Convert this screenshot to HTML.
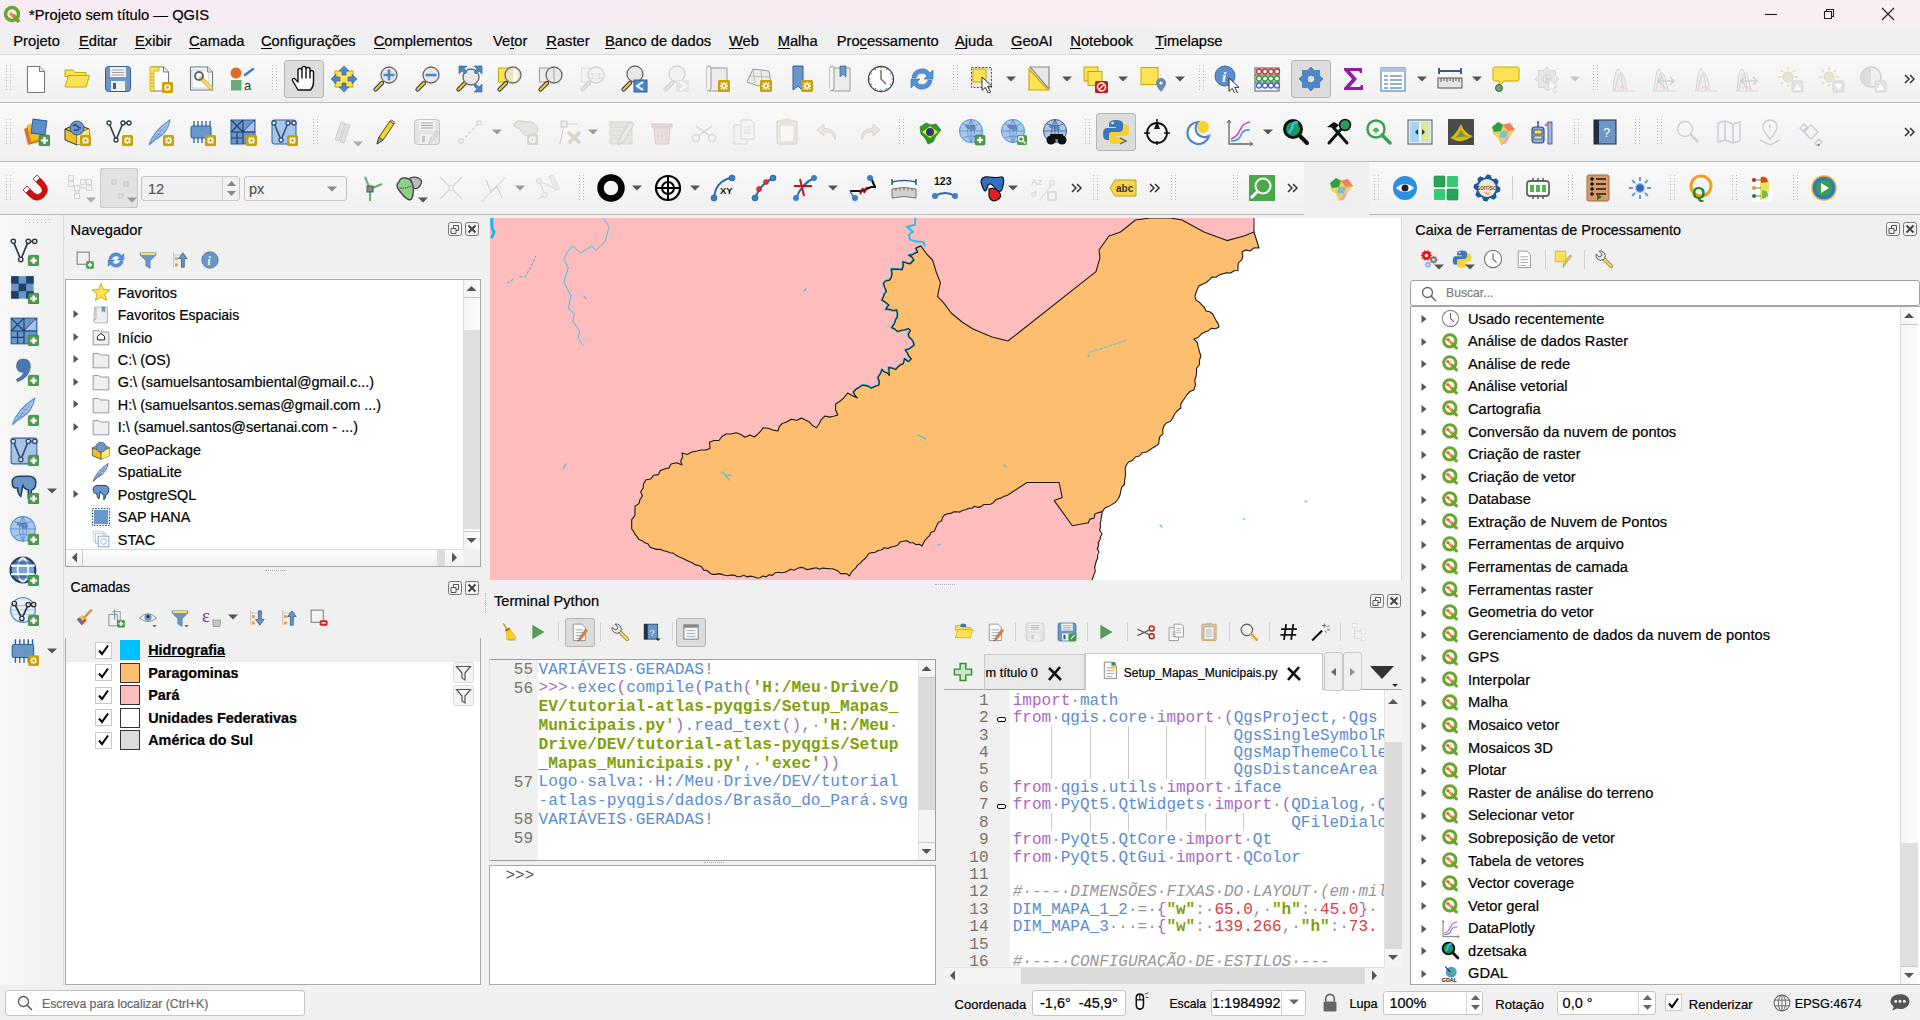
<!DOCTYPE html><html><head><meta charset="utf-8"><style>
*{margin:0;padding:0;box-sizing:border-box}
html,body{width:1920px;height:1020px;overflow:hidden;background:#f0f0f0;position:relative}
body>div{position:absolute}
.t{position:absolute;white-space:pre;-webkit-text-stroke:0.2px currentColor}
</style></head><body><div style="left:0px;top:0px;width:1920px;height:28px;background:linear-gradient(90deg,#f7ebf5,#f8ecf3 40%,#f8eff0)"></div>
<svg style="position:absolute;left:3px;top:5px;" width="19" height="19" viewBox="0 0 19 19"><circle cx="9" cy="9" r="6.5" fill="none" stroke="#6aa430" stroke-width="3.5"/><path d="M10 10l6 7" stroke="#6aa430" stroke-width="3.5"/><path d="M7 8l4 4" stroke="#f08a30" stroke-width="3"/></svg>
<div class="t" style="left:29px;top:7.99px;font-size:14.723px;line-height:14.723px;color:#000;font-weight:normal;font-family:'Liberation Sans',sans-serif;">*Projeto sem título — QGIS</div>
<svg style="position:absolute;left:1764px;top:8px;" width="14" height="12" viewBox="0 0 14 12"><path d="M1 6.5H13" stroke="#222" stroke-width="1.1"/></svg>
<svg style="position:absolute;left:1822px;top:7px;" width="14" height="14" viewBox="0 0 14 14"><path d="M2.5 4.5h7v7h-7z M4.5 4.5V2.5h7v7h-2" fill="none" stroke="#222" stroke-width="1.1"/></svg>
<svg style="position:absolute;left:1881px;top:7px;" width="14" height="14" viewBox="0 0 14 14"><path d="M1 1L13 13M13 1L1 13" stroke="#222" stroke-width="1.2"/></svg>
<div style="left:0px;top:28px;width:1920px;height:26px;background:#f0f0f0"></div>
<div class="t" style="left:13.3px;top:34.01px;font-size:14.7px;line-height:14.7px;color:#000;font-weight:normal;font-family:'Liberation Sans',sans-serif;">Projeto</div>
<div style="left:36px;top:48px;width:3px;height:1px;background:#000"></div>
<div class="t" style="left:79px;top:34.01px;font-size:14.7px;line-height:14.7px;color:#000;font-weight:normal;font-family:'Liberation Sans',sans-serif;">Editar</div>
<div style="left:79px;top:48px;width:10px;height:1px;background:#000"></div>
<div class="t" style="left:135px;top:34.01px;font-size:14.7px;line-height:14.7px;color:#000;font-weight:normal;font-family:'Liberation Sans',sans-serif;">Exibir</div>
<div style="left:135px;top:48px;width:10px;height:1px;background:#000"></div>
<div class="t" style="left:189px;top:34.01px;font-size:14.7px;line-height:14.7px;color:#000;font-weight:normal;font-family:'Liberation Sans',sans-serif;">Camada</div>
<div style="left:189px;top:48px;width:11px;height:1px;background:#000"></div>
<div class="t" style="left:261px;top:34.01px;font-size:14.7px;line-height:14.7px;color:#000;font-weight:normal;font-family:'Liberation Sans',sans-serif;">Configurações</div>
<div style="left:261px;top:48px;width:11px;height:1px;background:#000"></div>
<div class="t" style="left:373.7px;top:34.01px;font-size:14.7px;line-height:14.7px;color:#000;font-weight:normal;font-family:'Liberation Sans',sans-serif;">Complementos</div>
<div style="left:374px;top:48px;width:11px;height:1px;background:#000"></div>
<div class="t" style="left:493px;top:34.01px;font-size:14.7px;line-height:14.7px;color:#000;font-weight:normal;font-family:'Liberation Sans',sans-serif;">Vetor</div>
<div style="left:510px;top:48px;width:4px;height:1px;background:#000"></div>
<div class="t" style="left:546.3px;top:34.01px;font-size:14.7px;line-height:14.7px;color:#000;font-weight:normal;font-family:'Liberation Sans',sans-serif;">Raster</div>
<div style="left:546px;top:48px;width:11px;height:1px;background:#000"></div>
<div class="t" style="left:605px;top:34.01px;font-size:14.7px;line-height:14.7px;color:#000;font-weight:normal;font-family:'Liberation Sans',sans-serif;">Banco de dados</div>
<div style="left:605px;top:48px;width:10px;height:1px;background:#000"></div>
<div class="t" style="left:729px;top:34.01px;font-size:14.7px;line-height:14.7px;color:#000;font-weight:normal;font-family:'Liberation Sans',sans-serif;">Web</div>
<div style="left:729px;top:48px;width:14px;height:1px;background:#000"></div>
<div class="t" style="left:777.7px;top:34.01px;font-size:14.7px;line-height:14.7px;color:#000;font-weight:normal;font-family:'Liberation Sans',sans-serif;">Malha</div>
<div style="left:778px;top:48px;width:12px;height:1px;background:#000"></div>
<div class="t" style="left:836.7px;top:34.01px;font-size:14.7px;line-height:14.7px;color:#000;font-weight:normal;font-family:'Liberation Sans',sans-serif;">Processamento</div>
<div style="left:860px;top:48px;width:7px;height:1px;background:#000"></div>
<div class="t" style="left:955px;top:34.01px;font-size:14.7px;line-height:14.7px;color:#000;font-weight:normal;font-family:'Liberation Sans',sans-serif;">Ajuda</div>
<div style="left:955px;top:48px;width:10px;height:1px;background:#000"></div>
<div class="t" style="left:1011px;top:34.01px;font-size:14.7px;line-height:14.7px;color:#000;font-weight:normal;font-family:'Liberation Sans',sans-serif;">GeoAI</div>
<div style="left:1011px;top:48px;width:11px;height:1px;background:#000"></div>
<div class="t" style="left:1070.3px;top:34.01px;font-size:14.7px;line-height:14.7px;color:#000;font-weight:normal;font-family:'Liberation Sans',sans-serif;">Notebook</div>
<div style="left:1070px;top:48px;width:11px;height:1px;background:#000"></div>
<div class="t" style="left:1155.3px;top:34.01px;font-size:14.7px;line-height:14.7px;color:#000;font-weight:normal;font-family:'Liberation Sans',sans-serif;">Timelapse</div>
<div style="left:1155px;top:48px;width:9px;height:1px;background:#000"></div>
<div style="left:0px;top:54px;width:1920px;height:1px;background:#dadada"></div>
<div style="left:0px;top:55px;width:1920px;height:48px;background:linear-gradient(#f9f9f9,#f0f0f0)"></div>
<div style="left:0px;top:102px;width:1920px;height:1px;background:#b9b9b9"></div>
<div style="left:0px;top:103px;width:1920px;height:59px;background:linear-gradient(#f9f9f9,#f0f0f0)"></div>
<div style="left:0px;top:161px;width:1920px;height:1px;background:#b9b9b9"></div>
<div style="left:0px;top:162px;width:1920px;height:53px;background:linear-gradient(#f9f9f9,#f0f0f0)"></div>
<div style="left:0px;top:214px;width:1920px;height:1px;background:#b9b9b9"></div>
<svg style="position:absolute;left:6px;top:65px;" width="5" height="27" viewBox="0 0 5 27"><rect x="0" y="0" width="1" height="1" fill="#b8b8b8"/><rect x="0" y="3" width="1" height="1" fill="#b8b8b8"/><rect x="0" y="6" width="1" height="1" fill="#b8b8b8"/><rect x="0" y="9" width="1" height="1" fill="#b8b8b8"/><rect x="0" y="12" width="1" height="1" fill="#b8b8b8"/><rect x="0" y="15" width="1" height="1" fill="#b8b8b8"/><rect x="0" y="18" width="1" height="1" fill="#b8b8b8"/><rect x="0" y="21" width="1" height="1" fill="#b8b8b8"/><rect x="0" y="24" width="1" height="1" fill="#b8b8b8"/><rect x="4" y="0" width="1" height="1" fill="#b8b8b8"/><rect x="4" y="3" width="1" height="1" fill="#b8b8b8"/><rect x="4" y="6" width="1" height="1" fill="#b8b8b8"/><rect x="4" y="9" width="1" height="1" fill="#b8b8b8"/><rect x="4" y="12" width="1" height="1" fill="#b8b8b8"/><rect x="4" y="15" width="1" height="1" fill="#b8b8b8"/><rect x="4" y="18" width="1" height="1" fill="#b8b8b8"/><rect x="4" y="21" width="1" height="1" fill="#b8b8b8"/><rect x="4" y="24" width="1" height="1" fill="#b8b8b8"/></svg>
<svg style="position:absolute;left:272px;top:65px;" width="5" height="27" viewBox="0 0 5 27"><rect x="0" y="0" width="1" height="1" fill="#b8b8b8"/><rect x="0" y="3" width="1" height="1" fill="#b8b8b8"/><rect x="0" y="6" width="1" height="1" fill="#b8b8b8"/><rect x="0" y="9" width="1" height="1" fill="#b8b8b8"/><rect x="0" y="12" width="1" height="1" fill="#b8b8b8"/><rect x="0" y="15" width="1" height="1" fill="#b8b8b8"/><rect x="0" y="18" width="1" height="1" fill="#b8b8b8"/><rect x="0" y="21" width="1" height="1" fill="#b8b8b8"/><rect x="0" y="24" width="1" height="1" fill="#b8b8b8"/><rect x="4" y="0" width="1" height="1" fill="#b8b8b8"/><rect x="4" y="3" width="1" height="1" fill="#b8b8b8"/><rect x="4" y="6" width="1" height="1" fill="#b8b8b8"/><rect x="4" y="9" width="1" height="1" fill="#b8b8b8"/><rect x="4" y="12" width="1" height="1" fill="#b8b8b8"/><rect x="4" y="15" width="1" height="1" fill="#b8b8b8"/><rect x="4" y="18" width="1" height="1" fill="#b8b8b8"/><rect x="4" y="21" width="1" height="1" fill="#b8b8b8"/><rect x="4" y="24" width="1" height="1" fill="#b8b8b8"/></svg>
<svg style="position:absolute;left:953px;top:65px;" width="5" height="27" viewBox="0 0 5 27"><rect x="0" y="0" width="1" height="1" fill="#b8b8b8"/><rect x="0" y="3" width="1" height="1" fill="#b8b8b8"/><rect x="0" y="6" width="1" height="1" fill="#b8b8b8"/><rect x="0" y="9" width="1" height="1" fill="#b8b8b8"/><rect x="0" y="12" width="1" height="1" fill="#b8b8b8"/><rect x="0" y="15" width="1" height="1" fill="#b8b8b8"/><rect x="0" y="18" width="1" height="1" fill="#b8b8b8"/><rect x="0" y="21" width="1" height="1" fill="#b8b8b8"/><rect x="0" y="24" width="1" height="1" fill="#b8b8b8"/><rect x="4" y="0" width="1" height="1" fill="#b8b8b8"/><rect x="4" y="3" width="1" height="1" fill="#b8b8b8"/><rect x="4" y="6" width="1" height="1" fill="#b8b8b8"/><rect x="4" y="9" width="1" height="1" fill="#b8b8b8"/><rect x="4" y="12" width="1" height="1" fill="#b8b8b8"/><rect x="4" y="15" width="1" height="1" fill="#b8b8b8"/><rect x="4" y="18" width="1" height="1" fill="#b8b8b8"/><rect x="4" y="21" width="1" height="1" fill="#b8b8b8"/><rect x="4" y="24" width="1" height="1" fill="#b8b8b8"/></svg>
<svg style="position:absolute;left:1199px;top:65px;" width="5" height="27" viewBox="0 0 5 27"><rect x="0" y="0" width="1" height="1" fill="#b8b8b8"/><rect x="0" y="3" width="1" height="1" fill="#b8b8b8"/><rect x="0" y="6" width="1" height="1" fill="#b8b8b8"/><rect x="0" y="9" width="1" height="1" fill="#b8b8b8"/><rect x="0" y="12" width="1" height="1" fill="#b8b8b8"/><rect x="0" y="15" width="1" height="1" fill="#b8b8b8"/><rect x="0" y="18" width="1" height="1" fill="#b8b8b8"/><rect x="0" y="21" width="1" height="1" fill="#b8b8b8"/><rect x="0" y="24" width="1" height="1" fill="#b8b8b8"/><rect x="4" y="0" width="1" height="1" fill="#b8b8b8"/><rect x="4" y="3" width="1" height="1" fill="#b8b8b8"/><rect x="4" y="6" width="1" height="1" fill="#b8b8b8"/><rect x="4" y="9" width="1" height="1" fill="#b8b8b8"/><rect x="4" y="12" width="1" height="1" fill="#b8b8b8"/><rect x="4" y="15" width="1" height="1" fill="#b8b8b8"/><rect x="4" y="18" width="1" height="1" fill="#b8b8b8"/><rect x="4" y="21" width="1" height="1" fill="#b8b8b8"/><rect x="4" y="24" width="1" height="1" fill="#b8b8b8"/></svg>
<svg style="position:absolute;left:1593px;top:65px;" width="5" height="27" viewBox="0 0 5 27"><rect x="0" y="0" width="1" height="1" fill="#b8b8b8"/><rect x="0" y="3" width="1" height="1" fill="#b8b8b8"/><rect x="0" y="6" width="1" height="1" fill="#b8b8b8"/><rect x="0" y="9" width="1" height="1" fill="#b8b8b8"/><rect x="0" y="12" width="1" height="1" fill="#b8b8b8"/><rect x="0" y="15" width="1" height="1" fill="#b8b8b8"/><rect x="0" y="18" width="1" height="1" fill="#b8b8b8"/><rect x="0" y="21" width="1" height="1" fill="#b8b8b8"/><rect x="0" y="24" width="1" height="1" fill="#b8b8b8"/><rect x="4" y="0" width="1" height="1" fill="#b8b8b8"/><rect x="4" y="3" width="1" height="1" fill="#b8b8b8"/><rect x="4" y="6" width="1" height="1" fill="#b8b8b8"/><rect x="4" y="9" width="1" height="1" fill="#b8b8b8"/><rect x="4" y="12" width="1" height="1" fill="#b8b8b8"/><rect x="4" y="15" width="1" height="1" fill="#b8b8b8"/><rect x="4" y="18" width="1" height="1" fill="#b8b8b8"/><rect x="4" y="21" width="1" height="1" fill="#b8b8b8"/><rect x="4" y="24" width="1" height="1" fill="#b8b8b8"/></svg>
<div style="left:284px;top:60px;width:40px;height:38px;background:#dcdcdc;border:1px solid #b4b4b4;border-radius:3px"></div>
<div style="left:1291px;top:60px;width:40px;height:38px;background:#dcdcdc;border:1px solid #b4b4b4;border-radius:3px"></div>
<svg style="position:absolute;left:22px;top:65px;" width="28" height="28" viewBox="0 0 28 28"><path d="M5.5 1.5h12l5 5v21h-17z" fill="#fff" stroke="#777" stroke-width="1.1"/><path d="M17.5 1.5v5h5" fill="#eee" stroke="#777" stroke-width="1"/></svg>
<svg style="position:absolute;left:63px;top:65px;" width="28" height="28" viewBox="0 0 28 28"><path d="M2 5h8l2 2.5h11v4H2z" fill="#fde254" stroke="#c8a800"/><path d="M2 22L5.5 10.5H26.5L23 22z" fill="#fde254" stroke="#c8a800"/></svg>
<svg style="position:absolute;left:104px;top:65px;" width="28" height="28" viewBox="0 0 28 28"><rect x="1.5" y="1.5" width="25" height="25" rx="3" fill="#6a96c8" stroke="#2f5f98"/><rect x="6" y="2" width="16" height="10" fill="#f4f4f4"/><path d="M8 5h12M8 7.5h12M8 10h12" stroke="#888" stroke-width="0.8"/><rect x="7" y="16" width="14" height="10" fill="#f0f0f0"/><rect x="9" y="18" width="3" height="6" fill="#2f5f98"/></svg>
<svg style="position:absolute;left:146px;top:65px;" width="28" height="28" viewBox="0 0 28 28"><path d="M5.5 2.0h12l5 5v19h-17z" fill="#fff" stroke="#777" stroke-width="1.1"/><path d="M17.5 2.0v5h5" fill="#eee" stroke="#777" stroke-width="1"/><path d="M4 2h9v4h-5v20H4z" fill="#fde254" stroke="#c8a800" stroke-width="0.8"/><path d="M5 9h2M5 12h2M5 15h2M5 18h2M5 21h2" stroke="#b89800" stroke-width="0.7"/><rect x="16" y="17" width="11" height="11" rx="1.5" fill="#c9a100"/><g stroke="#fff" stroke-width="1.3"><path d="M21.5 19v7M18 22.5h7M18.8 19.8l5.4 5.4M24.2 19.8l-5.4 5.4"/></g><circle cx="21.5" cy="22.5" r="1.8" fill="#c9a100" stroke="#fff"/></svg>
<svg style="position:absolute;left:187px;top:65px;" width="28" height="28" viewBox="0 0 28 28"><path d="M3.5 2.0h17l5 5v18h-22z" fill="#fff" stroke="#777" stroke-width="1.1"/><path d="M20.5 2.0v5h5" fill="#eee" stroke="#777" stroke-width="1"/><rect x="5" y="5" width="17" height="18" fill="none" stroke="#a8c0f0" stroke-width="0.8"/><path d="M14 13l10 10" stroke="#d8b830" stroke-width="4" stroke-linecap="round"/><path d="M14 13l10 10" stroke="#fde070" stroke-width="2" stroke-linecap="round"/><circle cx="12" cy="11" r="4" fill="none" stroke="#666" stroke-width="2"/></svg>
<svg style="position:absolute;left:228px;top:65px;" width="28" height="28" viewBox="0 0 28 28"><circle cx="8" cy="8" r="5.5" fill="#e06a2c"/><rect x="3" y="15" width="10.5" height="10.5" fill="#6aaa78"/><path d="M17 10L25 4" stroke="#4a78c0" stroke-width="2.5" stroke-linecap="round"/><text x="16" y="25" font-family="Liberation Sans" font-size="13" fill="#333">a</text></svg>
<svg style="position:absolute;left:289px;top:65px;" width="28" height="28" viewBox="0 0 28 28"><path d="M9 25L3.5 15.5Q3 13 5.5 13.5L9 17V5.5Q9 3.5 11 3.5T13 5.5V13V3.5Q13 1.5 15 1.5T17 3.5V13V4.5Q17 2.5 19 2.5T21 4.5V13V7Q21 5.5 22.5 5.5T24.5 7V17Q24.5 22 21.5 25z" fill="#fff" stroke="#111" stroke-width="1.4" stroke-linejoin="round"/></svg>
<svg style="position:absolute;left:330px;top:65px;" width="28" height="28" viewBox="0 0 28 28"><rect x="5" y="6" width="18" height="16" fill="#fde254" stroke="#c8a800"/><g fill="#4f86c6" stroke="#2f5f98" stroke-width="0.6"><path d="M14 1l5 5h-3v4h-4V6H9z"/><path d="M14 27l5-5h-3v-4h-4v4H9z"/><path d="M1 14l5-5v3h4v4H6v3z"/><path d="M27 14l-5-5v3h-4v4h4v3z"/></g></svg>
<svg style="position:absolute;left:372px;top:65px;" width="28" height="28" viewBox="0 0 28 28"><path d="M3.5 24.5L10 18" stroke="#333" stroke-width="4.2" stroke-linecap="round"/><path d="M3.5 24.5L10 18" stroke="#f2cf3a" stroke-width="2.2" stroke-linecap="round"/><circle cx="17" cy="10" r="8" fill="#e8e8e8" stroke="#666" stroke-width="1.3"/><path d="M17 4.5v11M11.5 10h11" stroke="#4f86c6" stroke-width="2.6"/></svg>
<svg style="position:absolute;left:414px;top:65px;" width="28" height="28" viewBox="0 0 28 28"><path d="M3.5 24.5L10 18" stroke="#333" stroke-width="4.2" stroke-linecap="round"/><path d="M3.5 24.5L10 18" stroke="#f2cf3a" stroke-width="2.2" stroke-linecap="round"/><circle cx="17" cy="10" r="8" fill="#e8e8e8" stroke="#666" stroke-width="1.3"/><path d="M11.5 10h11" stroke="#4f86c6" stroke-width="2.6"/></svg>
<svg style="position:absolute;left:455px;top:65px;" width="28" height="28" viewBox="0 0 28 28"><path d="M3.5 24.5L10 18" stroke="#333" stroke-width="4.2" stroke-linecap="round"/><path d="M3.5 24.5L10 18" stroke="#f2cf3a" stroke-width="2.2" stroke-linecap="round"/><circle cx="16" cy="12" r="8" fill="#e8e8e8" stroke="#666" stroke-width="1.3"/><g fill="#4f86c6" stroke="#2f5f98" stroke-width="0.6"><path d="M4 1h8l-3 3 3 3-2 2-3-3-3 3z"/><path d="M27 1h-8l3 3-3 3 2 2 3-3 3 3z"/><path d="M27 27h-8l3-3-3-3 2-2 3 3 3-3z"/></g></svg>
<svg style="position:absolute;left:496px;top:65px;" width="28" height="28" viewBox="0 0 28 28"><rect x="2.5" y="3" width="9" height="14" fill="#fde254" stroke="#c8a800"/><path d="M3.5 24.5L10 18" stroke="#333" stroke-width="4.2" stroke-linecap="round"/><path d="M3.5 24.5L10 18" stroke="#f2cf3a" stroke-width="2.2" stroke-linecap="round"/><circle cx="17" cy="10" r="8" fill="#e8e2c8" stroke="#666" stroke-width="1.3"/><path d="M17 2.5a8 8 0 0 1 0 15z" fill="#fffbe0"/></svg>
<svg style="position:absolute;left:537px;top:65px;" width="28" height="28" viewBox="0 0 28 28"><rect x="2.5" y="3" width="9" height="14" fill="#eee" stroke="#999"/><path d="M3.5 24.5L10 18" stroke="#333" stroke-width="4.2" stroke-linecap="round"/><path d="M3.5 24.5L10 18" stroke="#f2cf3a" stroke-width="2.2" stroke-linecap="round"/><circle cx="17" cy="10" r="8" fill="#e8e8e8" stroke="#666" stroke-width="1.3"/><path d="M17 2.5v15" stroke="#aaa"/></svg>
<svg style="position:absolute;left:579px;top:65px;" width="28" height="28" viewBox="0 0 28 28"><rect x="2.5" y="3" width="9" height="14" fill="#f2f2f2" stroke="#ddd"/><path d="M3.5 24.5L10 18" stroke="#d0d0d0" stroke-width="4.2" stroke-linecap="round"/><path d="M3.5 24.5L10 18" stroke="#e0e0e0" stroke-width="2.2" stroke-linecap="round"/><circle cx="17" cy="10" r="8" fill="#f2f2f2" stroke="#d0d0d0" stroke-width="1.3"/><text x="10.5" y="14" font-family="Liberation Sans" font-size="9" fill="#d4d4d4">1:1</text></svg>
<svg style="position:absolute;left:620px;top:65px;" width="28" height="28" viewBox="0 0 28 28"><path d="M3.5 24.5L10 18" stroke="#333" stroke-width="4.2" stroke-linecap="round"/><path d="M3.5 24.5L10 18" stroke="#f2cf3a" stroke-width="2.2" stroke-linecap="round"/><circle cx="15" cy="9" r="8" fill="#e8e8e8" stroke="#666" stroke-width="1.3"/><rect x="14" y="15" width="13" height="12" fill="#4f86c6" stroke="#2f5f98"/><path d="M23 17l-6 4 6 4" stroke="#fff" stroke-width="2" fill="none"/></svg>
<svg style="position:absolute;left:662px;top:65px;" width="28" height="28" viewBox="0 0 28 28"><path d="M3.5 24.5L10 18" stroke="#d0d0d0" stroke-width="4.2" stroke-linecap="round"/><path d="M3.5 24.5L10 18" stroke="#e0e0e0" stroke-width="2.2" stroke-linecap="round"/><circle cx="15" cy="9" r="8" fill="#f2f2f2" stroke="#d0d0d0" stroke-width="1.3"/><rect x="14" y="15" width="13" height="12" fill="#e4e4e4"/><path d="M18 17l6 4-6 4" stroke="#fff" stroke-width="2" fill="none"/></svg>
<svg style="position:absolute;left:703px;top:65px;" width="28" height="28" viewBox="0 0 28 28"><path d="M4 3h20v23H7q-3 0-3-3z" fill="#ececec" stroke="#999"/><path d="M4 3q0-2 2-2t2 2v20q0 3-4 3" fill="#f4f4f4" stroke="#999"/><rect x="15" y="15" width="12" height="12" rx="1.5" fill="#c9a100"/><g stroke="#fff" stroke-width="1.3"><path d="M21.0 17v8M17 21.0h8M17.8 17.8l6.4 6.4M24.2 17.8l-6.4 6.4"/></g><circle cx="21.0" cy="21.0" r="1.8" fill="#c9a100" stroke="#fff"/></svg>
<svg style="position:absolute;left:745px;top:65px;" width="28" height="28" viewBox="0 0 28 28"><path d="M2 17L8 4L24 6L26 18L13 21z" fill="#ececec" stroke="#999"/><path d="M8 4L10 18M16 5L17 20M3 11L25 12" stroke="#aaa" stroke-width="0.7"/><rect x="15" y="15" width="12" height="12" rx="1.5" fill="#c9a100"/><g stroke="#fff" stroke-width="1.3"><path d="M21.0 17v8M17 21.0h8M17.8 17.8l6.4 6.4M24.2 17.8l-6.4 6.4"/></g><circle cx="21.0" cy="21.0" r="1.8" fill="#c9a100" stroke="#fff"/></svg>
<svg style="position:absolute;left:787px;top:65px;" width="28" height="28" viewBox="0 0 28 28"><path d="M6 1h10v25l-5-5-5 4z" fill="#6a96c8" stroke="#2f5f98"/><rect x="14" y="15" width="12" height="12" rx="1.5" fill="#c9a100"/><g stroke="#fff" stroke-width="1.3"><path d="M20.0 17v8M16 21.0h8M16.8 17.8l6.4 6.4M23.2 17.8l-6.4 6.4"/></g><circle cx="20.0" cy="21.0" r="1.8" fill="#c9a100" stroke="#fff"/></svg>
<svg style="position:absolute;left:826px;top:65px;" width="28" height="28" viewBox="0 0 28 28"><path d="M4 3h20v23H7q-3 0-3-3z" fill="#ececec" stroke="#999"/><path d="M4 3q0-2 2-2t2 2v20q0 3-4 3" fill="#f4f4f4" stroke="#999"/><path d="M14 1h6v11l-3-3-3 3z" fill="#6a96c8" stroke="#2f5f98" stroke-width="0.7"/></svg>
<svg style="position:absolute;left:867px;top:65px;" width="28" height="28" viewBox="0 0 28 28"><circle cx="14" cy="14" r="12.5" fill="#fff" stroke="#444" stroke-width="1.3"/><circle cx="25.0" cy="14.0" r="0.8" fill="#4f86c6"/><circle cx="23.5" cy="19.5" r="0.8" fill="#4f86c6"/><circle cx="19.5" cy="23.5" r="0.8" fill="#4f86c6"/><circle cx="14.0" cy="25.0" r="0.8" fill="#4f86c6"/><circle cx="8.5" cy="23.5" r="0.8" fill="#4f86c6"/><circle cx="4.5" cy="19.5" r="0.8" fill="#4f86c6"/><circle cx="3.0" cy="14.0" r="0.8" fill="#4f86c6"/><circle cx="4.5" cy="8.5" r="0.8" fill="#4f86c6"/><circle cx="8.5" cy="4.5" r="0.8" fill="#4f86c6"/><circle cx="14.0" cy="3.0" r="0.8" fill="#4f86c6"/><circle cx="19.5" cy="4.5" r="0.8" fill="#4f86c6"/><circle cx="23.5" cy="8.5" r="0.8" fill="#4f86c6"/><path d="M14 5v9l5 5" fill="none" stroke="#666" stroke-width="1.4"/></svg>
<svg style="position:absolute;left:908px;top:65px;" width="28" height="28" viewBox="0 0 28 28"><path d="M4 13A10 10 0 0 1 22 8l3-3v9h-9l3-3A6 6 0 0 0 8 13z" fill="#4f92d8" stroke="#2f6ab0" stroke-width="0.6"/><path d="M24 15A10 10 0 0 1 6 20l-3 3v-9h9l-3 3A6 6 0 0 0 20 15z" fill="#4f92d8" stroke="#2f6ab0" stroke-width="0.6"/></svg>
<svg style="position:absolute;left:969px;top:65px;" width="28" height="28" viewBox="0 0 28 28"><rect x="2.5" y="2.5" width="20" height="20" fill="#e8e8e8" stroke="#555" stroke-dasharray="2 1.5"/><rect x="4" y="4" width="13" height="13" fill="#fde254" stroke="#c8a800"/><path transform="translate(13 12) scale(0.95)" d="M0 0v14l3.5-3 3 6 2.5-1.2-3-6h4.5z" fill="#fff" stroke="#222" stroke-width="1"/></svg>
<svg style="position:absolute;left:1026px;top:65px;" width="28" height="28" viewBox="0 0 28 28"><path d="M4 2h19v22z" fill="#e8e8e8" stroke="#888" stroke-width="1.2"/><path d="M3 4l19 21H3z" fill="#fde254" stroke="#c8a800" stroke-width="1.2"/></svg>
<svg style="position:absolute;left:1081px;top:65px;" width="28" height="28" viewBox="0 0 28 28"><rect x="3" y="2" width="14" height="14" fill="#fde254" stroke="#c8a800"/><rect x="7" y="6.5" width="14" height="14" fill="#fde254" stroke="#c8a800"/><rect x="14" y="16" width="13" height="12" rx="1.5" fill="#d01818"/><circle cx="20.5" cy="22" r="4" fill="none" stroke="#fff" stroke-width="1.5"/><path d="M18 24.5l5-5" stroke="#fff" stroke-width="1.5"/></svg>
<svg style="position:absolute;left:1138px;top:65px;" width="28" height="28" viewBox="0 0 28 28"><rect x="3" y="2.5" width="17" height="17" fill="#fde254" stroke="#c8a800"/><path d="M23 27q-5-6-5-9a5 5 0 0 1 10 0q0 3-5 9z" fill="#6a8aa8"/><circle cx="23" cy="18" r="1.6" fill="#fff"/></svg>
<svg style="position:absolute;left:1214px;top:65px;" width="28" height="28" viewBox="0 0 28 28"><circle cx="11" cy="11" r="10" fill="#5a8ed0" stroke="#3a6aa8"/><text x="8" y="17" font-family="Liberation Serif" font-style="italic" font-weight="bold" font-size="15" fill="#fff">i</text><path transform="translate(15 13) scale(0.95)" d="M0 0v14l3.5-3 3 6 2.5-1.2-3-6h4.5z" fill="#fff" stroke="#222" stroke-width="1"/></svg>
<svg style="position:absolute;left:1253px;top:65px;" width="28" height="28" viewBox="0 0 28 28"><rect x="2" y="3" width="24" height="23" fill="#fff" stroke="#555"/><path d="M2 10h24M2 17h24" stroke="#555"/><circle cx="6" cy="6.5" r="2.5" fill="#fff" stroke="#d03030" stroke-width="1.3"/><circle cx="12" cy="6.5" r="2.5" fill="#fff" stroke="#d03030" stroke-width="1.3"/><circle cx="18" cy="6.5" r="2.5" fill="#fff" stroke="#d03030" stroke-width="1.3"/><circle cx="24" cy="6.5" r="2.5" fill="#fff" stroke="#d03030" stroke-width="1.3"/><circle cx="6" cy="13.5" r="2.5" fill="#fff" stroke="#3a9a3a" stroke-width="1.3"/><circle cx="12" cy="13.5" r="2.5" fill="#fff" stroke="#3a9a3a" stroke-width="1.3"/><circle cx="18" cy="13.5" r="2.5" fill="#fff" stroke="#3a9a3a" stroke-width="1.3"/><circle cx="24" cy="13.5" r="2.5" fill="#fff" stroke="#3a9a3a" stroke-width="1.3"/><circle cx="6" cy="20.5" r="2.5" fill="#fff" stroke="#3a6ac0" stroke-width="1.3"/><circle cx="12" cy="20.5" r="2.5" fill="#fff" stroke="#3a6ac0" stroke-width="1.3"/><circle cx="18" cy="20.5" r="2.5" fill="#fff" stroke="#3a6ac0" stroke-width="1.3"/><circle cx="24" cy="20.5" r="2.5" fill="#fff" stroke="#3a6ac0" stroke-width="1.3"/></svg>
<svg style="position:absolute;left:1297px;top:65px;" width="28" height="28" viewBox="0 0 28 28"><polygon points="26.0,14.0 22.3,17.4 22.5,22.5 17.4,22.3 14.0,26.0 10.6,22.3 5.5,22.5 5.7,17.4 2.0,14.0 5.7,10.6 5.5,5.5 10.6,5.7 14.0,2.0 17.4,5.7 22.5,5.5 22.3,10.6" fill="#4f86c6" stroke="#3a70b0" stroke-width="0.8" stroke-linejoin="round"/><circle cx="14" cy="14" r="4" fill="#dedede" stroke="#3a70b0"/></svg>
<svg style="position:absolute;left:1339px;top:65px;" width="28" height="28" viewBox="0 0 28 28"><path d="M5 3h18v5h-2l-1-2H11l7 8-7 8h10l1-2h2v5H5v-2l8-9-8-9z" fill="#9a1aa8"/></svg>
<svg style="position:absolute;left:1379px;top:65px;" width="28" height="28" viewBox="0 0 28 28"><rect x="2" y="3" width="24" height="23" fill="#fff" stroke="#4f86c6" stroke-width="1.2"/><rect x="2" y="3" width="24" height="4" fill="#a8c4e8"/><path d="M5 11h4M11 11h12M5 15h4M11 15h12M5 19h4M11 19h12M5 23h4M11 23h12" stroke="#6a96c8" stroke-width="1.6"/></svg>
<svg style="position:absolute;left:1436px;top:65px;" width="28" height="28" viewBox="0 0 28 28"><path d="M3 6h22M3 3v6M25 3v6" stroke="#3a5a88" stroke-width="2"/><rect x="2" y="13" width="24" height="10" fill="#e4e4e4" stroke="#555"/><path d="M5 13v4M8 13v3M11 13v4M14 13v3M17 13v4M20 13v3M23 13v4" stroke="#555"/></svg>
<svg style="position:absolute;left:1492px;top:65px;" width="28" height="28" viewBox="0 0 28 28"><path d="M3 2h22q2 0 2 2v10q0 2-2 2H12l-5 5v-5H3q-2 0-2-2V4q0-2 2-2z" fill="#fde254" stroke="#c8a800"/><circle cx="7" cy="23" r="3.5" fill="#6aaa78" stroke="#333" stroke-width="0.8"/></svg>
<svg style="position:absolute;left:1533px;top:65px;" width="28" height="28" viewBox="0 0 28 28"><polygon points="26.0,14.0 22.3,17.4 22.5,22.5 17.4,22.3 14.0,26.0 10.6,22.3 5.5,22.5 5.7,17.4 2.0,14.0 5.7,10.6 5.5,5.5 10.6,5.7 14.0,2.0 17.4,5.7 22.5,5.5 22.3,10.6" fill="#e6e6e6" stroke="#d0d0d0" stroke-width="0.8" stroke-linejoin="round"/><circle cx="14" cy="14" r="4" fill="#f0f0f0" stroke="#d0d0d0"/><path d="M12 10v8l6-4z" fill="#d8d8d8"/><path transform="translate(16 14) scale(0.8)" d="M0 0v14l3.5-3 3 6 2.5-1.2-3-6h4.5z" fill="#fff" stroke="#ccc" stroke-width="1"/></svg>
<svg style="position:absolute;left:1609px;top:65px;" width="28" height="28" viewBox="0 0 28 28"><path d="M4 26Q6 4 9 4T14 26M6 26Q9 8 12 8T18 26" fill="#eee" stroke="#d6d6d6" stroke-width="1.2"/><path d="M3 26h23" stroke="#d8d8d8"/><path d="M10 24q3-6 6 0" stroke="#f0c8c8" fill="none"/></svg>
<svg style="position:absolute;left:1650px;top:65px;" width="28" height="28" viewBox="0 0 28 28"><path d="M4 26Q6 4 9 4T14 26M6 26Q9 8 12 8T18 26" fill="#eee" stroke="#d6d6d6" stroke-width="1.2"/><path d="M3 26h23" stroke="#d8d8d8"/><path d="M10 24q3-6 6 0" stroke="#f0c8c8" fill="none"/><path d="M8 16h16M20 12l4 4-4 4M12 12l-4 4 4 4" stroke="#d0d0d0" stroke-width="1.5" fill="none"/></svg>
<svg style="position:absolute;left:1692px;top:65px;" width="28" height="28" viewBox="0 0 28 28"><path d="M4 26Q6 4 9 4T14 26M6 26Q9 8 12 8T18 26" fill="#eee" stroke="#d6d6d6" stroke-width="1.2"/><path d="M3 26h23" stroke="#d8d8d8"/><path d="M10 24q3-6 6 0" stroke="#f0c8c8" fill="none"/></svg>
<svg style="position:absolute;left:1733px;top:65px;" width="28" height="28" viewBox="0 0 28 28"><path d="M4 26Q6 4 9 4T14 26M6 26Q9 8 12 8T18 26" fill="#eee" stroke="#d6d6d6" stroke-width="1.2"/><path d="M3 26h23" stroke="#d8d8d8"/><path d="M10 24q3-6 6 0" stroke="#f0c8c8" fill="none"/><path d="M8 16h16M20 12l4 4-4 4M12 12l-4 4 4 4" stroke="#d0d0d0" stroke-width="1.5" fill="none"/></svg>
<svg style="position:absolute;left:1776px;top:65px;" width="28" height="28" viewBox="0 0 28 28"><circle cx="12" cy="12" r="5" fill="#e8e4d0" stroke="#d8d8c8"/><path d="M19.0 12.0L22.0 12.0" stroke="#e0dcc8" stroke-width="1.6"/><path d="M17.0 16.9L19.1 19.1" stroke="#e0dcc8" stroke-width="1.6"/><path d="M12.0 19.0L12.0 22.0" stroke="#e0dcc8" stroke-width="1.6"/><path d="M7.1 17.0L4.9 19.1" stroke="#e0dcc8" stroke-width="1.6"/><path d="M5.0 12.0L2.0 12.0" stroke="#e0dcc8" stroke-width="1.6"/><path d="M7.0 7.1L4.9 4.9" stroke="#e0dcc8" stroke-width="1.6"/><path d="M12.0 5.0L12.0 2.0" stroke="#e0dcc8" stroke-width="1.6"/><path d="M16.9 7.0L19.1 4.9" stroke="#e0dcc8" stroke-width="1.6"/><rect x="16" y="16" width="11" height="11" rx="1.5" fill="#e4e4e4" stroke="#d4d4d4"/><path d="M18 25l3.5-6 3.5 6z" fill="#fff"/></svg>
<svg style="position:absolute;left:1817px;top:65px;" width="28" height="28" viewBox="0 0 28 28"><circle cx="12" cy="12" r="5" fill="#e8e4d0" stroke="#d8d8c8"/><path d="M19.0 12.0L22.0 12.0" stroke="#e0dcc8" stroke-width="1.6"/><path d="M17.0 16.9L19.1 19.1" stroke="#e0dcc8" stroke-width="1.6"/><path d="M12.0 19.0L12.0 22.0" stroke="#e0dcc8" stroke-width="1.6"/><path d="M7.1 17.0L4.9 19.1" stroke="#e0dcc8" stroke-width="1.6"/><path d="M5.0 12.0L2.0 12.0" stroke="#e0dcc8" stroke-width="1.6"/><path d="M7.0 7.1L4.9 4.9" stroke="#e0dcc8" stroke-width="1.6"/><path d="M12.0 5.0L12.0 2.0" stroke="#e0dcc8" stroke-width="1.6"/><path d="M16.9 7.0L19.1 4.9" stroke="#e0dcc8" stroke-width="1.6"/><rect x="16" y="16" width="11" height="11" rx="1.5" fill="#e4e4e4" stroke="#d4d4d4"/><path d="M18 19l3.5 6 3.5-6z" fill="#fff"/></svg>
<svg style="position:absolute;left:1859px;top:65px;" width="28" height="28" viewBox="0 0 28 28"><circle cx="12" cy="12" r="10" fill="#f0f0f0" stroke="#d0d0d0" stroke-width="1.5"/><path d="M12 2a10 10 0 0 0 0 20z" fill="#dcdcdc"/><rect x="16" y="16" width="11" height="11" rx="1.5" fill="#e4e4e4" stroke="#d4d4d4"/><path d="M18 25l3.5-6 3.5 6z" fill="#fff"/></svg>
<svg style="position:absolute;left:1005px;top:75px;" width="12" height="8" viewBox="0 0 12 8"><path d="M1 1.5h10l-5 5z" fill="#555"/></svg>
<svg style="position:absolute;left:1061.3px;top:75px;" width="12" height="8" viewBox="0 0 12 8"><path d="M1 1.5h10l-5 5z" fill="#555"/></svg>
<svg style="position:absolute;left:1117px;top:75px;" width="12" height="8" viewBox="0 0 12 8"><path d="M1 1.5h10l-5 5z" fill="#555"/></svg>
<svg style="position:absolute;left:1174px;top:75px;" width="12" height="8" viewBox="0 0 12 8"><path d="M1 1.5h10l-5 5z" fill="#555"/></svg>
<svg style="position:absolute;left:1415.7px;top:75px;" width="12" height="8" viewBox="0 0 12 8"><path d="M1 1.5h10l-5 5z" fill="#555"/></svg>
<svg style="position:absolute;left:1471px;top:75px;" width="12" height="8" viewBox="0 0 12 8"><path d="M1 1.5h10l-5 5z" fill="#555"/></svg>
<svg style="position:absolute;left:1569px;top:75px;" width="12" height="8" viewBox="0 0 12 8"><path d="M1 1.5h10l-5 5z" fill="#c8c8c8"/></svg>
<svg style="position:absolute;left:1903px;top:73px;" width="14" height="12" viewBox="0 0 14 12"><path d="M2 2l4 4-4 4M7 2l4 4-4 4" stroke="#333" stroke-width="1.5" fill="none"/></svg>
<svg style="position:absolute;left:6px;top:119px;" width="5" height="27" viewBox="0 0 5 27"><rect x="0" y="0" width="1" height="1" fill="#b8b8b8"/><rect x="0" y="3" width="1" height="1" fill="#b8b8b8"/><rect x="0" y="6" width="1" height="1" fill="#b8b8b8"/><rect x="0" y="9" width="1" height="1" fill="#b8b8b8"/><rect x="0" y="12" width="1" height="1" fill="#b8b8b8"/><rect x="0" y="15" width="1" height="1" fill="#b8b8b8"/><rect x="0" y="18" width="1" height="1" fill="#b8b8b8"/><rect x="0" y="21" width="1" height="1" fill="#b8b8b8"/><rect x="0" y="24" width="1" height="1" fill="#b8b8b8"/><rect x="4" y="0" width="1" height="1" fill="#b8b8b8"/><rect x="4" y="3" width="1" height="1" fill="#b8b8b8"/><rect x="4" y="6" width="1" height="1" fill="#b8b8b8"/><rect x="4" y="9" width="1" height="1" fill="#b8b8b8"/><rect x="4" y="12" width="1" height="1" fill="#b8b8b8"/><rect x="4" y="15" width="1" height="1" fill="#b8b8b8"/><rect x="4" y="18" width="1" height="1" fill="#b8b8b8"/><rect x="4" y="21" width="1" height="1" fill="#b8b8b8"/><rect x="4" y="24" width="1" height="1" fill="#b8b8b8"/></svg>
<svg style="position:absolute;left:313px;top:119px;" width="5" height="27" viewBox="0 0 5 27"><rect x="0" y="0" width="1" height="1" fill="#b8b8b8"/><rect x="0" y="3" width="1" height="1" fill="#b8b8b8"/><rect x="0" y="6" width="1" height="1" fill="#b8b8b8"/><rect x="0" y="9" width="1" height="1" fill="#b8b8b8"/><rect x="0" y="12" width="1" height="1" fill="#b8b8b8"/><rect x="0" y="15" width="1" height="1" fill="#b8b8b8"/><rect x="0" y="18" width="1" height="1" fill="#b8b8b8"/><rect x="0" y="21" width="1" height="1" fill="#b8b8b8"/><rect x="0" y="24" width="1" height="1" fill="#b8b8b8"/><rect x="4" y="0" width="1" height="1" fill="#b8b8b8"/><rect x="4" y="3" width="1" height="1" fill="#b8b8b8"/><rect x="4" y="6" width="1" height="1" fill="#b8b8b8"/><rect x="4" y="9" width="1" height="1" fill="#b8b8b8"/><rect x="4" y="12" width="1" height="1" fill="#b8b8b8"/><rect x="4" y="15" width="1" height="1" fill="#b8b8b8"/><rect x="4" y="18" width="1" height="1" fill="#b8b8b8"/><rect x="4" y="21" width="1" height="1" fill="#b8b8b8"/><rect x="4" y="24" width="1" height="1" fill="#b8b8b8"/></svg>
<svg style="position:absolute;left:899px;top:119px;" width="5" height="27" viewBox="0 0 5 27"><rect x="0" y="0" width="1" height="1" fill="#b8b8b8"/><rect x="0" y="3" width="1" height="1" fill="#b8b8b8"/><rect x="0" y="6" width="1" height="1" fill="#b8b8b8"/><rect x="0" y="9" width="1" height="1" fill="#b8b8b8"/><rect x="0" y="12" width="1" height="1" fill="#b8b8b8"/><rect x="0" y="15" width="1" height="1" fill="#b8b8b8"/><rect x="0" y="18" width="1" height="1" fill="#b8b8b8"/><rect x="0" y="21" width="1" height="1" fill="#b8b8b8"/><rect x="0" y="24" width="1" height="1" fill="#b8b8b8"/><rect x="4" y="0" width="1" height="1" fill="#b8b8b8"/><rect x="4" y="3" width="1" height="1" fill="#b8b8b8"/><rect x="4" y="6" width="1" height="1" fill="#b8b8b8"/><rect x="4" y="9" width="1" height="1" fill="#b8b8b8"/><rect x="4" y="12" width="1" height="1" fill="#b8b8b8"/><rect x="4" y="15" width="1" height="1" fill="#b8b8b8"/><rect x="4" y="18" width="1" height="1" fill="#b8b8b8"/><rect x="4" y="21" width="1" height="1" fill="#b8b8b8"/><rect x="4" y="24" width="1" height="1" fill="#b8b8b8"/></svg>
<svg style="position:absolute;left:1085px;top:119px;" width="5" height="27" viewBox="0 0 5 27"><rect x="0" y="0" width="1" height="1" fill="#b8b8b8"/><rect x="0" y="3" width="1" height="1" fill="#b8b8b8"/><rect x="0" y="6" width="1" height="1" fill="#b8b8b8"/><rect x="0" y="9" width="1" height="1" fill="#b8b8b8"/><rect x="0" y="12" width="1" height="1" fill="#b8b8b8"/><rect x="0" y="15" width="1" height="1" fill="#b8b8b8"/><rect x="0" y="18" width="1" height="1" fill="#b8b8b8"/><rect x="0" y="21" width="1" height="1" fill="#b8b8b8"/><rect x="0" y="24" width="1" height="1" fill="#b8b8b8"/><rect x="4" y="0" width="1" height="1" fill="#b8b8b8"/><rect x="4" y="3" width="1" height="1" fill="#b8b8b8"/><rect x="4" y="6" width="1" height="1" fill="#b8b8b8"/><rect x="4" y="9" width="1" height="1" fill="#b8b8b8"/><rect x="4" y="12" width="1" height="1" fill="#b8b8b8"/><rect x="4" y="15" width="1" height="1" fill="#b8b8b8"/><rect x="4" y="18" width="1" height="1" fill="#b8b8b8"/><rect x="4" y="21" width="1" height="1" fill="#b8b8b8"/><rect x="4" y="24" width="1" height="1" fill="#b8b8b8"/></svg>
<svg style="position:absolute;left:1574px;top:119px;" width="5" height="27" viewBox="0 0 5 27"><rect x="0" y="0" width="1" height="1" fill="#b8b8b8"/><rect x="0" y="3" width="1" height="1" fill="#b8b8b8"/><rect x="0" y="6" width="1" height="1" fill="#b8b8b8"/><rect x="0" y="9" width="1" height="1" fill="#b8b8b8"/><rect x="0" y="12" width="1" height="1" fill="#b8b8b8"/><rect x="0" y="15" width="1" height="1" fill="#b8b8b8"/><rect x="0" y="18" width="1" height="1" fill="#b8b8b8"/><rect x="0" y="21" width="1" height="1" fill="#b8b8b8"/><rect x="0" y="24" width="1" height="1" fill="#b8b8b8"/><rect x="4" y="0" width="1" height="1" fill="#b8b8b8"/><rect x="4" y="3" width="1" height="1" fill="#b8b8b8"/><rect x="4" y="6" width="1" height="1" fill="#b8b8b8"/><rect x="4" y="9" width="1" height="1" fill="#b8b8b8"/><rect x="4" y="12" width="1" height="1" fill="#b8b8b8"/><rect x="4" y="15" width="1" height="1" fill="#b8b8b8"/><rect x="4" y="18" width="1" height="1" fill="#b8b8b8"/><rect x="4" y="21" width="1" height="1" fill="#b8b8b8"/><rect x="4" y="24" width="1" height="1" fill="#b8b8b8"/></svg>
<svg style="position:absolute;left:1635px;top:119px;" width="5" height="27" viewBox="0 0 5 27"><rect x="0" y="0" width="1" height="1" fill="#b8b8b8"/><rect x="0" y="3" width="1" height="1" fill="#b8b8b8"/><rect x="0" y="6" width="1" height="1" fill="#b8b8b8"/><rect x="0" y="9" width="1" height="1" fill="#b8b8b8"/><rect x="0" y="12" width="1" height="1" fill="#b8b8b8"/><rect x="0" y="15" width="1" height="1" fill="#b8b8b8"/><rect x="0" y="18" width="1" height="1" fill="#b8b8b8"/><rect x="0" y="21" width="1" height="1" fill="#b8b8b8"/><rect x="0" y="24" width="1" height="1" fill="#b8b8b8"/><rect x="4" y="0" width="1" height="1" fill="#b8b8b8"/><rect x="4" y="3" width="1" height="1" fill="#b8b8b8"/><rect x="4" y="6" width="1" height="1" fill="#b8b8b8"/><rect x="4" y="9" width="1" height="1" fill="#b8b8b8"/><rect x="4" y="12" width="1" height="1" fill="#b8b8b8"/><rect x="4" y="15" width="1" height="1" fill="#b8b8b8"/><rect x="4" y="18" width="1" height="1" fill="#b8b8b8"/><rect x="4" y="21" width="1" height="1" fill="#b8b8b8"/><rect x="4" y="24" width="1" height="1" fill="#b8b8b8"/></svg>
<svg style="position:absolute;left:1657px;top:119px;" width="5" height="27" viewBox="0 0 5 27"><rect x="0" y="0" width="1" height="1" fill="#b8b8b8"/><rect x="0" y="3" width="1" height="1" fill="#b8b8b8"/><rect x="0" y="6" width="1" height="1" fill="#b8b8b8"/><rect x="0" y="9" width="1" height="1" fill="#b8b8b8"/><rect x="0" y="12" width="1" height="1" fill="#b8b8b8"/><rect x="0" y="15" width="1" height="1" fill="#b8b8b8"/><rect x="0" y="18" width="1" height="1" fill="#b8b8b8"/><rect x="0" y="21" width="1" height="1" fill="#b8b8b8"/><rect x="0" y="24" width="1" height="1" fill="#b8b8b8"/><rect x="4" y="0" width="1" height="1" fill="#b8b8b8"/><rect x="4" y="3" width="1" height="1" fill="#b8b8b8"/><rect x="4" y="6" width="1" height="1" fill="#b8b8b8"/><rect x="4" y="9" width="1" height="1" fill="#b8b8b8"/><rect x="4" y="12" width="1" height="1" fill="#b8b8b8"/><rect x="4" y="15" width="1" height="1" fill="#b8b8b8"/><rect x="4" y="18" width="1" height="1" fill="#b8b8b8"/><rect x="4" y="21" width="1" height="1" fill="#b8b8b8"/><rect x="4" y="24" width="1" height="1" fill="#b8b8b8"/></svg>
<div style="left:1096px;top:113px;width:40px;height:38px;background:#dcdcdc;border:1px solid #b4b4b4;border-radius:3px"></div>
<svg style="position:absolute;left:22px;top:118px;" width="28" height="28" viewBox="0 0 28 28"><path d="M2 11L12 6L17 24L6 27z" fill="#e07030"/><path d="M5 8L14 4L19 21L9 24z" fill="#f0c020" stroke="#c8a000" stroke-width="0.6"/><rect x="10" y="2" width="14" height="14" transform="rotate(8 17 9)" fill="#5a8ed0" stroke="#2f5f98"/><rect x="17" y="17" width="11" height="11" rx="1.5" fill="#4f9a4f" stroke="#3a7a3a" stroke-width="0.6"/><path d="M22.5 19v7M19 22.5h7" stroke="#fff" stroke-width="2.2"/></svg>
<svg style="position:absolute;left:63px;top:118px;" width="28" height="28" viewBox="0 0 28 28"><path d="M2 11L14 6L26 11V22L14 27L2 22z" fill="#f0c020" stroke="#333" stroke-width="1"/><path d="M2 11L14 16L26 11M14 16V27" fill="none" stroke="#333"/><path d="M14 16L26 11V22L14 27z" fill="#fde880"/><circle cx="14" cy="10" r="7" fill="#6a96c8" stroke="#2f5f98"/><path d="M10 8q2-2 4 0t4 2M11 12q3 1 5-1" stroke="#1a4a80" stroke-width="1.4" fill="none"/><rect x="17" y="17" width="11" height="11" rx="1.5" fill="#c9a100"/><g stroke="#fff" stroke-width="1.3"><path d="M22.5 19v7M19 22.5h7M19.8 19.8l5.4 5.4M25.2 19.8l-5.4 5.4"/></g><circle cx="22.5" cy="22.5" r="1.8" fill="#c9a100" stroke="#fff"/></svg>
<svg style="position:absolute;left:105px;top:118px;" width="28" height="28" viewBox="0 0 28 28"><path d="M4 5L11 22L18 5L24 5" fill="none" stroke="#2a3a4a" stroke-width="1.6"/><circle cx="4" cy="5" r="2" fill="#fff" stroke="#2a3a4a" stroke-width="1.3"/><circle cx="11" cy="22" r="2" fill="#fff" stroke="#2a3a4a" stroke-width="1.3"/><circle cx="18" cy="5" r="2" fill="#fff" stroke="#2a3a4a" stroke-width="1.3"/><circle cx="24" cy="5" r="2" fill="#fff" stroke="#2a3a4a" stroke-width="1.3"/><rect x="17" y="17" width="11" height="11" rx="1.5" fill="#c9a100"/><g stroke="#fff" stroke-width="1.3"><path d="M22.5 19v7M19 22.5h7M19.8 19.8l5.4 5.4M25.2 19.8l-5.4 5.4"/></g><circle cx="22.5" cy="22.5" r="1.8" fill="#c9a100" stroke="#fff"/></svg>
<svg style="position:absolute;left:146px;top:118px;" width="28" height="28" viewBox="0 0 28 28"><path d="M3 27Q8 12 24 2Q22 14 12 20Q8 22 3 27z" fill="#a8c4e8" stroke="#5a8ed0" stroke-width="1.1"/><path d="M3 27L20 8" stroke="#5a8ed0" stroke-width="0.8"/><path d="M10 16l6 1M8 19l6 0M13 12l5 1" stroke="#5a8ed0" stroke-width="0.6"/><rect x="17" y="17" width="11" height="11" rx="1.5" fill="#c9a100"/><g stroke="#fff" stroke-width="1.3"><path d="M22.5 19v7M19 22.5h7M19.8 19.8l5.4 5.4M25.2 19.8l-5.4 5.4"/></g><circle cx="22.5" cy="22.5" r="1.8" fill="#c9a100" stroke="#fff"/></svg>
<svg style="position:absolute;left:188px;top:118px;" width="28" height="28" viewBox="0 0 28 28"><rect x="3" y="8" width="20" height="12" rx="1.5" fill="#6a96c8" stroke="#2f5f98"/><path d="M6 3v5M6 20v5" stroke="#2f5f98" stroke-width="1.3"/><path d="M10 3v5M10 20v5" stroke="#2f5f98" stroke-width="1.3"/><path d="M14 3v5M14 20v5" stroke="#2f5f98" stroke-width="1.3"/><path d="M18 3v5M18 20v5" stroke="#2f5f98" stroke-width="1.3"/><path d="M22 3v5M22 20v5" stroke="#2f5f98" stroke-width="1.3"/><rect x="17" y="17" width="11" height="11" rx="1.5" fill="#c9a100"/><g stroke="#fff" stroke-width="1.3"><path d="M22.5 19v7M19 22.5h7M19.8 19.8l5.4 5.4M25.2 19.8l-5.4 5.4"/></g><circle cx="22.5" cy="22.5" r="1.8" fill="#c9a100" stroke="#fff"/></svg>
<svg style="position:absolute;left:229px;top:118px;" width="28" height="28" viewBox="0 0 28 28"><rect x="2" y="2" width="24" height="24" fill="#6a96c8" stroke="#2f5f98"/><path d="M2 2L14 14M14 2L2 14M14 2V26M2 14H26M26 2L14 14M2 20H14M8 14V26" stroke="#1f3f70" stroke-width="1.1"/><path d="M15 13L25 3V13z" fill="#a8c4e8"/><rect x="17" y="17" width="11" height="11" rx="1.5" fill="#c9a100"/><g stroke="#fff" stroke-width="1.3"><path d="M22.5 19v7M19 22.5h7M19.8 19.8l5.4 5.4M25.2 19.8l-5.4 5.4"/></g><circle cx="22.5" cy="22.5" r="1.8" fill="#c9a100" stroke="#fff"/></svg>
<svg style="position:absolute;left:270px;top:118px;" width="28" height="28" viewBox="0 0 28 28"><rect x="2" y="2" width="24" height="24" rx="2" fill="#a8c4e8" stroke="#2f5f98"/><path d="M4 5L11 22L18 5L24 5" fill="none" stroke="#2f4f78" stroke-width="1.6"/><circle cx="4" cy="5" r="2" fill="#fff" stroke="#2f4f78" stroke-width="1.3"/><circle cx="11" cy="22" r="2" fill="#fff" stroke="#2f4f78" stroke-width="1.3"/><circle cx="18" cy="5" r="2" fill="#fff" stroke="#2f4f78" stroke-width="1.3"/><circle cx="24" cy="5" r="2" fill="#fff" stroke="#2f4f78" stroke-width="1.3"/><rect x="17" y="17" width="11" height="11" rx="1.5" fill="#c9a100"/><g stroke="#fff" stroke-width="1.3"><path d="M22.5 19v7M19 22.5h7M19.8 19.8l5.4 5.4M25.2 19.8l-5.4 5.4"/></g><circle cx="22.5" cy="22.5" r="1.8" fill="#c9a100" stroke="#fff"/></svg>
<svg style="position:absolute;left:331px;top:118px;" width="28" height="28" viewBox="0 0 28 28"><path d="M4 22L10 4l4 1-6 18z M9 24L15 6l4 1-6 18z" fill="#e0e0e0" stroke="#d0d0d0"/></svg>
<svg style="position:absolute;left:371px;top:118px;" width="28" height="28" viewBox="0 0 28 28"><path d="M6 26L8 19L19 3L23 6L12 22z" fill="#f0d820" stroke="#444" stroke-width="1"/><path d="M6 26L8 19L12 22z" fill="#999" stroke="#444" stroke-width="0.8"/><path d="M19 3L23 6L24 4.5L20.5 2z" fill="#ddd" stroke="#444" stroke-width="0.8"/></svg>
<svg style="position:absolute;left:413px;top:118px;" width="28" height="28" viewBox="0 0 28 28"><rect x="1.5" y="1.5" width="25" height="25" rx="3" fill="#e4e4e4" stroke="#c4c4c4"/><rect x="6" y="2" width="16" height="10" fill="#f4f4f4"/><path d="M8 5h12M8 7.5h12M8 10h12" stroke="#888" stroke-width="0.8"/><rect x="7" y="16" width="14" height="10" fill="#f0f0f0"/><rect x="9" y="18" width="3" height="6" fill="#c4c4c4"/><path d="M15 27L17 21L23 13L26 15L20 23z" fill="#e0ddd8" stroke="#ccc" stroke-width="0.8"/></svg>
<svg style="position:absolute;left:456px;top:118px;" width="28" height="28" viewBox="0 0 28 28"><path d="M6 23L22 6" stroke="#d8d8d8" stroke-width="1.5" stroke-dasharray="3 2"/><rect x="3" y="21" width="4" height="4" fill="#eee" stroke="#d4d4d4"/><rect x="21" y="3" width="4" height="4" fill="#eee" stroke="#d4d4d4"/></svg>
<svg style="position:absolute;left:511px;top:118px;" width="28" height="28" viewBox="0 0 28 28"><path d="M3 8Q3 2 10 3T20 4T26 9T22 17T12 15T3 8z" fill="#e4e6e2" stroke="#cfd2cc"/><rect x="16" y="16" width="11" height="11" rx="1.5" fill="#d8d6cc"/><g stroke="#fff" stroke-width="1.3"><path d="M21.5 18v7M18 21.5h7M18.8 18.8l5.4 5.4M24.2 18.8l-5.4 5.4"/></g><circle cx="21.5" cy="21.5" r="1.8" fill="#d8d6cc" stroke="#fff"/></svg>
<svg style="position:absolute;left:556px;top:118px;" width="28" height="28" viewBox="0 0 28 28"><path d="M4 26L8 6M8 6H21" stroke="#d0d0d0" stroke-width="1.2"/><rect x="5" y="3" width="6" height="6" fill="#eee" stroke="#c8c8c8"/><path d="M12 14L24 25M24 14L13 25" stroke="#d8d4c8" stroke-width="3.5"/></svg>
<svg style="position:absolute;left:608px;top:118px;" width="28" height="28" viewBox="0 0 28 28"><rect x="2" y="4" width="22" height="6" fill="#e6e4de" stroke="#d8d6d0"/><rect x="2" y="12" width="22" height="6" fill="#e6e4de" stroke="#d8d6d0"/><rect x="2" y="20" width="22" height="6" fill="#e6e4de" stroke="#d8d6d0"/><path d="M10 27L12 20L22 4L26 6L16 23z" fill="#eceae6" stroke="#d0d0d0"/></svg>
<svg style="position:absolute;left:648px;top:118px;" width="28" height="28" viewBox="0 0 28 28"><rect x="4" y="6" width="20" height="3" fill="#e8d8d8" stroke="#ddc8c8"/><path d="M6 10h16l-1.5 16h-13z" fill="#efe0e0" stroke="#dcc8c8"/><path d="M10 12v12M14 12v12M18 12v12" stroke="#dcc8c8"/></svg>
<svg style="position:absolute;left:690px;top:118px;" width="28" height="28" viewBox="0 0 28 28"><circle cx="6" cy="20" r="3.5" fill="none" stroke="#d8d8d8" stroke-width="1.5"/><circle cx="22" cy="20" r="3.5" fill="none" stroke="#d8d8d8" stroke-width="1.5"/><path d="M8 18L22 8M20 18L6 8" stroke="#d4d4d4" stroke-width="1.5"/></svg>
<svg style="position:absolute;left:731px;top:118px;" width="28" height="28" viewBox="0 0 28 28"><path d="M3 7h10l3 3v16H3z" fill="#f2f2f2" stroke="#d6d6d6"/><path d="M10 2h10l3 3v16H10z" fill="#f4f4f4" stroke="#d6d6d6"/><path d="M13 9h7M13 12h7M13 15h7" stroke="#ddd"/></svg>
<svg style="position:absolute;left:773px;top:118px;" width="28" height="28" viewBox="0 0 28 28"><rect x="4" y="3" width="20" height="23" rx="1" fill="#ece6dc" stroke="#d8d0c4"/><rect x="7" y="7" width="14" height="17" fill="#f6f6f6" stroke="#ddd"/><rect x="10" y="1" width="8" height="4" fill="#e4e0d8"/></svg>
<svg style="position:absolute;left:814px;top:118px;" width="28" height="28" viewBox="0 0 28 28"><path d="M10 6L3 12L10 18V14Q19 13 21 22Q24 12 10 10z" fill="#eae4de" stroke="#ddd6ce"/></svg>
<svg style="position:absolute;left:855px;top:118px;" width="28" height="28" viewBox="0 0 28 28"><path d="M18 6L25 12L18 18V14Q9 13 7 22Q4 12 18 10z" fill="#eae4de" stroke="#ddd6ce"/></svg>
<svg style="position:absolute;left:916px;top:118px;" width="28" height="28" viewBox="0 0 28 28"><path d="M4 9L10 5L15 7L20 6L25 12L20 18L17 24L12 26L9 20L5 16z" fill="#2a9a2a" stroke="#1a6a1a" stroke-width="0.6"/><path d="M14 8L22 14L14 20L6 14z" fill="#f8e020"/><circle cx="14" cy="14" r="4" fill="#2a3a8a"/></svg>
<svg style="position:absolute;left:958px;top:118px;" width="28" height="28" viewBox="0 0 28 28"><circle cx="13" cy="13" r="11.5" fill="#a8c8ec" stroke="#5a8ed0" stroke-width="1"/><path d="M2 13h23M13 1.5v23M5 6q8 4 16 0M5 20q8-4 16 0M13 1.5q-7 11.5 0 23M13 1.5q7 11.5 0 23" stroke="#5a8ed0" stroke-width="0.8" fill="none"/><path d="M8 6q3 2 6 1t4 4q-3 3-6 1t-5-3z" fill="#4a6a9a" opacity="0.6"/><rect x="17" y="17" width="10" height="10" rx="1.5" fill="#4f9a4f" stroke="#3a7a3a" stroke-width="0.6"/><path d="M22.0 19v6M19 22.0h6" stroke="#fff" stroke-width="2.2"/></svg>
<svg style="position:absolute;left:1000px;top:118px;" width="28" height="28" viewBox="0 0 28 28"><circle cx="13" cy="13" r="11.5" fill="#a8c8ec" stroke="#5a8ed0" stroke-width="1"/><path d="M2 13h23M13 1.5v23M5 6q8 4 16 0M5 20q8-4 16 0M13 1.5q-7 11.5 0 23M13 1.5q7 11.5 0 23" stroke="#5a8ed0" stroke-width="0.8" fill="none"/><path d="M8 6q3 2 6 1t4 4q-3 3-6 1t-5-3z" fill="#4a6a9a" opacity="0.6"/><rect x="17" y="17" width="10" height="10" rx="1.5" fill="#4f9a4f"/><circle cx="21" cy="21" r="2.5" fill="none" stroke="#fff" stroke-width="1.3"/><path d="M23 23l2.5 2.5" stroke="#fff" stroke-width="1.5"/></svg>
<svg style="position:absolute;left:1042px;top:118px;" width="28" height="28" viewBox="0 0 28 28"><circle cx="13" cy="13" r="11.5" fill="#a8c8ec" stroke="#3a5a8a" stroke-width="1"/><path d="M2 13h23M13 1.5v23M5 6q8 4 16 0M5 20q8-4 16 0M13 1.5q-7 11.5 0 23M13 1.5q7 11.5 0 23" stroke="#3a5a8a" stroke-width="0.8" fill="none"/><path d="M8 6q3 2 6 1t4 4q-3 3-6 1t-5-3z" fill="#4a6a9a" opacity="0.6"/><circle cx="9" cy="22" r="4.5" fill="#111"/><circle cx="20" cy="22" r="4.5" fill="#111"/><rect x="8" y="16" width="13" height="5" fill="#111"/></svg>
<svg style="position:absolute;left:1102px;top:118px;" width="28" height="28" viewBox="0 0 28 28"><path d="M14 2q-7 0-7 4v3h7v1H5q-4 0-4 6t4 6h2v-4q0-4 4-4h7q3 0 3-3V6q0-4-7-4z" fill="#3a78b8"/><path d="M14 26q7 0 7-4v-3h-7v-1h9q4 0 4-6t-4-6h-2v4q0 4-4 4h-7q-3 0-3 3v5q0 4 7 4z" fill="#f8d030"/><circle cx="10.5" cy="5" r="1.2" fill="#fff"/><path d="M18 20l6 3-6 3" stroke="#555" stroke-width="1.2" fill="none"/></svg>
<svg style="position:absolute;left:1143px;top:118px;" width="28" height="28" viewBox="0 0 28 28"><circle cx="14" cy="15" r="10" fill="none" stroke="#111" stroke-width="1.8"/><path d="M14 1v6M14 23v4M1 15h6M21 15h6" stroke="#111" stroke-width="1.5"/><path d="M14 3l-3 8h6z" fill="#111"/></svg>
<svg style="position:absolute;left:1184px;top:118px;" width="28" height="28" viewBox="0 0 28 28"><path d="M14 4A11 11 0 1 0 25 18A9 9 0 0 1 14 4z" fill="#fff" stroke="#4f86c6" stroke-width="2.2"/><circle cx="19" cy="9" r="6" fill="#f8d030"/></svg>
<svg style="position:absolute;left:1226px;top:118px;" width="28" height="28" viewBox="0 0 28 28"><path d="M3 3v23h23" stroke="#666" stroke-width="1.3" fill="none"/><path d="M1 5l2-3 2 3M24 24l3 2-3 2" stroke="#666" fill="none"/><path d="M5 21q6-2 9-9t10-8" stroke="#d040c0" stroke-width="1.6" fill="none"/><path d="M5 23q8 0 10-6t9-5" stroke="#3aa0c8" stroke-width="1.6" fill="none"/></svg>
<svg style="position:absolute;left:1282px;top:118px;" width="28" height="28" viewBox="0 0 28 28"><circle cx="11" cy="11" r="8.5" fill="#1a9a5a" stroke="#111" stroke-width="3"/><path d="M7 15q3-4 4-8t5-2" stroke="#28c8f0" stroke-width="2.5" fill="none"/><path d="M17 17l8 8" stroke="#111" stroke-width="4" stroke-linecap="round"/></svg>
<svg style="position:absolute;left:1324px;top:118px;" width="28" height="28" viewBox="0 0 28 28"><path d="M5 25L19 9M23 25L9 9" stroke="#111" stroke-width="3" stroke-linecap="round"/><path d="M3 9l7-5 5 3-3 3z" fill="#111"/><circle cx="21" cy="7" r="5.5" fill="#2a9a5a" stroke="#111" stroke-width="1.5"/></svg>
<svg style="position:absolute;left:1365px;top:118px;" width="28" height="28" viewBox="0 0 28 28"><circle cx="11" cy="11" r="8.5" fill="#fff" stroke="#3aa048" stroke-width="2.5"/><path d="M17 17l8 8" stroke="#3aa048" stroke-width="3.5" stroke-linecap="round"/><path d="M8 13q3-6 6 0z M11 10v6" fill="#6ac070" stroke="#3aa048"/></svg>
<svg style="position:absolute;left:1406px;top:118px;" width="28" height="28" viewBox="0 0 28 28"><rect x="2" y="2" width="24" height="24" fill="#dceefc" stroke="#555"/><rect x="4" y="4" width="10" height="20" fill="#a8d4f4"/><rect x="14" y="4" width="10" height="20" fill="#d8e8a0"/><path d="M14 4v20" stroke="#fff" stroke-width="1.5"/><path d="M9 14l3-3v6zM19 14l-3-3v6z" fill="#333"/></svg>
<svg style="position:absolute;left:1447px;top:118px;" width="28" height="28" viewBox="0 0 28 28"><rect x="1" y="1" width="26" height="26" fill="#4a4a4a"/><path d="M3 20Q8 18 14 6Q18 16 26 18Q18 24 10 23z" fill="#d8b820"/><path d="M3 20Q9 22 14 12Q17 20 26 18" fill="#5a8a30" opacity="0.7"/></svg>
<svg style="position:absolute;left:1489px;top:118px;" width="28" height="28" viewBox="0 0 28 28"><path d="M3 9L9 4L15 6L21 5L26 12L21 18L17 25L12 27L9 20L4 16z" fill="#f0d060"/><path d="M3 9L9 4L14 7L12 13L5 14z" fill="#2aa04a"/><path d="M14 7L21 5L26 12L19 13z" fill="#e8806a"/><path d="M12 13L19 13L17 20L10 19z" fill="#7ac0d8"/><path d="M17 20L21 18L17 25L12 27z" fill="#f0a0c0"/></svg>
<svg style="position:absolute;left:1528px;top:118px;" width="28" height="28" viewBox="0 0 28 28"><rect x="4" y="9" width="12" height="16" rx="3" fill="#8ab0e0" stroke="#2a4a88" stroke-width="1.2"/><rect x="6" y="12" width="8" height="4" fill="#fde254" stroke="#333" stroke-width="0.7"/><rect x="6" y="18" width="8" height="3" fill="#ddd" stroke="#333" stroke-width="0.6"/><path d="M10 9V3" stroke="#2a4a88" stroke-width="1.5"/><rect x="20" y="4" width="4" height="22" fill="#a8b4e0" stroke="#2a4a88" stroke-width="0.8"/><path d="M17 8l3-3" stroke="#e07060" stroke-width="2"/></svg>
<svg style="position:absolute;left:1591px;top:118px;" width="28" height="28" viewBox="0 0 28 28"><rect x="3" y="2" width="22" height="24" fill="#6a96c8" stroke="#1a2a3a"/><rect x="3" y="2" width="5" height="24" fill="#1f2f3f"/><text x="12" y="19" font-family="Liberation Sans" font-size="13" fill="#fff">?</text></svg>
<svg style="position:absolute;left:1674px;top:118px;" width="28" height="28" viewBox="0 0 28 28"><circle cx="11" cy="11" r="7.5" fill="none" stroke="#c8d0d8" stroke-width="1.5"/><path d="M16.5 16.5L24 24" stroke="#c8d0d8" stroke-width="2.5"/></svg>
<svg style="position:absolute;left:1715px;top:118px;" width="28" height="28" viewBox="0 0 28 28"><path d="M3 5L10 3L18 6L25 4V23L18 25L10 22L3 24z M10 3V22M18 6V25" fill="none" stroke="#c8d0d8" stroke-width="1.5"/></svg>
<svg style="position:absolute;left:1756px;top:118px;" width="28" height="28" viewBox="0 0 28 28"><path d="M14 21Q7 13 7 9a7 7 0 0 1 14 0q0 4-7 12z" fill="none" stroke="#c8d0d8" stroke-width="1.5"/><path d="M14 6v4M14 12v1" stroke="#c8d0d8" stroke-width="1.5"/><path d="M4 22l10 5 10-5" fill="none" stroke="#c8d0d8" stroke-width="1.5"/></svg>
<svg style="position:absolute;left:1797px;top:118px;" width="28" height="28" viewBox="0 0 28 28"><path d="M7 14L14 7L21 14L14 21z M3 10L7 6L10 9L6 13z M18 25L22 21L25 24L21 28z" fill="none" stroke="#c8d0d8" stroke-width="1.5"/><path d="M20 26l2 3 1-2" stroke="#c8d0d8"/></svg>
<svg style="position:absolute;left:352px;top:140px;" width="12" height="8" viewBox="0 0 12 8"><path d="M1 1.5h10l-5 5z" fill="#aaa"/></svg>
<svg style="position:absolute;left:491px;top:128px;" width="12" height="8" viewBox="0 0 12 8"><path d="M1 1.5h10l-5 5z" fill="#999"/></svg>
<svg style="position:absolute;left:587px;top:128px;" width="12" height="8" viewBox="0 0 12 8"><path d="M1 1.5h10l-5 5z" fill="#999"/></svg>
<svg style="position:absolute;left:1261.7px;top:128px;" width="12" height="8" viewBox="0 0 12 8"><path d="M1 1.5h10l-5 5z" fill="#555"/></svg>
<svg style="position:absolute;left:1903px;top:126px;" width="14" height="12" viewBox="0 0 14 12"><path d="M2 2l4 4-4 4M7 2l4 4-4 4" stroke="#333" stroke-width="1.5" fill="none"/></svg>
<svg style="position:absolute;left:6px;top:175px;" width="5" height="27" viewBox="0 0 5 27"><rect x="0" y="0" width="1" height="1" fill="#b8b8b8"/><rect x="0" y="3" width="1" height="1" fill="#b8b8b8"/><rect x="0" y="6" width="1" height="1" fill="#b8b8b8"/><rect x="0" y="9" width="1" height="1" fill="#b8b8b8"/><rect x="0" y="12" width="1" height="1" fill="#b8b8b8"/><rect x="0" y="15" width="1" height="1" fill="#b8b8b8"/><rect x="0" y="18" width="1" height="1" fill="#b8b8b8"/><rect x="0" y="21" width="1" height="1" fill="#b8b8b8"/><rect x="0" y="24" width="1" height="1" fill="#b8b8b8"/><rect x="4" y="0" width="1" height="1" fill="#b8b8b8"/><rect x="4" y="3" width="1" height="1" fill="#b8b8b8"/><rect x="4" y="6" width="1" height="1" fill="#b8b8b8"/><rect x="4" y="9" width="1" height="1" fill="#b8b8b8"/><rect x="4" y="12" width="1" height="1" fill="#b8b8b8"/><rect x="4" y="15" width="1" height="1" fill="#b8b8b8"/><rect x="4" y="18" width="1" height="1" fill="#b8b8b8"/><rect x="4" y="21" width="1" height="1" fill="#b8b8b8"/><rect x="4" y="24" width="1" height="1" fill="#b8b8b8"/></svg>
<svg style="position:absolute;left:579px;top:175px;" width="5" height="27" viewBox="0 0 5 27"><rect x="0" y="0" width="1" height="1" fill="#b8b8b8"/><rect x="0" y="3" width="1" height="1" fill="#b8b8b8"/><rect x="0" y="6" width="1" height="1" fill="#b8b8b8"/><rect x="0" y="9" width="1" height="1" fill="#b8b8b8"/><rect x="0" y="12" width="1" height="1" fill="#b8b8b8"/><rect x="0" y="15" width="1" height="1" fill="#b8b8b8"/><rect x="0" y="18" width="1" height="1" fill="#b8b8b8"/><rect x="0" y="21" width="1" height="1" fill="#b8b8b8"/><rect x="0" y="24" width="1" height="1" fill="#b8b8b8"/><rect x="4" y="0" width="1" height="1" fill="#b8b8b8"/><rect x="4" y="3" width="1" height="1" fill="#b8b8b8"/><rect x="4" y="6" width="1" height="1" fill="#b8b8b8"/><rect x="4" y="9" width="1" height="1" fill="#b8b8b8"/><rect x="4" y="12" width="1" height="1" fill="#b8b8b8"/><rect x="4" y="15" width="1" height="1" fill="#b8b8b8"/><rect x="4" y="18" width="1" height="1" fill="#b8b8b8"/><rect x="4" y="21" width="1" height="1" fill="#b8b8b8"/><rect x="4" y="24" width="1" height="1" fill="#b8b8b8"/></svg>
<svg style="position:absolute;left:1093px;top:175px;" width="5" height="27" viewBox="0 0 5 27"><rect x="0" y="0" width="1" height="1" fill="#b8b8b8"/><rect x="0" y="3" width="1" height="1" fill="#b8b8b8"/><rect x="0" y="6" width="1" height="1" fill="#b8b8b8"/><rect x="0" y="9" width="1" height="1" fill="#b8b8b8"/><rect x="0" y="12" width="1" height="1" fill="#b8b8b8"/><rect x="0" y="15" width="1" height="1" fill="#b8b8b8"/><rect x="0" y="18" width="1" height="1" fill="#b8b8b8"/><rect x="0" y="21" width="1" height="1" fill="#b8b8b8"/><rect x="0" y="24" width="1" height="1" fill="#b8b8b8"/><rect x="4" y="0" width="1" height="1" fill="#b8b8b8"/><rect x="4" y="3" width="1" height="1" fill="#b8b8b8"/><rect x="4" y="6" width="1" height="1" fill="#b8b8b8"/><rect x="4" y="9" width="1" height="1" fill="#b8b8b8"/><rect x="4" y="12" width="1" height="1" fill="#b8b8b8"/><rect x="4" y="15" width="1" height="1" fill="#b8b8b8"/><rect x="4" y="18" width="1" height="1" fill="#b8b8b8"/><rect x="4" y="21" width="1" height="1" fill="#b8b8b8"/><rect x="4" y="24" width="1" height="1" fill="#b8b8b8"/></svg>
<svg style="position:absolute;left:1171px;top:175px;" width="5" height="27" viewBox="0 0 5 27"><rect x="0" y="0" width="1" height="1" fill="#b8b8b8"/><rect x="0" y="3" width="1" height="1" fill="#b8b8b8"/><rect x="0" y="6" width="1" height="1" fill="#b8b8b8"/><rect x="0" y="9" width="1" height="1" fill="#b8b8b8"/><rect x="0" y="12" width="1" height="1" fill="#b8b8b8"/><rect x="0" y="15" width="1" height="1" fill="#b8b8b8"/><rect x="0" y="18" width="1" height="1" fill="#b8b8b8"/><rect x="0" y="21" width="1" height="1" fill="#b8b8b8"/><rect x="0" y="24" width="1" height="1" fill="#b8b8b8"/><rect x="4" y="0" width="1" height="1" fill="#b8b8b8"/><rect x="4" y="3" width="1" height="1" fill="#b8b8b8"/><rect x="4" y="6" width="1" height="1" fill="#b8b8b8"/><rect x="4" y="9" width="1" height="1" fill="#b8b8b8"/><rect x="4" y="12" width="1" height="1" fill="#b8b8b8"/><rect x="4" y="15" width="1" height="1" fill="#b8b8b8"/><rect x="4" y="18" width="1" height="1" fill="#b8b8b8"/><rect x="4" y="21" width="1" height="1" fill="#b8b8b8"/><rect x="4" y="24" width="1" height="1" fill="#b8b8b8"/></svg>
<svg style="position:absolute;left:1233px;top:175px;" width="5" height="27" viewBox="0 0 5 27"><rect x="0" y="0" width="1" height="1" fill="#b8b8b8"/><rect x="0" y="3" width="1" height="1" fill="#b8b8b8"/><rect x="0" y="6" width="1" height="1" fill="#b8b8b8"/><rect x="0" y="9" width="1" height="1" fill="#b8b8b8"/><rect x="0" y="12" width="1" height="1" fill="#b8b8b8"/><rect x="0" y="15" width="1" height="1" fill="#b8b8b8"/><rect x="0" y="18" width="1" height="1" fill="#b8b8b8"/><rect x="0" y="21" width="1" height="1" fill="#b8b8b8"/><rect x="0" y="24" width="1" height="1" fill="#b8b8b8"/><rect x="4" y="0" width="1" height="1" fill="#b8b8b8"/><rect x="4" y="3" width="1" height="1" fill="#b8b8b8"/><rect x="4" y="6" width="1" height="1" fill="#b8b8b8"/><rect x="4" y="9" width="1" height="1" fill="#b8b8b8"/><rect x="4" y="12" width="1" height="1" fill="#b8b8b8"/><rect x="4" y="15" width="1" height="1" fill="#b8b8b8"/><rect x="4" y="18" width="1" height="1" fill="#b8b8b8"/><rect x="4" y="21" width="1" height="1" fill="#b8b8b8"/><rect x="4" y="24" width="1" height="1" fill="#b8b8b8"/></svg>
<svg style="position:absolute;left:1310px;top:175px;" width="5" height="27" viewBox="0 0 5 27"><rect x="0" y="0" width="1" height="1" fill="#b8b8b8"/><rect x="0" y="3" width="1" height="1" fill="#b8b8b8"/><rect x="0" y="6" width="1" height="1" fill="#b8b8b8"/><rect x="0" y="9" width="1" height="1" fill="#b8b8b8"/><rect x="0" y="12" width="1" height="1" fill="#b8b8b8"/><rect x="0" y="15" width="1" height="1" fill="#b8b8b8"/><rect x="0" y="18" width="1" height="1" fill="#b8b8b8"/><rect x="0" y="21" width="1" height="1" fill="#b8b8b8"/><rect x="0" y="24" width="1" height="1" fill="#b8b8b8"/><rect x="4" y="0" width="1" height="1" fill="#b8b8b8"/><rect x="4" y="3" width="1" height="1" fill="#b8b8b8"/><rect x="4" y="6" width="1" height="1" fill="#b8b8b8"/><rect x="4" y="9" width="1" height="1" fill="#b8b8b8"/><rect x="4" y="12" width="1" height="1" fill="#b8b8b8"/><rect x="4" y="15" width="1" height="1" fill="#b8b8b8"/><rect x="4" y="18" width="1" height="1" fill="#b8b8b8"/><rect x="4" y="21" width="1" height="1" fill="#b8b8b8"/><rect x="4" y="24" width="1" height="1" fill="#b8b8b8"/></svg>
<svg style="position:absolute;left:1374px;top:175px;" width="5" height="27" viewBox="0 0 5 27"><rect x="0" y="0" width="1" height="1" fill="#b8b8b8"/><rect x="0" y="3" width="1" height="1" fill="#b8b8b8"/><rect x="0" y="6" width="1" height="1" fill="#b8b8b8"/><rect x="0" y="9" width="1" height="1" fill="#b8b8b8"/><rect x="0" y="12" width="1" height="1" fill="#b8b8b8"/><rect x="0" y="15" width="1" height="1" fill="#b8b8b8"/><rect x="0" y="18" width="1" height="1" fill="#b8b8b8"/><rect x="0" y="21" width="1" height="1" fill="#b8b8b8"/><rect x="0" y="24" width="1" height="1" fill="#b8b8b8"/><rect x="4" y="0" width="1" height="1" fill="#b8b8b8"/><rect x="4" y="3" width="1" height="1" fill="#b8b8b8"/><rect x="4" y="6" width="1" height="1" fill="#b8b8b8"/><rect x="4" y="9" width="1" height="1" fill="#b8b8b8"/><rect x="4" y="12" width="1" height="1" fill="#b8b8b8"/><rect x="4" y="15" width="1" height="1" fill="#b8b8b8"/><rect x="4" y="18" width="1" height="1" fill="#b8b8b8"/><rect x="4" y="21" width="1" height="1" fill="#b8b8b8"/><rect x="4" y="24" width="1" height="1" fill="#b8b8b8"/></svg>
<div style="left:1512px;top:176px;width:1px;height:24px;background:#d0d0d0"></div>
<svg style="position:absolute;left:1568px;top:175px;" width="5" height="27" viewBox="0 0 5 27"><rect x="0" y="0" width="1" height="1" fill="#b8b8b8"/><rect x="0" y="3" width="1" height="1" fill="#b8b8b8"/><rect x="0" y="6" width="1" height="1" fill="#b8b8b8"/><rect x="0" y="9" width="1" height="1" fill="#b8b8b8"/><rect x="0" y="12" width="1" height="1" fill="#b8b8b8"/><rect x="0" y="15" width="1" height="1" fill="#b8b8b8"/><rect x="0" y="18" width="1" height="1" fill="#b8b8b8"/><rect x="0" y="21" width="1" height="1" fill="#b8b8b8"/><rect x="0" y="24" width="1" height="1" fill="#b8b8b8"/><rect x="4" y="0" width="1" height="1" fill="#b8b8b8"/><rect x="4" y="3" width="1" height="1" fill="#b8b8b8"/><rect x="4" y="6" width="1" height="1" fill="#b8b8b8"/><rect x="4" y="9" width="1" height="1" fill="#b8b8b8"/><rect x="4" y="12" width="1" height="1" fill="#b8b8b8"/><rect x="4" y="15" width="1" height="1" fill="#b8b8b8"/><rect x="4" y="18" width="1" height="1" fill="#b8b8b8"/><rect x="4" y="21" width="1" height="1" fill="#b8b8b8"/><rect x="4" y="24" width="1" height="1" fill="#b8b8b8"/></svg>
<svg style="position:absolute;left:1670px;top:175px;" width="5" height="27" viewBox="0 0 5 27"><rect x="0" y="0" width="1" height="1" fill="#b8b8b8"/><rect x="0" y="3" width="1" height="1" fill="#b8b8b8"/><rect x="0" y="6" width="1" height="1" fill="#b8b8b8"/><rect x="0" y="9" width="1" height="1" fill="#b8b8b8"/><rect x="0" y="12" width="1" height="1" fill="#b8b8b8"/><rect x="0" y="15" width="1" height="1" fill="#b8b8b8"/><rect x="0" y="18" width="1" height="1" fill="#b8b8b8"/><rect x="0" y="21" width="1" height="1" fill="#b8b8b8"/><rect x="0" y="24" width="1" height="1" fill="#b8b8b8"/><rect x="4" y="0" width="1" height="1" fill="#b8b8b8"/><rect x="4" y="3" width="1" height="1" fill="#b8b8b8"/><rect x="4" y="6" width="1" height="1" fill="#b8b8b8"/><rect x="4" y="9" width="1" height="1" fill="#b8b8b8"/><rect x="4" y="12" width="1" height="1" fill="#b8b8b8"/><rect x="4" y="15" width="1" height="1" fill="#b8b8b8"/><rect x="4" y="18" width="1" height="1" fill="#b8b8b8"/><rect x="4" y="21" width="1" height="1" fill="#b8b8b8"/><rect x="4" y="24" width="1" height="1" fill="#b8b8b8"/></svg>
<svg style="position:absolute;left:1732px;top:175px;" width="5" height="27" viewBox="0 0 5 27"><rect x="0" y="0" width="1" height="1" fill="#b8b8b8"/><rect x="0" y="3" width="1" height="1" fill="#b8b8b8"/><rect x="0" y="6" width="1" height="1" fill="#b8b8b8"/><rect x="0" y="9" width="1" height="1" fill="#b8b8b8"/><rect x="0" y="12" width="1" height="1" fill="#b8b8b8"/><rect x="0" y="15" width="1" height="1" fill="#b8b8b8"/><rect x="0" y="18" width="1" height="1" fill="#b8b8b8"/><rect x="0" y="21" width="1" height="1" fill="#b8b8b8"/><rect x="0" y="24" width="1" height="1" fill="#b8b8b8"/><rect x="4" y="0" width="1" height="1" fill="#b8b8b8"/><rect x="4" y="3" width="1" height="1" fill="#b8b8b8"/><rect x="4" y="6" width="1" height="1" fill="#b8b8b8"/><rect x="4" y="9" width="1" height="1" fill="#b8b8b8"/><rect x="4" y="12" width="1" height="1" fill="#b8b8b8"/><rect x="4" y="15" width="1" height="1" fill="#b8b8b8"/><rect x="4" y="18" width="1" height="1" fill="#b8b8b8"/><rect x="4" y="21" width="1" height="1" fill="#b8b8b8"/><rect x="4" y="24" width="1" height="1" fill="#b8b8b8"/></svg>
<svg style="position:absolute;left:1793px;top:175px;" width="5" height="27" viewBox="0 0 5 27"><rect x="0" y="0" width="1" height="1" fill="#b8b8b8"/><rect x="0" y="3" width="1" height="1" fill="#b8b8b8"/><rect x="0" y="6" width="1" height="1" fill="#b8b8b8"/><rect x="0" y="9" width="1" height="1" fill="#b8b8b8"/><rect x="0" y="12" width="1" height="1" fill="#b8b8b8"/><rect x="0" y="15" width="1" height="1" fill="#b8b8b8"/><rect x="0" y="18" width="1" height="1" fill="#b8b8b8"/><rect x="0" y="21" width="1" height="1" fill="#b8b8b8"/><rect x="0" y="24" width="1" height="1" fill="#b8b8b8"/><rect x="4" y="0" width="1" height="1" fill="#b8b8b8"/><rect x="4" y="3" width="1" height="1" fill="#b8b8b8"/><rect x="4" y="6" width="1" height="1" fill="#b8b8b8"/><rect x="4" y="9" width="1" height="1" fill="#b8b8b8"/><rect x="4" y="12" width="1" height="1" fill="#b8b8b8"/><rect x="4" y="15" width="1" height="1" fill="#b8b8b8"/><rect x="4" y="18" width="1" height="1" fill="#b8b8b8"/><rect x="4" y="21" width="1" height="1" fill="#b8b8b8"/><rect x="4" y="24" width="1" height="1" fill="#b8b8b8"/></svg>
<div style="left:1304px;top:162px;width:65px;height:53px;background:#efefef"></div>
<div style="left:100px;top:168px;width:38px;height:40px;background:#dcdcdc;border:1px solid #b4b4b4;border-radius:3px"></div>
<div style="left:100px;top:168px;width:38px;height:40px;background:#e2e2e2;border:1px solid #c8c8c8;border-radius:3px"></div>
<svg style="position:absolute;left:22px;top:174px;" width="28" height="28" viewBox="0 0 28 28"><path d="M5 12L12 19Q16 22 19 19T18 12L11 5L15 1L22 8Q29 16 22 23T7 22L1 16z" fill="#d01010" stroke="#900" stroke-width="0.6"/><path d="M1 16L5 12L8 15L4 19zM11 5L15 1L18 4L14 8z" fill="#fff" stroke="#900" stroke-width="0.6"/></svg>
<svg style="position:absolute;left:66px;top:174px;" width="28" height="28" viewBox="0 0 28 28"><path d="M5 4L11 22L17 8M17 8H23M11 14H23" stroke="#dcdcdc" stroke-width="1.4" fill="none"/><rect x="2.5" y="1.5" width="5" height="5" fill="#f2f2f2" stroke="#d6d6d6"/><rect x="8.5" y="19.5" width="5" height="5" fill="#f2f2f2" stroke="#d6d6d6"/><rect x="14.5" y="5.5" width="5" height="5" fill="#f2f2f2" stroke="#d6d6d6"/><rect x="20.5" y="5.5" width="5" height="5" fill="#f2f2f2" stroke="#d6d6d6"/><rect x="8.5" y="11.5" width="5" height="5" fill="#f2f2f2" stroke="#d6d6d6"/><rect x="20.5" y="11.5" width="5" height="5" fill="#f2f2f2" stroke="#d6d6d6"/><rect x="2.5" y="7.5" width="5" height="5" fill="#f2f2f2" stroke="#d6d6d6"/></svg>
<svg style="position:absolute;left:105px;top:174px;" width="28" height="28" viewBox="0 0 28 28"><rect x="7" y="6" width="4" height="4" fill="none" stroke="#c4c4c4"/><rect x="19" y="8" width="4" height="4" fill="none" stroke="#c4c4c4"/><rect x="14" y="20" width="4" height="4" fill="none" stroke="#c4c4c4"/></svg>
<svg style="position:absolute;left:356px;top:174px;" width="28" height="28" viewBox="0 0 28 28"><path d="M14 15L9 3M14 15L26 10M14 15V27" stroke="#5ab860" stroke-width="2"/><rect x="11" y="12" width="6" height="6" fill="#888" stroke="#555"/></svg>
<svg style="position:absolute;left:396px;top:174px;" width="28" height="28" viewBox="0 0 28 28"><path d="M14 4Q20 2 24 5T22 14Q18 16 16 12z" fill="#bbb" stroke="#444" stroke-width="1.2"/><path d="M3 8Q4 3 10 4T17 12T16 24T6 20T3 8z" fill="#8ed08a" stroke="#444" stroke-width="1.4"/><path d="M4 14q6 1 13-3" stroke="#333" stroke-dasharray="1.5 1" fill="none"/></svg>
<svg style="position:absolute;left:437px;top:174px;" width="28" height="28" viewBox="0 0 28 28"><path d="M3 3L25 25M25 3L3 25" stroke="#dadada" stroke-width="1.6"/><circle cx="14" cy="14" r="2.5" fill="#eee" stroke="#dadada"/></svg>
<svg style="position:absolute;left:480px;top:174px;" width="28" height="28" viewBox="0 0 28 28"><path d="M2 27L26 3" stroke="#e0e0e0" stroke-width="1.5"/><path d="M6 6L11 17L17 11L22 24L17 13L11 19z" fill="#dedcd0" stroke="#d8d6c8"/></svg>
<svg style="position:absolute;left:534px;top:174px;" width="28" height="28" viewBox="0 0 28 28"><path d="M5 7L11 21M11 21L4 25M5 7L22 15" stroke="#dadada" stroke-width="1.3"/><circle cx="5" cy="7" r="2.5" fill="#eee" stroke="#d8d8d8"/><circle cx="11" cy="21" r="2.5" fill="#eee" stroke="#d8d8d8"/><path d="M15 2L19 1L25 15L21 16z" fill="#eaeaea" stroke="#ddd"/></svg>
<svg style="position:absolute;left:597px;top:174px;" width="28" height="28" viewBox="0 0 28 28"><circle cx="14" cy="14" r="10.5" fill="none" stroke="#000" stroke-width="6.5"/></svg>
<svg style="position:absolute;left:654px;top:174px;" width="28" height="28" viewBox="0 0 28 28"><circle cx="14" cy="14" r="12" fill="none" stroke="#000" stroke-width="2.2"/><circle cx="14" cy="14" r="6" fill="none" stroke="#000" stroke-width="2"/><path d="M1 14h26M14 1v26" stroke="#000" stroke-width="2"/></svg>
<svg style="position:absolute;left:710px;top:174px;" width="28" height="28" viewBox="0 0 28 28"><path d="M4 25Q5 8 20 4" stroke="#2f6ab0" stroke-width="2" fill="none"/><circle cx="4" cy="24" r="3" fill="#3a80c8" stroke="#1a4a88" stroke-width="0.6"/><circle cx="22" cy="4" r="3" fill="#3a80c8" stroke="#1a4a88" stroke-width="0.6"/><text x="10" y="20" font-family="Liberation Sans" font-weight="bold" font-size="9.5" fill="#111">XY</text></svg>
<svg style="position:absolute;left:751px;top:174px;" width="28" height="28" viewBox="0 0 28 28"><path d="M4 25Q9 10 22 4" stroke="#2f6ab0" stroke-width="2" fill="none"/><circle cx="4" cy="24" r="3" fill="#3a80c8" stroke="#1a4a88" stroke-width="0.6"/><circle cx="22" cy="4" r="3" fill="#3a80c8" stroke="#1a4a88" stroke-width="0.6"/><circle cx="8" cy="15" r="2.5" fill="#e83030" stroke="#900" stroke-width="0.5"/><circle cx="15" cy="8" r="2.5" fill="#e83030" stroke="#900" stroke-width="0.5"/></svg>
<svg style="position:absolute;left:792px;top:174px;" width="28" height="28" viewBox="0 0 28 28"><path d="M4 25Q9 10 22 4" stroke="#2f6ab0" stroke-width="2" fill="none"/><circle cx="4" cy="24" r="3" fill="#3a80c8"/><circle cx="22" cy="4" r="3" fill="#3a80c8"/><path d="M2 12h18M8 5l4 17" stroke="#d01010" stroke-width="2"/></svg>
<svg style="position:absolute;left:848px;top:174px;" width="28" height="28" viewBox="0 0 28 28"><path d="M2 17H14M14 17L23 13M23 13H27L23 4" stroke="#111" stroke-width="2.2" fill="none"/><path d="M2 17L6 24" stroke="#2f6ab0" stroke-width="1.5"/><path d="M12 20l3-6M16 19l3-6" stroke="#a01010" stroke-width="2"/><circle cx="7" cy="24" r="3" fill="#3a80c8"/><circle cx="22" cy="4" r="3" fill="#3a80c8"/></svg>
<svg style="position:absolute;left:890px;top:174px;" width="28" height="28" viewBox="0 0 28 28"><path d="M2 8Q14 5 26 8M2 5v6M26 5v6" stroke="#3a5a88" stroke-width="1.6" fill="none"/><path d="M2 15Q14 12 26 15V24Q14 21 2 24z" fill="#d0d0d0" stroke="#777"/><path d="M6 14v3M10 13.5v3M14 13v4M18 13.5v3M22 14v3" stroke="#777"/></svg>
<svg style="position:absolute;left:931px;top:174px;" width="28" height="28" viewBox="0 0 28 28"><text x="3" y="11" font-family="Liberation Sans" font-weight="bold" font-size="10.5" fill="#111">123</text><path d="M4 22Q14 16 24 22" stroke="#2f6ab0" stroke-width="2" fill="none"/><circle cx="4" cy="22" r="3" fill="#3a80c8"/><circle cx="24" cy="22" r="3" fill="#3a80c8"/></svg>
<svg style="position:absolute;left:979px;top:174px;" width="28" height="28" viewBox="0 0 28 28"><path d="M2 8Q2 2 10 3T22 3T24 12T16 14T8 14T2 8z" fill="#2f70c0" stroke="#111" stroke-width="1.2"/><path d="M10 15Q16 13 20 18T18 26T10 22z" fill="#e02020" stroke="#111" stroke-width="1.2"/></svg>
<svg style="position:absolute;left:1030px;top:174px;" width="28" height="28" viewBox="0 0 28 28"><text x="1" y="11" font-family="Liberation Sans" font-weight="bold" font-size="9" fill="#dadada">Az</text><text x="1" y="23" font-family="Liberation Sans" font-weight="bold" font-size="9" fill="#dadada">d</text><path d="M10 26L22 10" stroke="#ddd" stroke-width="1.3"/><circle cx="22" cy="9" r="2.5" fill="#eee" stroke="#ddd"/><rect x="17" y="17" width="10" height="10" rx="1.5" fill="#dcdcdc"/><g stroke="#fff" stroke-width="1.3"><path d="M22.0 19v6M19 22.0h6M19.8 19.8l4.4 4.4M24.2 19.8l-4.4 4.4"/></g><circle cx="22.0" cy="22.0" r="1.8" fill="#dcdcdc" stroke="#fff"/></svg>
<svg style="position:absolute;left:1109px;top:174px;" width="28" height="28" viewBox="0 0 28 28"><path d="M1 14L6 6H27V22H6z" fill="#f8d848" stroke="#b09000" stroke-width="0.8"/><text x="7" y="18" font-family="Liberation Sans" font-weight="bold" font-size="10" fill="#333">abc</text></svg>
<svg style="position:absolute;left:1248px;top:174px;" width="28" height="28" viewBox="0 0 28 28"><rect x="1" y="1" width="26" height="26" fill="#4aa84a"/><circle cx="15" cy="12" r="7.5" fill="none" stroke="#fff" stroke-width="2"/><path d="M10 17L3 24" stroke="#fff" stroke-width="3"/></svg>
<svg style="position:absolute;left:1327px;top:174px;" width="28" height="28" viewBox="0 0 28 28"><path d="M3 9L9 4L15 6L21 5L26 12L21 18L17 25L12 27L9 20L4 16z" fill="#f0d060"/><path d="M3 9L9 4L14 7L12 13L5 14z" fill="#2aa04a"/><path d="M14 7L21 5L26 12L19 13z" fill="#e8806a"/><path d="M12 13L19 13L17 20L10 19z" fill="#7ac0d8"/><path d="M17 20L21 18L17 25L12 27z" fill="#f0a0c0"/></svg>
<svg style="position:absolute;left:1391px;top:174px;" width="28" height="28" viewBox="0 0 28 28"><circle cx="14" cy="14" r="12" fill="#2a90e0"/><path d="M5 14Q14 6 23 14Q14 22 5 14z" fill="#fff"/><circle cx="14" cy="14" r="3.5" fill="#222"/></svg>
<svg style="position:absolute;left:1432px;top:174px;" width="28" height="28" viewBox="0 0 28 28"><rect x="2" y="2" width="11" height="11" rx="1" fill="#27a55a" stroke="#1a8a48" stroke-width="0.6"/><rect x="15" y="2" width="11" height="11" rx="1" fill="#33cc72"/><rect x="2" y="15" width="11" height="11" rx="1" fill="#33cc72"/><rect x="15" y="15" width="11" height="11" rx="1" fill="#27a55a" stroke="#1a8a48" stroke-width="0.6"/></svg>
<svg style="position:absolute;left:1473px;top:174px;" width="28" height="28" viewBox="0 0 28 28"><polygon points="27.5,14.0 27.0,17.5 23.1,19.2 23.5,23.5 20.8,25.7 16.7,24.1 14.0,27.5 10.5,27.0 8.8,23.1 4.5,23.5 2.3,20.8 3.9,16.7 0.5,14.0 1.0,10.5 4.9,8.8 4.5,4.5 7.2,2.3 11.3,3.9 14.0,0.5 17.5,1.0 19.2,4.9 23.5,4.5 25.7,7.2 24.1,11.3" fill="#1f5a9a"/><circle cx="14" cy="14" r="9" fill="#f2e6d2"/><path d="M10 18l5 3 2-2z" fill="#e8a060"/><text x="4" y="16" font-family="Liberation Sans" font-size="6.5" fill="#333">sorriso</text></svg>
<svg style="position:absolute;left:1524px;top:174px;" width="28" height="28" viewBox="0 0 28 28"><rect x="3" y="7" width="22" height="15" rx="3" fill="#fff" stroke="#666" stroke-width="1.8"/><rect x="6" y="11" width="4" height="7" fill="#4ab84a"/><rect x="12" y="11" width="4" height="7" fill="#4ab84a"/><rect x="18" y="11" width="4" height="7" fill="#4ab84a"/><path d="M9 4v3M14 4v3M19 4v3M9 22v3M14 22v3M19 22v3" stroke="#555" stroke-width="1.5"/></svg>
<svg style="position:absolute;left:1584px;top:174px;" width="28" height="28" viewBox="0 0 28 28"><rect x="3" y="1" width="22" height="26" rx="2" fill="#d89a6a" stroke="#a06a40"/><circle cx="8" cy="5" r="1.8" fill="#111"/><path d="M12 5h10" stroke="#111" stroke-width="1.4"/><circle cx="8" cy="10" r="1.8" fill="#111"/><path d="M12 10h10" stroke="#111" stroke-width="1.4"/><circle cx="8" cy="15" r="1.8" fill="#111"/><path d="M12 15h10" stroke="#111" stroke-width="1.4"/><circle cx="8" cy="20" r="1.8" fill="#111"/><path d="M12 20h10" stroke="#111" stroke-width="1.4"/><path d="M13 20v6l5-3z" fill="#2a6a2a"/></svg>
<svg style="position:absolute;left:1626px;top:174px;" width="28" height="28" viewBox="0 0 28 28"><circle cx="14" cy="14" r="4.5" fill="#2f6ab0" stroke="#a8c8f0" stroke-width="1.5"/><path d="M21.0 14.0L25.0 14.0" stroke="#5a8ed0" stroke-width="1.8"/><path d="M19.0 18.9L21.8 21.8" stroke="#5a8ed0" stroke-width="1.8"/><path d="M14.0 21.0L14.0 25.0" stroke="#5a8ed0" stroke-width="1.8"/><path d="M9.1 19.0L6.2 21.8" stroke="#5a8ed0" stroke-width="1.8"/><path d="M7.0 14.0L3.0 14.0" stroke="#5a8ed0" stroke-width="1.8"/><path d="M9.0 9.1L6.2 6.2" stroke="#5a8ed0" stroke-width="1.8"/><path d="M14.0 7.0L14.0 3.0" stroke="#5a8ed0" stroke-width="1.8"/><path d="M18.9 9.0L21.8 6.2" stroke="#5a8ed0" stroke-width="1.8"/></svg>
<svg style="position:absolute;left:1687px;top:174px;" width="28" height="28" viewBox="0 0 28 28"><circle cx="14" cy="12" r="10" fill="none" stroke="#f0a020" stroke-width="3"/><text x="5" y="25" font-family="Liberation Sans" font-weight="bold" font-size="17" fill="#1a8a1a">Q</text></svg>
<svg style="position:absolute;left:1748px;top:174px;" width="28" height="28" viewBox="0 0 28 28"><rect x="4" y="2" width="20" height="26" fill="#fff"/><path d="M12 3Q20 1 21 8T20 20T12 26z" fill="#f0e060"/><path d="M13 3Q19 2 20 8L13 9z" fill="#e04030"/><path d="M14 16q6 0 6 6q-3 3-6 2z" fill="#70c040"/><circle cx="6" cy="6" r="2" fill="#c02020"/><path d="M8 6h5" stroke="#555" stroke-width="0.8"/><circle cx="6" cy="14" r="2" fill="#d0a020"/><path d="M8 14h5" stroke="#555" stroke-width="0.8"/><circle cx="6" cy="22" r="2" fill="#208020"/><path d="M8 22h5" stroke="#555" stroke-width="0.8"/></svg>
<svg style="position:absolute;left:1810px;top:174px;" width="28" height="28" viewBox="0 0 28 28"><circle cx="14" cy="14" r="12" fill="#2a7ad0" stroke="#f0b020" stroke-width="1.5"/><circle cx="14" cy="14" r="8" fill="#3aa04a"/><path d="M11 9v10l8-5z" fill="#fff"/></svg>
<svg style="position:absolute;left:84.7px;top:196px;" width="12" height="8" viewBox="0 0 12 8"><path d="M1 1.5h10l-5 5z" fill="#aaa"/></svg>
<svg style="position:absolute;left:126px;top:196px;" width="12" height="8" viewBox="0 0 12 8"><path d="M1 1.5h10l-5 5z" fill="#999"/></svg>
<svg style="position:absolute;left:417px;top:196px;" width="12" height="8" viewBox="0 0 12 8"><path d="M1 1.5h10l-5 5z" fill="#555"/></svg>
<svg style="position:absolute;left:514px;top:184px;" width="12" height="8" viewBox="0 0 12 8"><path d="M1 1.5h10l-5 5z" fill="#999"/></svg>
<svg style="position:absolute;left:631px;top:184px;" width="12" height="8" viewBox="0 0 12 8"><path d="M1 1.5h10l-5 5z" fill="#555"/></svg>
<svg style="position:absolute;left:689px;top:184px;" width="12" height="8" viewBox="0 0 12 8"><path d="M1 1.5h10l-5 5z" fill="#555"/></svg>
<svg style="position:absolute;left:827px;top:184px;" width="12" height="8" viewBox="0 0 12 8"><path d="M1 1.5h10l-5 5z" fill="#555"/></svg>
<svg style="position:absolute;left:1007px;top:184px;" width="12" height="8" viewBox="0 0 12 8"><path d="M1 1.5h10l-5 5z" fill="#555"/></svg>
<svg style="position:absolute;left:1070px;top:182px;" width="14" height="12" viewBox="0 0 14 12"><path d="M2 2l4 4-4 4M7 2l4 4-4 4" stroke="#333" stroke-width="1.5" fill="none"/></svg>
<svg style="position:absolute;left:1148px;top:182px;" width="14" height="12" viewBox="0 0 14 12"><path d="M2 2l4 4-4 4M7 2l4 4-4 4" stroke="#333" stroke-width="1.5" fill="none"/></svg>
<svg style="position:absolute;left:1286px;top:182px;" width="14" height="12" viewBox="0 0 14 12"><path d="M2 2l4 4-4 4M7 2l4 4-4 4" stroke="#333" stroke-width="1.5" fill="none"/></svg>
<div style="left:141px;top:176px;width:99px;height:25px;background:#f0f0f0;border:1px solid #c4c4c4;border-radius:3px"></div>
<div style="left:222px;top:177px;width:1px;height:23px;background:#d0d0d0"></div>
<svg style="position:absolute;left:224px;top:178px;" width="15" height="21" viewBox="0 0 15 21"><path d="M3 8l4.5-5 4.5 5z M3 13l4.5 5 4.5-5z" fill="#888"/></svg>
<div class="t" style="left:148px;top:181.68px;font-size:14.5px;line-height:14.5px;color:#555;font-weight:normal;font-family:'Liberation Sans',sans-serif;">12</div>
<div style="left:244px;top:176px;width:103px;height:25px;background:#f4f4f4;border:1px solid #c4c4c4;border-radius:3px"></div>
<div class="t" style="left:249px;top:181.68px;font-size:14.5px;line-height:14.5px;color:#555;font-weight:normal;font-family:'Liberation Sans',sans-serif;">px</div>
<svg style="position:absolute;left:326px;top:185px;" width="12" height="8" viewBox="0 0 12 8"><path d="M1 1.5h10l-5 5z" fill="#888"/></svg>
<div style="left:0px;top:215px;width:63px;height:770px;background:linear-gradient(90deg,#f7f7f7,#f0f0f0)"></div>
<div style="left:63px;top:215px;width:1px;height:770px;background:#d8d8d8"></div>
<svg style="position:absolute;left:25px;top:219px;" width="28" height="4" viewBox="0 0 28 4"><rect x="0" y="0" width="1" height="1" fill="#b8b8b8"/><rect x="0" y="3" width="1" height="1" fill="#b8b8b8"/><rect x="4" y="0" width="1" height="1" fill="#b8b8b8"/><rect x="4" y="3" width="1" height="1" fill="#b8b8b8"/><rect x="8" y="0" width="1" height="1" fill="#b8b8b8"/><rect x="8" y="3" width="1" height="1" fill="#b8b8b8"/><rect x="12" y="0" width="1" height="1" fill="#b8b8b8"/><rect x="12" y="3" width="1" height="1" fill="#b8b8b8"/><rect x="16" y="0" width="1" height="1" fill="#b8b8b8"/><rect x="16" y="3" width="1" height="1" fill="#b8b8b8"/><rect x="20" y="0" width="1" height="1" fill="#b8b8b8"/><rect x="20" y="3" width="1" height="1" fill="#b8b8b8"/><rect x="24" y="0" width="1" height="1" fill="#b8b8b8"/><rect x="24" y="3" width="1" height="1" fill="#b8b8b8"/></svg>
<svg style="position:absolute;left:9px;top:236px;" width="30" height="30" viewBox="0 0 28 28"><path d="M4 5L11 22L18 5L24 5" fill="none" stroke="#2a3a4a" stroke-width="1.6"/><circle cx="4" cy="5" r="2" fill="#fff" stroke="#2a3a4a" stroke-width="1.3"/><circle cx="11" cy="22" r="2" fill="#fff" stroke="#2a3a4a" stroke-width="1.3"/><circle cx="18" cy="5" r="2" fill="#fff" stroke="#2a3a4a" stroke-width="1.3"/><circle cx="24" cy="5" r="2" fill="#fff" stroke="#2a3a4a" stroke-width="1.3"/><rect x="18" y="18" width="10" height="10" rx="1.5" fill="#4f9a4f" stroke="#3a7a3a" stroke-width="0.6"/><path d="M23.0 20v6M20 23.0h6" stroke="#fff" stroke-width="2.2"/></svg>
<svg style="position:absolute;left:9px;top:274px;" width="30" height="30" viewBox="0 0 28 28"><rect x="2" y="2" width="21" height="21" fill="#6a96c8"/><rect x="2" y="2" width="7" height="7" fill="#1f3f68"/><rect x="2" y="16" width="7" height="7" fill="#1f3f68"/><rect x="9" y="9" width="7" height="7" fill="#1f3f68"/><rect x="16" y="2" width="7" height="7" fill="#1f3f68"/><rect x="16" y="16" width="7" height="7" fill="#1f3f68"/><rect x="18" y="18" width="10" height="10" rx="1.5" fill="#4f9a4f" stroke="#3a7a3a" stroke-width="0.6"/><path d="M23.0 20v6M20 23.0h6" stroke="#fff" stroke-width="2.2"/></svg>
<svg style="position:absolute;left:9px;top:316px;" width="30" height="30" viewBox="0 0 28 28"><rect x="2" y="2" width="24" height="24" fill="#6a96c8" stroke="#2f5f98"/><path d="M2 2L14 14M14 2L2 14M14 2V26M2 14H26M26 2L14 14M2 20H14M8 14V26" stroke="#1f3f70" stroke-width="1.1"/><path d="M15 13L25 3V13z" fill="#a8c4e8"/><rect x="18" y="18" width="10" height="10" rx="1.5" fill="#4f9a4f" stroke="#3a7a3a" stroke-width="0.6"/><path d="M23.0 20v6M20 23.0h6" stroke="#fff" stroke-width="2.2"/></svg>
<svg style="position:absolute;left:9px;top:356px;" width="30" height="30" viewBox="0 0 28 28"><path d="M12 3Q20 2 20 10Q19 20 8 24L7 22Q13 19 14 15Q8 16 7 10Q7 3 12 3z" fill="#4a78b0" stroke="#2f5f98" stroke-width="0.6"/><rect x="18" y="18" width="10" height="10" rx="1.5" fill="#4f9a4f" stroke="#3a7a3a" stroke-width="0.6"/><path d="M23.0 20v6M20 23.0h6" stroke="#fff" stroke-width="2.2"/></svg>
<svg style="position:absolute;left:9px;top:396px;" width="30" height="30" viewBox="0 0 28 28"><path d="M3 27Q8 12 24 2Q22 14 12 20Q8 22 3 27z" fill="#a8c4e8" stroke="#5a8ed0" stroke-width="1.1"/><path d="M3 27L20 8" stroke="#5a8ed0" stroke-width="0.8"/><path d="M10 16l6 1M8 19l6 0M13 12l5 1" stroke="#5a8ed0" stroke-width="0.6"/><rect x="18" y="18" width="10" height="10" rx="1.5" fill="#4f9a4f" stroke="#3a7a3a" stroke-width="0.6"/><path d="M23.0 20v6M20 23.0h6" stroke="#fff" stroke-width="2.2"/></svg>
<svg style="position:absolute;left:9px;top:436px;" width="30" height="30" viewBox="0 0 28 28"><rect x="2" y="2" width="24" height="24" rx="2" fill="#a8c4e8" stroke="#2f5f98"/><path d="M4 5L11 22L18 5L24 5" fill="none" stroke="#2f4f78" stroke-width="1.6"/><circle cx="4" cy="5" r="2" fill="#fff" stroke="#2f4f78" stroke-width="1.3"/><circle cx="11" cy="22" r="2" fill="#fff" stroke="#2f4f78" stroke-width="1.3"/><circle cx="18" cy="5" r="2" fill="#fff" stroke="#2f4f78" stroke-width="1.3"/><circle cx="24" cy="5" r="2" fill="#fff" stroke="#2f4f78" stroke-width="1.3"/><rect x="18" y="18" width="10" height="10" rx="1.5" fill="#4f9a4f" stroke="#3a7a3a" stroke-width="0.6"/><path d="M23.0 20v6M20 23.0h6" stroke="#fff" stroke-width="2.2"/></svg>
<svg style="position:absolute;left:9px;top:474px;" width="30" height="30" viewBox="0 0 28 28"><path d="M3 8Q3 2 10 2H18Q25 2 25 8Q25 14 21 15Q21 20 18 22V15Q14 14 13 10Q12 16 11 21Q8 18 8 13Q3 14 3 8z" fill="#6a96c8" stroke="#1f3f68" stroke-width="1.4"/><rect x="18" y="18" width="10" height="10" rx="1.5" fill="#4f9a4f" stroke="#3a7a3a" stroke-width="0.6"/><path d="M23.0 20v6M20 23.0h6" stroke="#fff" stroke-width="2.2"/></svg>
<svg style="position:absolute;left:9px;top:515px;" width="30" height="30" viewBox="0 0 28 28"><circle cx="13" cy="13" r="11.5" fill="#a8c8ec" stroke="#5a8ed0" stroke-width="1"/><path d="M2 13h23M13 1.5v23M5 6q8 4 16 0M5 20q8-4 16 0M13 1.5q-7 11.5 0 23M13 1.5q7 11.5 0 23" stroke="#5a8ed0" stroke-width="0.8" fill="none"/><path d="M8 6q3 2 6 1t4 4q-3 3-6 1t-5-3z" fill="#4a6a9a" opacity="0.6"/><rect x="18" y="18" width="10" height="10" rx="1.5" fill="#4f9a4f" stroke="#3a7a3a" stroke-width="0.6"/><path d="M23.0 20v6M20 23.0h6" stroke="#fff" stroke-width="2.2"/></svg>
<svg style="position:absolute;left:9px;top:556px;" width="30" height="30" viewBox="0 0 28 28"><circle cx="13" cy="13" r="11.5" fill="#7aa4d8" stroke="#1f3f68" stroke-width="2.2"/><path d="M2 9h22M2 17h22" stroke="#fff" stroke-width="2"/><ellipse cx="13" cy="13" rx="5" ry="11" fill="none" stroke="#fff" stroke-width="1.6"/><path d="M4 5h18v3H4zM3 18h20v3H3z" fill="#1f3f68" opacity="0.5"/><rect x="18" y="18" width="10" height="10" rx="1.5" fill="#4f9a4f" stroke="#3a7a3a" stroke-width="0.6"/><path d="M23.0 20v6M20 23.0h6" stroke="#fff" stroke-width="2.2"/></svg>
<svg style="position:absolute;left:9px;top:596px;" width="30" height="30" viewBox="0 0 28 28"><circle cx="13" cy="13" r="11.5" fill="#e8f0fa" stroke="#5a8ed0" stroke-width="1.3"/><path d="M2 9h22M2 13h22M2 17h22" stroke="#a8c4e8" stroke-width="1"/><path d="M5 7L12 21L18 8L23 8" fill="none" stroke="#333" stroke-width="1.6"/><circle cx="5" cy="7" r="2" fill="#fff" stroke="#333" stroke-width="1.3"/><circle cx="12" cy="21" r="2" fill="#fff" stroke="#333" stroke-width="1.3"/><circle cx="18" cy="8" r="2" fill="#fff" stroke="#333" stroke-width="1.3"/><circle cx="23" cy="8" r="2" fill="#fff" stroke="#333" stroke-width="1.3"/><rect x="18" y="18" width="10" height="10" rx="1.5" fill="#4f9a4f" stroke="#3a7a3a" stroke-width="0.6"/><path d="M23.0 20v6M20 23.0h6" stroke="#fff" stroke-width="2.2"/></svg>
<svg style="position:absolute;left:9px;top:636px;" width="30" height="30" viewBox="0 0 28 28"><rect x="3" y="8" width="20" height="12" rx="1.5" fill="#6a96c8" stroke="#2f5f98"/><path d="M6 3v5M6 20v5" stroke="#2f5f98" stroke-width="1.3"/><path d="M10 3v5M10 20v5" stroke="#2f5f98" stroke-width="1.3"/><path d="M14 3v5M14 20v5" stroke="#2f5f98" stroke-width="1.3"/><path d="M18 3v5M18 20v5" stroke="#2f5f98" stroke-width="1.3"/><path d="M22 3v5M22 20v5" stroke="#2f5f98" stroke-width="1.3"/><rect x="18" y="18" width="10" height="10" rx="1.5" fill="#c9a100"/><g stroke="#fff" stroke-width="1.3"><path d="M23.0 20v6M20 23.0h6M20.8 20.8l4.4 4.4M25.2 20.8l-4.4 4.4"/></g><circle cx="23.0" cy="23.0" r="1.8" fill="#c9a100" stroke="#fff"/></svg>
<svg style="position:absolute;left:46px;top:487px;" width="12" height="8" viewBox="0 0 12 8"><path d="M1 1.5h10l-5 5z" fill="#555"/></svg>
<svg style="position:absolute;left:46px;top:647px;" width="12" height="8" viewBox="0 0 12 8"><path d="M1 1.5h10l-5 5z" fill="#555"/></svg>
<div class="t" style="left:70.6px;top:222.52px;font-size:14.678px;line-height:14.678px;color:#000;font-weight:normal;font-family:'Liberation Sans',sans-serif;">Navegador</div>
<svg style="position:absolute;left:448px;top:222px;" width="32" height="14" viewBox="0 0 32 14"><rect x="0.5" y="0.5" width="13" height="13" rx="2" fill="#f4f4f4" stroke="#777"/><rect x="17.5" y="0.5" width="13" height="13" rx="2" fill="#f4f4f4" stroke="#777"/><path d="M3 6.5h5v5H3z M5.5 6.5V3.5h5v5h-2.5" fill="none" stroke="#555"/><path d="M20.5 3.5l7 7M27.5 3.5l-7 7" stroke="#444" stroke-width="2"/></svg>
<svg style="position:absolute;left:75px;top:250px;" width="20" height="20" viewBox="0 0 28 28"><rect x="3" y="3" width="17" height="17" fill="#f0f0f0" stroke="#888" stroke-width="1.6"/><rect x="16" y="16" width="10" height="10" rx="1.5" fill="#4f9a4f" stroke="#3a7a3a" stroke-width="0.6"/><path d="M21.0 18v6M18 21.0h6" stroke="#fff" stroke-width="2.2"/></svg>
<svg style="position:absolute;left:106px;top:250px;" width="20" height="20" viewBox="0 0 28 28"><path d="M4 13A10 10 0 0 1 22 8l3-3v9h-9l3-3A6 6 0 0 0 8 13z" fill="#4f92d8" stroke="#2f6ab0" stroke-width="0.6"/><path d="M24 15A10 10 0 0 1 6 20l-3 3v-9h9l-3 3A6 6 0 0 0 20 15z" fill="#4f92d8" stroke="#2f6ab0" stroke-width="0.6"/></svg>
<svg style="position:absolute;left:138px;top:250px;" width="20" height="20" viewBox="0 0 28 28"><path d="M3 4h22v3l-8 8v11l-6-4v-7L3 7z" fill="#6a96c8" stroke="#3a6aa0" stroke-width="0.8"/><rect x="4" y="4" width="20" height="3" fill="#fde254"/></svg>
<svg style="position:absolute;left:170px;top:250px;" width="20" height="20" viewBox="0 0 28 28"><path d="M5 3V24M5 7H23" stroke="#c8c8c8" stroke-width="1.5"/><rect x="7" y="10" width="4" height="4" fill="#f0a030"/><rect x="7" y="19" width="4" height="4" fill="#f0a030"/><path d="M16 24V12H12L18 4L24 12H20V24z" fill="#6a96c8" stroke="#2f4f78"/></svg>
<svg style="position:absolute;left:200px;top:250px;" width="20" height="20" viewBox="0 0 28 28"><circle cx="14" cy="14" r="11.5" fill="#6a96c8" stroke="#3a6aa0"/><text x="10.5" y="21" font-family="Liberation Serif" font-style="italic" font-weight="bold" font-size="16" fill="#fff">i</text></svg>
<div style="left:65px;top:279px;width:416px;height:288px;background:#fff;border:1px solid #a8a8a8"></div>
<svg style="position:absolute;left:91px;top:282.4px;" width="20" height="20" viewBox="0 0 28 28"><path d="M14 2L17.5 10.5L26.5 11L19.5 17L22 26L14 21L6 26L8.5 17L1.5 11L10.5 10.5z" fill="#fde254" stroke="#c8a000" stroke-width="1.2"/></svg>
<div class="t" style="left:117.8px;top:285.66px;font-size:14.4px;line-height:14.4px;color:#000;font-weight:normal;font-family:'Liberation Sans',sans-serif;">Favoritos</div>
<svg style="position:absolute;left:73px;top:309.34999999999997px;" width="6" height="10" viewBox="0 0 6 10"><path d="M0.5 1L5.5 5L0.5 9z" fill="#555"/></svg>
<svg style="position:absolute;left:91px;top:304.84999999999997px;" width="20" height="20" viewBox="0 0 28 28"><path d="M5 3h18v22H7q-3 0-3-3z" fill="#eee" stroke="#999"/><path d="M4 22q0-2 3-2V3" fill="none" stroke="#999"/><path d="M15 2h5v9l-2.5-2.5L15 11z" fill="#6a96c8"/></svg>
<div class="t" style="left:117.8px;top:308.45px;font-size:14.0px;line-height:14.0px;color:#000;font-weight:normal;font-family:'Liberation Sans',sans-serif;">Favoritos Espaciais</div>
<svg style="position:absolute;left:73px;top:331.79999999999995px;" width="6" height="10" viewBox="0 0 6 10"><path d="M0.5 1L5.5 5L0.5 9z" fill="#555"/></svg>
<svg style="position:absolute;left:91px;top:327.29999999999995px;" width="20" height="20" viewBox="0 0 28 28"><path d="M3 5h8l2 2h12v18H3z" fill="#efefef" stroke="#888" stroke-width="1.2"/><path d="M9 18v-5l5-4 5 4v5z" fill="#fff" stroke="#222" stroke-width="1.4"/></svg>
<div class="t" style="left:117.8px;top:330.56px;font-size:14.4px;line-height:14.4px;color:#000;font-weight:normal;font-family:'Liberation Sans',sans-serif;">Início</div>
<svg style="position:absolute;left:73px;top:354.25px;" width="6" height="10" viewBox="0 0 6 10"><path d="M0.5 1L5.5 5L0.5 9z" fill="#555"/></svg>
<svg style="position:absolute;left:91px;top:349.75px;" width="20" height="20" viewBox="0 0 28 28"><path d="M3 5h8l2 2h12v18H3z" fill="#efefef" stroke="#888" stroke-width="1.2"/></svg>
<div class="t" style="left:117.8px;top:353.01px;font-size:14.4px;line-height:14.4px;color:#000;font-weight:normal;font-family:'Liberation Sans',sans-serif;">C:\ (OS)</div>
<svg style="position:absolute;left:73px;top:376.7px;" width="6" height="10" viewBox="0 0 6 10"><path d="M0.5 1L5.5 5L0.5 9z" fill="#555"/></svg>
<svg style="position:absolute;left:91px;top:372.2px;" width="20" height="20" viewBox="0 0 28 28"><path d="M3 5h8l2 2h12v18H3z" fill="#efefef" stroke="#888" stroke-width="1.2"/></svg>
<div class="t" style="left:117.8px;top:375.46px;font-size:14.4px;line-height:14.4px;color:#000;font-weight:normal;font-family:'Liberation Sans',sans-serif;">G:\ (samuelsantosambiental@gmail.c...)</div>
<svg style="position:absolute;left:73px;top:399.15px;" width="6" height="10" viewBox="0 0 6 10"><path d="M0.5 1L5.5 5L0.5 9z" fill="#555"/></svg>
<svg style="position:absolute;left:91px;top:394.65px;" width="20" height="20" viewBox="0 0 28 28"><path d="M3 5h8l2 2h12v18H3z" fill="#efefef" stroke="#888" stroke-width="1.2"/></svg>
<div class="t" style="left:117.8px;top:397.91px;font-size:14.4px;line-height:14.4px;color:#000;font-weight:normal;font-family:'Liberation Sans',sans-serif;">H:\ (samuelsantos.semas@gmail.com ...)</div>
<svg style="position:absolute;left:73px;top:421.59999999999997px;" width="6" height="10" viewBox="0 0 6 10"><path d="M0.5 1L5.5 5L0.5 9z" fill="#555"/></svg>
<svg style="position:absolute;left:91px;top:417.09999999999997px;" width="20" height="20" viewBox="0 0 28 28"><path d="M3 5h8l2 2h12v18H3z" fill="#efefef" stroke="#888" stroke-width="1.2"/></svg>
<div class="t" style="left:117.8px;top:420.36px;font-size:14.4px;line-height:14.4px;color:#000;font-weight:normal;font-family:'Liberation Sans',sans-serif;">I:\ (samuel.santos@sertanai.com - ...)</div>
<svg style="position:absolute;left:91px;top:439.54999999999995px;" width="20" height="20" viewBox="0 0 28 28"><path d="M2 11L14 6L26 11V22L14 27L2 22z" fill="#f0c020" stroke="#333" stroke-width="1"/><path d="M14 16L26 11V22L14 27z" fill="#fde880"/><path d="M2 11L14 16L26 11M14 16V27" fill="none" stroke="#333"/><circle cx="14" cy="10" r="7" fill="#6a96c8" stroke="#2f5f98"/></svg>
<div class="t" style="left:117.8px;top:442.81px;font-size:14.4px;line-height:14.4px;color:#000;font-weight:normal;font-family:'Liberation Sans',sans-serif;">GeoPackage</div>
<svg style="position:absolute;left:91px;top:462.0px;" width="20" height="20" viewBox="0 0 28 28"><path d="M3 27Q8 12 24 2Q22 14 12 20Q8 22 3 27z" fill="#a8c4e8" stroke="#3a5a88" stroke-width="1.1"/><path d="M3 27L20 8" stroke="#3a5a88" stroke-width="0.8"/><path d="M10 16l6 1M8 19l6 0M13 12l5 1" stroke="#3a5a88" stroke-width="0.6"/></svg>
<div class="t" style="left:117.8px;top:465.26px;font-size:14.4px;line-height:14.4px;color:#000;font-weight:normal;font-family:'Liberation Sans',sans-serif;">SpatiaLite</div>
<svg style="position:absolute;left:73px;top:488.94999999999993px;" width="6" height="10" viewBox="0 0 6 10"><path d="M0.5 1L5.5 5L0.5 9z" fill="#555"/></svg>
<svg style="position:absolute;left:91px;top:484.44999999999993px;" width="20" height="20" viewBox="0 0 28 28"><path d="M3 8Q3 2 10 2H18Q25 2 25 8Q25 14 21 15Q21 20 18 22V15Q14 14 13 10Q12 16 11 21Q8 18 8 13Q3 14 3 8z" fill="#6a96c8" stroke="#1f3f68" stroke-width="1.4"/></svg>
<div class="t" style="left:117.8px;top:487.71px;font-size:14.4px;line-height:14.4px;color:#000;font-weight:normal;font-family:'Liberation Sans',sans-serif;">PostgreSQL</div>
<svg style="position:absolute;left:91px;top:506.9px;" width="20" height="20" viewBox="0 0 28 28"><rect x="4" y="4" width="20" height="20" fill="#6a96c8"/><rect x="2" y="2" width="24" height="24" fill="none" stroke="#1f3f68" stroke-width="1.5" stroke-dasharray="2 2"/></svg>
<div class="t" style="left:117.8px;top:510.16px;font-size:14.4px;line-height:14.4px;color:#000;font-weight:normal;font-family:'Liberation Sans',sans-serif;">SAP HANA</div>
<svg style="position:absolute;left:91px;top:529.3499999999999px;" width="20" height="20" viewBox="0 0 28 28"><rect x="3" y="3" width="14" height="14" fill="none" stroke="#a8c4e8"/><rect x="6" y="6" width="14" height="14" fill="none" stroke="#8ab0e0"/><rect x="10" y="10" width="15" height="15" fill="#fff" stroke="#6a96c8" stroke-width="1.2"/><circle cx="17.5" cy="17.5" r="4" fill="none" stroke="#6a96c8"/></svg>
<div class="t" style="left:117.8px;top:532.61px;font-size:14.4px;line-height:14.4px;color:#000;font-weight:normal;font-family:'Liberation Sans',sans-serif;">STAC</div>
<div style="left:463px;top:280px;width:17px;height:269px;background:linear-gradient(90deg,#f4f4f4,#fbfbfb);border-left:1px solid #dcdcdc"></div>
<div style="left:464px;top:330px;width:16px;height:199px;background:#dfdfdf"></div>
<div style="left:464px;top:297px;width:16px;height:1px;background:#c8c8c8"></div>
<div style="left:464px;top:531px;width:16px;height:1px;background:#c8c8c8"></div>
<svg style="position:absolute;left:463px;top:280px;" width="17" height="17" viewBox="0 0 17 17"><path d="M3.5 11h10l-5-5z" fill="#555"/></svg>
<svg style="position:absolute;left:463px;top:532px;" width="17" height="17" viewBox="0 0 17 17"><path d="M3.5 6h10l-5 5z" fill="#555"/></svg>
<div style="left:66px;top:549px;width:397px;height:17px;background:linear-gradient(#fdfdfd,#f0f0f0);border-top:1px solid #d8d8d8"></div>
<div style="left:437px;top:550px;width:8px;height:16px;background:#dcdcdc"></div>
<div style="left:82px;top:550px;width:1px;height:16px;background:#d0d0d0"></div>
<svg style="position:absolute;left:66px;top:549px;" width="17" height="17" viewBox="0 0 17 17"><path d="M11 3.5v10l-5-5z" fill="#555"/></svg>
<svg style="position:absolute;left:446px;top:549px;" width="17" height="17" viewBox="0 0 17 17"><path d="M6 3.5v10l5-5z" fill="#555"/></svg>
<div style="left:463px;top:549px;width:17px;height:17px;background:#f0f0f0"></div>
<div style="left:265px;top:570px;width:20px;height:1px;border-top:1px dotted #b0b0b0"></div>
<div class="t" style="left:70.6px;top:581.18px;font-size:13.903px;line-height:13.903px;color:#000;font-weight:normal;font-family:'Liberation Sans',sans-serif;">Camadas</div>
<svg style="position:absolute;left:448px;top:581px;" width="32" height="14" viewBox="0 0 32 14"><rect x="0.5" y="0.5" width="13" height="13" rx="2" fill="#f4f4f4" stroke="#777"/><rect x="17.5" y="0.5" width="13" height="13" rx="2" fill="#f4f4f4" stroke="#777"/><path d="M3 6.5h5v5H3z M5.5 6.5V3.5h5v5h-2.5" fill="none" stroke="#555"/><path d="M20.5 3.5l7 7M27.5 3.5l-7 7" stroke="#444" stroke-width="2"/></svg>
<svg style="position:absolute;left:74px;top:608px;" width="20" height="20" viewBox="0 0 28 28"><path d="M4 16L12 10L18 17L11 24z" fill="#e04040"/><path d="M4 16L8 13L14 20L11 24z" fill="#4a78c0" opacity="0.8"/><path d="M8 13L12 10L16 15L12 18z" fill="#f0d020"/><path d="M15 13L24 3" stroke="#c89a50" stroke-width="3.5" stroke-linecap="round"/></svg>
<svg style="position:absolute;left:106px;top:608px;" width="20" height="20" viewBox="0 0 28 28"><path d="M4 9h12v16H4z" fill="#f0f0f0" stroke="#888" stroke-width="1.3"/><path d="M8 5h12v16" fill="none" stroke="#999" stroke-width="1.3"/><path d="M12 2v14" stroke="#6a96c8" stroke-width="1.6"/><rect x="16" y="17" width="10" height="10" rx="1.5" fill="#4f9a4f" stroke="#3a7a3a" stroke-width="0.6"/><path d="M21.0 19v6M18 22.0h6" stroke="#fff" stroke-width="2.2"/></svg>
<svg style="position:absolute;left:138px;top:608px;" width="20" height="20" viewBox="0 0 28 28"><path d="M2 14Q14 2 26 14Q14 24 2 14z" fill="#f4f4f4" stroke="#777" stroke-width="1.2"/><circle cx="14" cy="13" r="5" fill="#6a96c8"/><circle cx="14" cy="12" r="2" fill="#222"/><path d="M20 24h6l-3 3z" fill="#444"/></svg>
<svg style="position:absolute;left:170px;top:608px;" width="20" height="20" viewBox="0 0 28 28"><path d="M3 4h22v3l-8 8v11l-6-4v-7L3 7z" fill="#6a96c8" stroke="#3a6aa0" stroke-width="0.8"/><rect x="4" y="4" width="20" height="3" fill="#fde254"/><path d="M20 24h6l-3 3z" fill="#444"/></svg>
<svg style="position:absolute;left:202px;top:608px;" width="20" height="20" viewBox="0 0 28 28"><text x="0" y="19" font-family="Liberation Serif" font-size="26" fill="#7a3a98">ε</text><path d="M15 17h11l-1 9h-9z" fill="#c8c8c8" stroke="#888"/></svg>
<svg style="position:absolute;left:247px;top:608px;" width="20" height="20" viewBox="0 0 28 28"><path d="M5 3V24M5 7H23" stroke="#c8c8c8" stroke-width="1.5"/><rect x="7" y="10" width="4" height="4" fill="#f0a030"/><rect x="7" y="19" width="4" height="4" fill="#f0a030"/><path d="M16 4V16H12L18 24L24 16H20V4z" fill="#6a96c8" stroke="#2f4f78"/></svg>
<svg style="position:absolute;left:279px;top:608px;" width="20" height="20" viewBox="0 0 28 28"><path d="M5 3V24M5 7H23" stroke="#c8c8c8" stroke-width="1.5"/><rect x="7" y="10" width="4" height="4" fill="#f0a030"/><rect x="7" y="19" width="4" height="4" fill="#f0a030"/><path d="M16 24V12H12L18 4L24 12H20V24z" fill="#6a96c8" stroke="#2f4f78"/></svg>
<svg style="position:absolute;left:309px;top:608px;" width="20" height="20" viewBox="0 0 28 28"><rect x="3" y="3" width="17" height="17" fill="#f4f4f4" stroke="#888" stroke-width="1.6"/><rect x="15" y="17" width="11" height="8" rx="2" fill="#d02020"/><path d="M17.5 21h6" stroke="#fff" stroke-width="2"/></svg>
<svg style="position:absolute;left:227px;top:613px;" width="12" height="8" viewBox="0 0 12 8"><path d="M1 1.5h10l-5 5z" fill="#555"/></svg>
<div style="left:65px;top:638px;width:416px;height:347px;background:#fff;border:1px solid #a8a8a8;border-top:none"></div>
<div style="left:66px;top:638px;width:414px;height:24px;background:#efefef"></div>
<div style="left:95px;top:641.5px;width:17px;height:17px;background:#fff;border:1px solid #c8c8c8"></div>
<svg style="position:absolute;left:97px;top:644.0px;" width="13" height="12" viewBox="0 0 13 12"><path d="M2 6.5L5 10L11 1.5" fill="none" stroke="#000" stroke-width="2"/></svg>
<div style="left:120px;top:640.0px;width:20px;height:20px;background:#00bfff;"></div>
<div class="t" style="left:148.2px;top:643.46px;font-size:14.4px;line-height:14.4px;color:#000;font-weight:bold;font-family:'Liberation Sans',sans-serif;text-decoration:underline">Hidrografia</div>
<div style="left:95px;top:664.05px;width:17px;height:17px;background:#fff;border:1px solid #c8c8c8"></div>
<svg style="position:absolute;left:97px;top:666.55px;" width="13" height="12" viewBox="0 0 13 12"><path d="M2 6.5L5 10L11 1.5" fill="none" stroke="#000" stroke-width="2"/></svg>
<div style="left:120px;top:662.55px;width:20px;height:20px;background:#fdbf6f;border:1px solid #333"></div>
<div class="t" style="left:148.2px;top:665.96px;font-size:14.4px;line-height:14.4px;color:#000;font-weight:bold;font-family:'Liberation Sans',sans-serif;">Paragominas</div>
<div style="left:95px;top:686.6px;width:17px;height:17px;background:#fff;border:1px solid #c8c8c8"></div>
<svg style="position:absolute;left:97px;top:689.1px;" width="13" height="12" viewBox="0 0 13 12"><path d="M2 6.5L5 10L11 1.5" fill="none" stroke="#000" stroke-width="2"/></svg>
<div style="left:120px;top:685.1px;width:20px;height:20px;background:#ffbcbc;border:1px solid #333"></div>
<div class="t" style="left:148.2px;top:688.46px;font-size:14.4px;line-height:14.4px;color:#000;font-weight:bold;font-family:'Liberation Sans',sans-serif;">Pará</div>
<div style="left:95px;top:709.15px;width:17px;height:17px;background:#fff;border:1px solid #c8c8c8"></div>
<svg style="position:absolute;left:97px;top:711.65px;" width="13" height="12" viewBox="0 0 13 12"><path d="M2 6.5L5 10L11 1.5" fill="none" stroke="#000" stroke-width="2"/></svg>
<div style="left:120px;top:707.65px;width:20px;height:20px;background:#ffffff;border:1px solid #333"></div>
<div class="t" style="left:148.2px;top:710.96px;font-size:14.4px;line-height:14.4px;color:#000;font-weight:bold;font-family:'Liberation Sans',sans-serif;">Unidades Federativas</div>
<div style="left:95px;top:731.7px;width:17px;height:17px;background:#fff;border:1px solid #c8c8c8"></div>
<svg style="position:absolute;left:97px;top:734.2px;" width="13" height="12" viewBox="0 0 13 12"><path d="M2 6.5L5 10L11 1.5" fill="none" stroke="#000" stroke-width="2"/></svg>
<div style="left:120px;top:730.2px;width:20px;height:20px;background:#dcdcdc;border:1px solid #333"></div>
<div class="t" style="left:148.2px;top:733.46px;font-size:14.4px;line-height:14.4px;color:#000;font-weight:bold;font-family:'Liberation Sans',sans-serif;">América do Sul</div>
<svg style="position:absolute;left:453px;top:662px;" width="21" height="21" viewBox="0 0 21 21"><rect x="0.5" y="0.5" width="20" height="20" rx="2" fill="#f4f4f4" stroke="#dcdcdc"/><path d="M3.5 4.5h14l-5.5 6.5v7l-3-2v-5z" fill="none" stroke="#555" stroke-width="1.2"/></svg>
<svg style="position:absolute;left:453px;top:685px;" width="21" height="21" viewBox="0 0 21 21"><rect x="0.5" y="0.5" width="20" height="20" rx="2" fill="#f4f4f4" stroke="#dcdcdc"/><path d="M3.5 4.5h14l-5.5 6.5v7l-3-2v-5z" fill="none" stroke="#555" stroke-width="1.2"/></svg>
<svg style="position:absolute;left:490px;top:218px;" width="911" height="362" viewBox="0 0 911 362"><rect width="911" height="362" fill="#ffbcbc"/>
<polygon points="764.0,0.0 767.0,0.0 770.0,0.0 773.0,0.0 776.0,0.0 779.0,0.0 782.0,0.0 785.0,0.0 788.0,0.0 791.0,0.0 794.0,0.0 797.0,0.0 800.0,0.0 803.0,0.0 806.0,0.0 809.0,0.0 812.0,0.0 815.0,0.0 818.0,0.0 821.0,0.0 824.0,0.0 827.0,0.0 830.0,0.0 833.0,0.0 836.0,0.0 839.0,0.0 842.0,0.0 845.0,0.0 848.0,0.0 851.0,0.0 854.0,0.0 857.0,0.0 860.0,0.0 863.0,0.0 866.0,0.0 869.0,0.0 872.0,0.0 875.0,0.0 878.0,0.0 881.0,0.0 884.0,0.0 887.0,0.0 890.0,0.0 893.0,0.0 896.0,0.0 899.0,0.0 902.0,0.0 905.0,0.0 908.0,0.0 911.0,0.0 911.0,3.0 911.0,6.0 911.0,9.1 911.0,12.1 911.0,15.1 911.0,18.1 911.0,21.1 911.0,24.1 911.0,27.2 911.0,30.2 911.0,33.2 911.0,36.2 911.0,39.2 911.0,42.2 911.0,45.2 911.0,48.3 911.0,51.3 911.0,54.3 911.0,57.3 911.0,60.3 911.0,63.4 911.0,66.4 911.0,69.4 911.0,72.4 911.0,75.4 911.0,78.4 911.0,81.4 911.0,84.5 911.0,87.5 911.0,90.5 911.0,93.5 911.0,96.5 911.0,99.6 911.0,102.6 911.0,105.6 911.0,108.6 911.0,111.6 911.0,114.6 911.0,117.6 911.0,120.7 911.0,123.7 911.0,126.7 911.0,129.7 911.0,132.7 911.0,135.8 911.0,138.8 911.0,141.8 911.0,144.8 911.0,147.8 911.0,150.8 911.0,153.9 911.0,156.9 911.0,159.9 911.0,162.9 911.0,165.9 911.0,168.9 911.0,171.9 911.0,175.0 911.0,178.0 911.0,181.0 911.0,184.0 911.0,187.0 911.0,190.1 911.0,193.1 911.0,196.1 911.0,199.1 911.0,202.1 911.0,205.1 911.0,208.1 911.0,211.2 911.0,214.2 911.0,217.2 911.0,220.2 911.0,223.2 911.0,226.2 911.0,229.3 911.0,232.3 911.0,235.3 911.0,238.3 911.0,241.3 911.0,244.4 911.0,247.4 911.0,250.4 911.0,253.4 911.0,256.4 911.0,259.4 911.0,262.4 911.0,265.5 911.0,268.5 911.0,271.5 911.0,274.5 911.0,277.5 911.0,280.6 911.0,283.6 911.0,286.6 911.0,289.6 911.0,292.6 911.0,295.6 911.0,298.6 911.0,301.7 911.0,304.7 911.0,307.7 911.0,310.7 911.0,313.7 911.0,316.8 911.0,319.8 911.0,322.8 911.0,325.8 911.0,328.8 911.0,331.8 911.0,334.9 911.0,337.9 911.0,340.9 911.0,343.9 911.0,346.9 911.0,349.9 911.0,353.0 911.0,356.0 911.0,359.0 911.0,362.0 908.0,362.0 905.0,362.0 902.0,362.0 899.0,362.0 896.0,362.0 893.0,362.0 890.0,362.0 887.0,362.0 883.9,362.0 880.9,362.0 877.9,362.0 874.9,362.0 871.9,362.0 868.9,362.0 865.9,362.0 862.9,362.0 859.9,362.0 856.9,362.0 853.9,362.0 850.9,362.0 847.9,362.0 844.9,362.0 841.9,362.0 838.9,362.0 835.9,362.0 832.8,362.0 829.8,362.0 826.8,362.0 823.8,362.0 820.8,362.0 817.8,362.0 814.8,362.0 811.8,362.0 808.8,362.0 805.8,362.0 802.8,362.0 799.8,362.0 796.8,362.0 793.8,362.0 790.8,362.0 787.8,362.0 784.8,362.0 781.7,362.0 778.7,362.0 775.7,362.0 772.7,362.0 769.7,362.0 766.7,362.0 763.7,362.0 760.7,362.0 757.7,362.0 754.7,362.0 751.7,362.0 748.7,362.0 745.7,362.0 742.7,362.0 739.7,362.0 736.7,362.0 733.7,362.0 730.7,362.0 727.6,362.0 724.6,362.0 721.6,362.0 718.6,362.0 715.6,362.0 712.6,362.0 709.6,362.0 706.6,362.0 703.6,362.0 700.6,362.0 697.6,362.0 694.6,362.0 691.6,362.0 688.6,362.0 685.6,362.0 682.6,362.0 679.6,362.0 676.5,362.0 673.5,362.0 670.5,362.0 667.5,362.0 664.5,362.0 661.5,362.0 658.5,362.0 655.5,362.0 652.5,362.0 649.5,362.0 646.5,362.0 643.5,362.0 640.5,362.0 637.5,362.0 634.5,362.0 631.5,362.0 628.5,362.0 625.4,362.0 622.4,362.0 619.4,362.0 616.4,362.0 613.4,362.0 610.4,362.0 607.4,362.0 604.4,362.0 601.4,362.0 601.4,362.0 602.6,358.9 603.8,355.8 604.8,352.6 606.0,349.5 606.3,346.2 606.4,342.8 608.1,340.0 606.0,336.5 607.8,333.7 609.7,331.0 609.3,327.8 610.6,324.9 608.8,321.5 610.4,318.7 610.6,315.6 610.1,312.4 611.3,309.3 611.6,306.2 610.2,302.9 611.1,299.8 611.5,296.7 612.4,293.6 600.0,282.0 610.0,242.0 650.0,202.0 680.0,132.0 690.0,82.0 735.0,40.0 764.0,22.0" fill="#ffffff"/>
<polyline points="425.4,0.0 424.9,6.8 417.0,8.8 423.0,14.0 419.0,16.6 420.0,21.5 426.0,23.5 433.7,24.0 434.7,28.4" fill="none" stroke="#19bff5" stroke-width="1.8"/>
<polyline points="113.6,0.2 118.9,8.5 115.3,23.5 105.6,32.3 102.0,28.0 90.6,35.0 82.7,28.0 77.4,34.0 73.9,41.0 78.3,50.0 73.9,64.0 81.0,78.0 78.3,90.5 84.5,95.8 82.7,103.0 89.8,113.5 88.0,120.5 93.3,127.6" fill="none" stroke="#3cc0f0" stroke-width="1"/>
<path d="M2 0 Q1 10 4 14 Q3 18 1 20" fill="none" stroke="#10b8f8" stroke-width="3"/>
<polyline points="367.5,180.0 365.1,177.4 363.5,174.2 366.0,171.3 369.3,169.4 372.4,167.3 375.5,167.6 378.5,168.4 381.2,170.2 385.0,168.6 389.0,167.3 389.3,163.3 388.0,159.5 390.5,155.8 392.0,151.6 394.1,154.0 397.2,155.1 399.3,157.5 399.1,153.5 398.8,149.6 402.4,150.2 405.7,151.6 407.9,149.1 410.4,147.0 413.5,145.7 414.5,140.8 418.4,143.8 421.4,140.8 419.0,138.2 417.5,135.0 415.5,132.0 418.9,131.1 421.7,129.2 424.3,127.0 423.4,124.0 421.9,121.4 419.3,119.3 418.4,116.3 420.4,112.4 418.4,110.4 414.9,111.8 411.1,112.2 407.6,113.4 405.0,111.1 401.8,109.5 404.4,105.9 405.7,101.6 407.4,98.9 407.6,95.7 406.7,91.8 403.1,92.5 399.5,91.3 395.9,91.3 398.8,86.9 395.6,84.2 392.0,82.0 393.5,79.2 394.4,76.0 396.5,73.5 395.0,69.6 393.5,65.6 395.6,63.0 399.3,62.4 401.4,59.7 402.1,55.4 401.4,51.0 404.9,51.4 408.5,51.3 412.0,52.0 413.3,48.1 413.0,44.0 416.5,45.1 420.0,46.0 424.0,42.0 422.0,39.0 419.0,37.2 422.2,36.9 424.9,35.3 427.8,34.3 425.9,30.3 430.8,27.9" fill="none" stroke="#14bdf5" stroke-width="2.6" stroke-linejoin="round"/>
<polygon points="430.8,27.9 436.7,36.0 442.5,42.0 446.5,54.8 450.4,64.6 447.5,78.4 453.3,84.3 461.2,95.0 472.0,104.0 483.0,111.0 502.0,119.0 518.0,123.0 606.0,53.6 610.0,39.7 609.0,32.0 619.0,18.0 630.5,14.0 645.5,2.0 660.0,0.0 677.5,-0.5 692.0,2.0 714.0,14.0 737.0,22.6 754.0,18.0 764.0,14.0 769.0,30.0 764.0,29.9 760.0,33.0 755.8,31.9 752.0,34.0 752.8,38.0 751.9,41.7 748.4,44.8 748.0,48.6 748.0,52.5 744.1,52.8 740.7,55.0 736.8,54.9 733.0,55.8 729.4,56.9 726.0,59.3 722.0,59.0 719.2,61.8 716.3,64.5 712.5,66.2 708.8,68.1 707.0,72.0 705.0,78.0 705.9,82.0 709.3,84.1 711.8,86.9 714.5,89.5 716.0,93.0 719.8,93.8 722.7,96.0 724.5,99.5 726.1,102.6 728.1,105.6 729.0,109.0 725.6,110.7 721.5,110.2 718.5,112.7 715.0,114.0 711.2,116.1 708.2,119.5 704.0,121.0 707.4,124.6 708.2,129.2 709.5,133.7 710.8,138.0 709.5,142.2 709.5,146.5 706.6,150.2 706.6,154.7 706.0,159.0 704.8,162.0 705.4,167.1 703.8,172.0 699.9,173.6 697.1,176.5 694.8,180.0 692.7,183.0 690.8,186.1 690.8,190.0 687.4,192.7 684.6,196.0 682.7,200.0 680.6,203.3 676.4,204.9 673.9,207.9 672.7,212.0 672.9,215.8 669.8,218.7 669.0,222.3 668.7,226.0 665.8,228.1 662.6,229.9 659.6,232.0 656.6,234.0 652.2,234.7 649.4,238.0 645.2,239.0 642.4,242.5 638.5,244.0 636.2,247.1 635.1,250.5 635.5,254.4 635.3,258.4 634.6,262.4 634.5,266.5 631.6,269.4 630.8,273.2 630.0,277.0 628.5,280.5 625.8,284.0 622.2,286.4 618.5,288.6 614.8,290.0 612.4,293.6 608.4,294.6 604.9,296.1 604.0,300.2 599.8,301.1 598.4,304.7 582.3,307.7 564.2,282.6 572.2,279.5 569.2,264.5 537.0,264.5 520.0,275.5 517.4,277.4 514.2,278.2 511.5,279.9 508.4,280.8 505.5,282.1 503.2,284.7 500.4,286.2 497.0,286.5 493.8,286.5 491.1,288.6 488.1,289.4 484.6,288.3 481.9,290.3 478.6,290.2 475.8,291.8 472.7,292.2 469.9,294.1 466.6,293.7 463.5,293.9 460.6,295.4 457.5,295.7 454.6,297.0 452.4,299.3 451.7,302.8 448.4,304.4 446.9,307.2 445.6,310.2 444.2,313.2 440.7,314.6 439.6,317.7 437.2,319.9 435.0,322.3 433.5,325.1 432.0,328.0 429.3,326.2 425.9,326.6 423.2,324.8 420.0,324.8 417.3,322.8 414.0,323.0 410.4,323.7 407.9,326.9 404.6,328.3 401.0,329.0 398.0,330.6 394.3,329.8 391.5,332.0 388.2,332.5 385.3,334.2 382.0,334.6 378.8,335.6 376.9,338.3 374.8,340.8 372.2,342.9 370.1,345.4 367.3,347.4 365.6,350.2 363.0,352.4 361.0,355.0 359.5,358.0 357.0,355.8 353.8,355.5 350.4,355.6 348.1,353.0 345.2,351.7 342.3,350.7 339.0,350.6 335.8,350.4 332.6,350.1 329.4,351.3 326.2,349.8 323.0,350.4 319.8,351.1 316.6,351.6 313.4,349.8 310.2,349.4 307.0,350.6 304.1,352.3 300.6,351.3 297.7,353.0 294.8,354.3 291.6,354.7 288.3,354.3 285.1,354.8 282.4,357.4 279.0,356.8 276.2,358.9 272.8,358.0 269.9,359.7 266.7,360.0 263.6,358.7 260.4,358.1 257.1,358.9 254.0,357.3 250.6,358.6 247.3,358.8 244.2,357.1 241.0,357.0 237.9,357.8 234.8,357.2 231.9,356.4 228.9,355.6 225.7,356.4 222.6,356.4 219.7,355.0 217.3,352.6 213.8,352.1 211.7,349.0 208.8,347.5 205.3,346.9 202.6,345.0 199.7,343.8 196.9,342.4 194.2,340.9 191.3,339.7 188.4,338.5 185.7,337.1 183.1,335.1 179.9,334.8 177.0,333.5 173.6,332.8 170.3,331.2 166.6,331.4 163.3,330.4 160.0,329.0 158.1,326.0 154.8,324.8 152.3,322.7 148.9,321.6 147.0,318.6 145.1,316.2 143.6,313.4 141.7,311.0 141.7,306.3 141.7,301.7 144.9,297.6 145.0,293.0 145.0,288.3 148.9,285.6 150.0,281.5 152.4,278.0 150.7,273.8 153.2,270.0 153.5,266.0 156.0,261.8 160.8,261.0 163.6,257.2 168.4,256.6 170.3,252.4 174.5,251.0 178.9,249.9 181.0,246.0 186.7,244.7 192.0,247.0 190.7,243.0 192.6,239.0 192.0,235.0 197.3,236.5 202.0,234.0 207.0,233.0 211.1,232.0 215.4,232.0 220.0,230.4 219.5,224.2 224.0,222.5 228.9,222.5 232.1,218.3 236.1,216.0 241.0,216.0 245.9,214.8 250.5,216.3 254.9,219.3 260.0,216.9 264.5,219.0 267.6,216.2 270.7,213.2 273.0,209.7 278.1,210.2 283.0,212.1 288.0,213.0 289.3,208.6 292.2,205.5 296.6,204.0 301.2,201.3 306.8,202.2 311.5,200.0 315.4,202.1 319.5,204.1 322.5,207.6 326.5,209.7 329.2,205.7 331.4,201.3 335.0,198.0 339.4,199.1 343.6,198.3 347.8,197.0 345.5,191.7 345.7,186.0 349.9,183.3 353.7,180.0 357.6,175.1 362.5,177.7 367.5,180.0 365.1,177.4 363.5,174.2 366.0,171.3 369.3,169.4 372.4,167.3 375.5,167.6 378.5,168.4 381.2,170.2 385.0,168.6 389.0,167.3 389.3,163.3 388.0,159.5 390.5,155.8 392.0,151.6 394.1,154.0 397.2,155.1 399.3,157.5 399.1,153.5 398.8,149.6 402.4,150.2 405.7,151.6 407.9,149.1 410.4,147.0 413.5,145.7 414.5,140.8 418.4,143.8 421.4,140.8 419.0,138.2 417.5,135.0 415.5,132.0 418.9,131.1 421.7,129.2 424.3,127.0 423.4,124.0 421.9,121.4 419.3,119.3 418.4,116.3 420.4,112.4 418.4,110.4 414.9,111.8 411.1,112.2 407.6,113.4 405.0,111.1 401.8,109.5 404.4,105.9 405.7,101.6 407.4,98.9 407.6,95.7 406.7,91.8 403.1,92.5 399.5,91.3 395.9,91.3 398.8,86.9 395.6,84.2 392.0,82.0 393.5,79.2 394.4,76.0 396.5,73.5 395.0,69.6 393.5,65.6 395.6,63.0 399.3,62.4 401.4,59.7 402.1,55.4 401.4,51.0 404.9,51.4 408.5,51.3 412.0,52.0 413.3,48.1 413.0,44.0 416.5,45.1 420.0,46.0 424.0,42.0 422.0,39.0 419.0,37.2 422.2,36.9 424.9,35.3 427.8,34.3 425.9,30.3" fill="#fdbf6f" stroke="#1a1a1a" stroke-width="1.1" stroke-linejoin="round"/>
<g fill="none" stroke="#30bff0" stroke-width="1.1" stroke-linecap="round">
<polyline stroke-dasharray="2 2.5" points="17.4,65.0 21.0,63.0 24.5,59.6"/><polyline stroke-dasharray="2 2.5" points="30.0,58.8 35.0,58.8 40.4,50.0 45.6,38.5"/>
<polyline stroke-dasharray="3 2" stroke-opacity="0.8" points="598.0,139.0 600.0,134.0 610.0,131.0 622.0,127.0 637.0,122.0"/>
<polyline points="232.0,253.6 236.0,258.0 239.5,262.0"/><polyline points="236.0,258.0 241.0,257.0"/>
<polyline points="428.0,217.0 435.6,221.0"/>
<polyline points="73.0,251.0 76.0,246.0"/><polyline points="94.0,78.0 96.0,81.0"/>
<polyline points="670.0,307.0 672.0,309.0"/><polyline points="815.0,283.0 817.0,284.0"/><polyline points="753.0,301.0 755.0,301.0"/>
<polyline points="314.0,73.0 316.0,71.0"/><polyline points="514.0,247.0 516.0,249.0"/><polyline points="448.0,327.0 450.0,326.0"/>
</g>
<polyline points="612.4,293.6 611.8,296.7 611.2,299.8 610.8,302.9 610.1,306.0 610.4,309.2 609.6,312.3 612.1,315.7 610.4,318.7 610.0,321.7 608.1,324.5 608.5,327.7 607.2,330.6 609.0,334.0 607.5,336.8 607.7,339.9 606.4,342.8 605.4,346.1 604.5,349.5 605.3,353.3 603.9,356.5 602.9,359.8 601.4,363.0" fill="none" stroke="#1a1a1a" stroke-width="1.1"/>
<path d="M764 0V14" stroke="#1a1a1a" stroke-width="1"/>
</svg>
<div style="left:1401px;top:218px;width:1px;height:362px;background:#d8d8d8"></div>
<div style="left:935px;top:584px;width:20px;height:1px;border-top:1px dotted #b0b0b0"></div>
<div style="left:565px;top:618px;width:30px;height:29px;background:#dcdcdc;border:1px solid #b4b4b4;border-radius:3px"></div>
<div style="left:676px;top:618px;width:30px;height:29px;background:#dcdcdc;border:1px solid #b4b4b4;border-radius:3px"></div>
<svg style="position:absolute;left:499px;top:622px;" width="20" height="20" viewBox="0 0 28 28"><path d="M6 2l6 10" stroke="#c89020" stroke-width="1.8"/><path d="M10 11L15 9L24 22Q18 27 11 25z" fill="#f8d020" stroke="#c8a000" stroke-width="0.7"/><path d="M9 12l6-3" stroke="#d02020" stroke-width="2"/><ellipse cx="19" cy="25" rx="6" ry="1.5" fill="#999" opacity="0.5"/></svg>
<svg style="position:absolute;left:528px;top:622px;" width="20" height="20" viewBox="0 0 28 28"><path d="M6 4v20l17-10z" fill="#5a9a5a"/></svg>
<svg style="position:absolute;left:569px;top:622px;" width="20" height="20" viewBox="0 0 28 28"><path d="M6 3h12l5 5v18H6z" fill="#fff" stroke="#888" stroke-width="1.2"/><path d="M9 11h11M9 15h11M9 19h11M9 23h8" stroke="#999" stroke-width="1.2"/><path d="M13 27L15 21L23 10L26 12L18 23z" fill="#f08030" stroke="#804020" stroke-width="0.6"/></svg>
<svg style="position:absolute;left:610px;top:622px;" width="20" height="20" viewBox="0 0 28 28"><path d="M13 13l11 11" stroke="#9a8030" stroke-width="5.5" stroke-linecap="round"/><path d="M13 13l11 11" stroke="#f0d070" stroke-width="3.5" stroke-linecap="round"/><path d="M3 7a7 7 0 0 0 10 8l2-2a7 7 0 0 0-8-10l4 4-1 3-3 1z" fill="#e8e8e8" stroke="#555" stroke-width="1.3" stroke-linejoin="round"/></svg>
<svg style="position:absolute;left:642px;top:622px;" width="20" height="20" viewBox="0 0 28 28"><rect x="3" y="3" width="19" height="21" fill="#6a96c8" stroke="#1a2a3a"/><rect x="3" y="3" width="5" height="21" fill="#1f2f3f"/><text x="11" y="19" font-family="Liberation Sans" font-size="12" fill="#fff">?</text><path d="M19 23h7l-3.5 3.5z" fill="#222"/></svg>
<svg style="position:absolute;left:681px;top:622px;" width="20" height="20" viewBox="0 0 28 28"><rect x="4" y="4" width="20" height="20" fill="#f8f8f8" stroke="#777" stroke-width="1.3"/><rect x="4" y="4" width="20" height="4" fill="#888"/><path d="M8 12h12M8 16h12M8 20h12" stroke="#6a96c8"/></svg>
<div style="left:558px;top:622px;width:1px;height:19px;background:#d0d0d0"></div>
<div style="left:600px;top:622px;width:1px;height:19px;background:#d0d0d0"></div>
<div style="left:672px;top:622px;width:1px;height:19px;background:#d0d0d0"></div>
<svg style="position:absolute;left:954px;top:622px;" width="20" height="20" viewBox="0 0 28 28"><path d="M2 5h8l2 2.5h11v4H2z" fill="#fde254" stroke="#c8a800"/><path d="M2 22L5.5 10.5H26.5L23 22z" fill="#fde254" stroke="#c8a800"/><path d="M9 5q0-3 4-3t4 3v2h-8z" fill="#3a78b8"/></svg>
<svg style="position:absolute;left:985px;top:622px;" width="20" height="20" viewBox="0 0 28 28"><path d="M6 3h12l5 5v18H6z" fill="#fff" stroke="#888" stroke-width="1.2"/><path d="M9 11h11M9 15h11M9 19h11M9 23h8" stroke="#999" stroke-width="1.2"/><path d="M13 27L15 21L23 10L26 12L18 23z" fill="#f08030" stroke="#804020" stroke-width="0.6"/></svg>
<svg style="position:absolute;left:1025px;top:622px;" width="20" height="20" viewBox="0 0 28 28"><rect x="1.5" y="1.5" width="25" height="25" rx="3" fill="#e4e4e4" stroke="#c4c4c4"/><rect x="6" y="2" width="16" height="10" fill="#f4f4f4"/><path d="M8 5h12M8 7.5h12M8 10h12" stroke="#888" stroke-width="0.8"/><rect x="7" y="16" width="14" height="10" fill="#f0f0f0"/><rect x="9" y="18" width="3" height="6" fill="#c4c4c4"/></svg>
<svg style="position:absolute;left:1057px;top:622px;" width="20" height="20" viewBox="0 0 28 28"><rect x="1.5" y="1.5" width="25" height="25" rx="3" fill="#6a96c8" stroke="#2f5f98"/><rect x="6" y="2" width="16" height="10" fill="#f4f4f4"/><path d="M8 5h12M8 7.5h12M8 10h12" stroke="#888" stroke-width="0.8"/><rect x="7" y="16" width="14" height="10" fill="#f0f0f0"/><rect x="9" y="18" width="3" height="6" fill="#2f5f98"/><rect x="16" y="16" width="11" height="11" rx="1.5" fill="#3a9a4a"/><path d="M19 25l1-3 4-4 1 1-4 4z" fill="#fff"/></svg>
<svg style="position:absolute;left:1096px;top:622px;" width="20" height="20" viewBox="0 0 28 28"><path d="M6 4v20l17-10z" fill="#5a9a5a"/></svg>
<svg style="position:absolute;left:1136px;top:622px;" width="20" height="20" viewBox="0 0 28 28"><circle cx="22" cy="9" r="3.5" fill="none" stroke="#c02020" stroke-width="2"/><circle cx="22" cy="20" r="3.5" fill="none" stroke="#c02020" stroke-width="2"/><path d="M2 10L19 18M2 19L19 11" stroke="#666" stroke-width="1.8"/></svg>
<svg style="position:absolute;left:1167px;top:622px;" width="20" height="20" viewBox="0 0 28 28"><path d="M3 8h10l3 3v15H3z" fill="#fff" stroke="#777"/><path d="M10 3h10l3 3v15H10z" fill="#fff" stroke="#777"/><path d="M13 9h7M13 12h7M13 15h7M6 14h7M6 17h7M6 20h7" stroke="#999"/></svg>
<svg style="position:absolute;left:1199px;top:622px;" width="20" height="20" viewBox="0 0 28 28"><rect x="4" y="3" width="20" height="23" rx="1" fill="#e8c898" stroke="#c09050"/><rect x="7" y="7" width="14" height="17" fill="#fff" stroke="#999"/><path d="M9 11h10M9 14h10M9 17h10M9 20h10" stroke="#888"/><rect x="10" y="1" width="8" height="4" fill="#bbb"/></svg>
<svg style="position:absolute;left:1239px;top:622px;" width="20" height="20" viewBox="0 0 28 28"><circle cx="11" cy="11" r="8" fill="#eef2f6" stroke="#555" stroke-width="1.6"/><path d="M17 17L25 25" stroke="#d8a820" stroke-width="3.5" stroke-linecap="round"/></svg>
<svg style="position:absolute;left:1279px;top:622px;" width="20" height="20" viewBox="0 0 28 28"><path d="M10 3L7 25M20 3L17 25M3 10H25M2 18H24" stroke="#111" stroke-width="2.5"/></svg>
<svg style="position:absolute;left:1310px;top:622px;" width="20" height="20" viewBox="0 0 28 28"><path d="M3 26L17 12" stroke="#111" stroke-width="2.8"/><path d="M20 2v6M17 5h6M24 7l3-2M24 11h4M21 12l2 3" stroke="#555" stroke-width="1.2"/><path d="M17 12l3-3" stroke="#fff" stroke-width="2"/></svg>
<svg style="position:absolute;left:1349px;top:622px;" width="20" height="20" viewBox="0 0 28 28"><path d="M8 3v20M8 13h10M8 23h10" stroke="#d8d8d8" stroke-width="1.2"/><rect x="5" y="2" width="6" height="5" fill="#fff" stroke="#d4d4d4"/><rect x="17" y="11" width="6" height="5" fill="#fff" stroke="#d4d4d4"/><rect x="17" y="21" width="6" height="5" fill="#fff" stroke="#d4d4d4"/></svg>
<div style="left:1015px;top:622px;width:1px;height:19px;background:#d0d0d0"></div>
<div style="left:1087px;top:622px;width:1px;height:19px;background:#d0d0d0"></div>
<div style="left:1127px;top:622px;width:1px;height:19px;background:#d0d0d0"></div>
<div style="left:1229px;top:622px;width:1px;height:19px;background:#d0d0d0"></div>
<div style="left:1269px;top:622px;width:1px;height:19px;background:#d0d0d0"></div>
<div style="left:1340px;top:622px;width:1px;height:19px;background:#d0d0d0"></div>
<div style="left:1407px;top:592px;width:1px;height:22px;border-left:1px dotted #b8b8b8"></div>
<svg style="position:absolute;left:953px;top:662px;" width="20" height="20" viewBox="0 0 28 28"><path d="M10 2h8v8h8v8h-8v8h-8v-8H2v-8h8z" fill="#c8e8c8" stroke="#3a8a3a" stroke-width="2"/></svg>
<svg style="position:absolute;left:1370px;top:594px;" width="32" height="14" viewBox="0 0 32 14"><rect x="0.5" y="0.5" width="13" height="13" rx="2" fill="#f4f4f4" stroke="#777"/><rect x="17.5" y="0.5" width="13" height="13" rx="2" fill="#f4f4f4" stroke="#777"/><path d="M3 6.5h5v5H3z M5.5 6.5V3.5h5v5h-2.5" fill="none" stroke="#555"/><path d="M20.5 3.5l7 7M27.5 3.5l-7 7" stroke="#444" stroke-width="2"/></svg>
<div class="t" style="left:494px;top:594.23px;font-size:14.673px;line-height:14.673px;color:#000;font-weight:normal;font-family:'Liberation Sans',sans-serif;">Terminal Python</div>
<div style="left:485px;top:593px;width:1px;height:20px;border-left:1px dotted #b8b8b8"></div>
<div style="left:489px;top:659px;width:447px;height:202px;background:#fff;border-top:1px solid #a0a0a0;border-left:1px solid #dcdcdc;border-right:1px solid #a0a0a0;border-bottom:1px solid #a0a0a0"></div>
<div style="left:490px;top:660px;width:48px;height:200px;background:#f0f0f0"></div>
<div class="t" style="left:513.8px;top:661.74px;font-size:16px;line-height:16px;color:#77736a;font-weight:normal;font-family:'Liberation Mono',monospace;-webkit-text-stroke:0;">55</div>
<div class="t" style="left:538.6px;top:661.57px;font-size:16.22px;line-height:16.22px;-webkit-text-stroke:0;font-family:'Liberation Mono',monospace"><span style="color:#5a8cd0;">VARIÁVEIS<span style="color:#999">·</span>GERADAS!</span></div>
<div class="t" style="left:513.8px;top:680.54px;font-size:16px;line-height:16px;color:#77736a;font-weight:normal;font-family:'Liberation Mono',monospace;-webkit-text-stroke:0;">56</div>
<div class="t" style="left:538.6px;top:680.37px;font-size:16.22px;line-height:16.22px;-webkit-text-stroke:0;font-family:'Liberation Mono',monospace"><span style="color:#a868c0;">&gt;&gt;&gt;</span><span style="color:#5a8cd0;"><span style="color:#999">·</span>exec</span><span style="color:#a868c0;">(</span><span style="color:#5a8cd0;">compile</span><span style="color:#a868c0;">(</span><span style="color:#5a8cd0;">Path</span><span style="color:#a868c0;">(</span><span style="color:#80a008;font-weight:bold;">&#x27;H:/Meu<span style="color:#999">·</span>Drive/D</span></div>
<div class="t" style="left:538.6px;top:699.17px;font-size:16.22px;line-height:16.22px;-webkit-text-stroke:0;font-family:'Liberation Mono',monospace"><span style="color:#80a008;font-weight:bold;">EV/tutorial-atlas-pyqgis/Setup_Mapas_</span></div>
<div class="t" style="left:538.6px;top:717.97px;font-size:16.22px;line-height:16.22px;-webkit-text-stroke:0;font-family:'Liberation Mono',monospace"><span style="color:#80a008;font-weight:bold;">Municipais.py&#x27;</span><span style="color:#a868c0;">)</span><span style="color:#5a8cd0;">.read_text</span><span style="color:#a868c0;">()</span><span style="color:#5a8cd0;">,<span style="color:#999">·</span></span><span style="color:#80a008;font-weight:bold;">&#x27;H:/Meu<span style="color:#999">·</span></span></div>
<div class="t" style="left:538.6px;top:736.77px;font-size:16.22px;line-height:16.22px;-webkit-text-stroke:0;font-family:'Liberation Mono',monospace"><span style="color:#80a008;font-weight:bold;">Drive/DEV/tutorial-atlas-pyqgis/Setup</span></div>
<div class="t" style="left:538.6px;top:755.57px;font-size:16.22px;line-height:16.22px;-webkit-text-stroke:0;font-family:'Liberation Mono',monospace"><span style="color:#80a008;font-weight:bold;">_Mapas_Municipais.py&#x27;</span><span style="color:#5a8cd0;">,<span style="color:#999">·</span></span><span style="color:#80a008;font-weight:bold;">&#x27;exec&#x27;</span><span style="color:#a868c0;">))</span></div>
<div class="t" style="left:513.8px;top:774.54px;font-size:16px;line-height:16px;color:#77736a;font-weight:normal;font-family:'Liberation Mono',monospace;-webkit-text-stroke:0;">57</div>
<div class="t" style="left:538.6px;top:774.37px;font-size:16.22px;line-height:16.22px;-webkit-text-stroke:0;font-family:'Liberation Mono',monospace"><span style="color:#5a8cd0;">Logo<span style="color:#999">·</span>salva:<span style="color:#999">·</span>H:/Meu<span style="color:#999">·</span>Drive/DEV/tutorial</span></div>
<div class="t" style="left:538.6px;top:793.17px;font-size:16.22px;line-height:16.22px;-webkit-text-stroke:0;font-family:'Liberation Mono',monospace"><span style="color:#5a8cd0;">-atlas-pyqgis/dados/Brasão_do_Pará.svg</span></div>
<div class="t" style="left:513.8px;top:812.14px;font-size:16px;line-height:16px;color:#77736a;font-weight:normal;font-family:'Liberation Mono',monospace;-webkit-text-stroke:0;">58</div>
<div class="t" style="left:538.6px;top:811.97px;font-size:16.22px;line-height:16.22px;-webkit-text-stroke:0;font-family:'Liberation Mono',monospace"><span style="color:#5a8cd0;">VARIÁVEIS<span style="color:#999">·</span>GERADAS!</span></div>
<div class="t" style="left:513.8px;top:830.94px;font-size:16px;line-height:16px;color:#77736a;font-weight:normal;font-family:'Liberation Mono',monospace;-webkit-text-stroke:0;">59</div>
<div style="left:918px;top:660px;width:17px;height:200px;background:#f4f4f4;border-left:1px solid #e2e2e2"></div>
<div style="left:919px;top:677px;width:16px;height:133px;background:#dadada"></div>
<svg style="position:absolute;left:918px;top:660px;" width="17" height="17" viewBox="0 0 17 17"><path d="M3.5 11h10l-5-5z" fill="#555"/></svg>
<svg style="position:absolute;left:918px;top:843px;" width="17" height="17" viewBox="0 0 17 17"><path d="M3.5 6h10l-5 5z" fill="#555"/></svg>
<div style="left:918px;top:677px;width:17px;height:1px;background:#c8c8c8"></div>
<div style="left:918px;top:842px;width:17px;height:1px;background:#c8c8c8"></div>
<div style="left:704px;top:862px;width:20px;height:1px;border-top:1px dotted #b0b0b0"></div>
<div style="left:489px;top:865px;width:447px;height:120px;background:#fff;border:1px solid #a8a8a8"></div>
<div class="t" style="left:505.5px;top:867.84px;font-size:16px;line-height:16px;color:#555;font-weight:normal;font-family:'Liberation Mono',monospace;-webkit-text-stroke:0;">>>></div>
<div style="left:944px;top:689px;width:458px;height:295px;border-top:1px solid #a8a8a8;border-bottom:1px solid #a8a8a8;background:#f0f0f0"></div>
<div style="left:1010px;top:690px;width:374px;height:277px;background:#fff"></div>
<div style="left:944px;top:689px;width:66px;height:278px;background:#f0f0f0"></div>
<div style="left:1010px;top:690px;width:374px;height:277px;overflow:hidden;position:absolute">
<div class="t" style="left:2.75px;top:2.74px;font-size:16px;line-height:16px;-webkit-text-stroke:0;font-family:'Liberation Mono',monospace"><span style="color:#a868c0;">import</span><span style="color:#969696;">·</span><span style="color:#5a8cd0;">math</span></div>
<div class="t" style="left:2.75px;top:20.16px;font-size:16px;line-height:16px;-webkit-text-stroke:0;font-family:'Liberation Mono',monospace"><span style="color:#a868c0;">from</span><span style="color:#969696;">·</span><span style="color:#5a8cd0;">qgis.core</span><span style="color:#969696;">·</span><span style="color:#a868c0;">import</span><span style="color:#969696;">·</span><span style="color:#a868c0;">(</span><span style="color:#5a8cd0;">QgsProject</span><span style="color:#5a8cd0;">,<span style="color:#999">·</span></span><span style="color:#5a8cd0;">Qgs</span></div>
<div class="t" style="left:2.75px;top:37.58px;font-size:16px;line-height:16px;-webkit-text-stroke:0;font-family:'Liberation Mono',monospace"><span style="color:#5a8cd0;">                       QgsSingleSymbolR</span></div>
<div class="t" style="left:2.75px;top:55.00px;font-size:16px;line-height:16px;-webkit-text-stroke:0;font-family:'Liberation Mono',monospace"><span style="color:#5a8cd0;">                       QgsMapThemeColle</span></div>
<div class="t" style="left:2.75px;top:72.42px;font-size:16px;line-height:16px;-webkit-text-stroke:0;font-family:'Liberation Mono',monospace"><span style="color:#5a8cd0;">                       QgsDistanceArea</span></div>
<div class="t" style="left:2.75px;top:89.84px;font-size:16px;line-height:16px;-webkit-text-stroke:0;font-family:'Liberation Mono',monospace"><span style="color:#a868c0;">from</span><span style="color:#969696;">·</span><span style="color:#5a8cd0;">qgis.utils</span><span style="color:#969696;">·</span><span style="color:#a868c0;">import</span><span style="color:#969696;">·</span><span style="color:#5a8cd0;">iface</span></div>
<div class="t" style="left:2.75px;top:107.26px;font-size:16px;line-height:16px;-webkit-text-stroke:0;font-family:'Liberation Mono',monospace"><span style="color:#a868c0;">from</span><span style="color:#969696;">·</span><span style="color:#5a8cd0;">PyQt5.QtWidgets</span><span style="color:#969696;">·</span><span style="color:#a868c0;">import</span><span style="color:#969696;">·</span><span style="color:#a868c0;">(</span><span style="color:#5a8cd0;">QDialog</span><span style="color:#5a8cd0;">,<span style="color:#999">·</span>Q</span></div>
<div class="t" style="left:2.75px;top:124.68px;font-size:16px;line-height:16px;-webkit-text-stroke:0;font-family:'Liberation Mono',monospace"><span style="color:#5a8cd0;">                             QFileDialo</span></div>
<div class="t" style="left:2.75px;top:142.10px;font-size:16px;line-height:16px;-webkit-text-stroke:0;font-family:'Liberation Mono',monospace"><span style="color:#a868c0;">from</span><span style="color:#969696;">·</span><span style="color:#5a8cd0;">PyQt5.QtCore</span><span style="color:#969696;">·</span><span style="color:#a868c0;">import</span><span style="color:#969696;">·</span><span style="color:#5a8cd0;">Qt</span></div>
<div class="t" style="left:2.75px;top:159.52px;font-size:16px;line-height:16px;-webkit-text-stroke:0;font-family:'Liberation Mono',monospace"><span style="color:#a868c0;">from</span><span style="color:#969696;">·</span><span style="color:#5a8cd0;">PyQt5.QtGui</span><span style="color:#969696;">·</span><span style="color:#a868c0;">import</span><span style="color:#969696;">·</span><span style="color:#5a8cd0;">QColor</span></div>
<div class="t" style="left:2.75px;top:194.36px;font-size:16px;line-height:16px;-webkit-text-stroke:0;font-family:'Liberation Mono',monospace"><span style="color:#969696;font-style:italic;">#·---·DIMENSÕES·FIXAS·DO·LAYOUT·(em·mil</span></div>
<div class="t" style="left:2.75px;top:211.78px;font-size:16px;line-height:16px;-webkit-text-stroke:0;font-family:'Liberation Mono',monospace"><span style="color:#5a8cd0;">DIM_MAPA_1_2</span><span style="color:#969696;">·=·</span><span style="color:#a868c0;">{</span><span style="color:#80a008;font-weight:bold;">&quot;w&quot;</span><span style="color:#969696;">:·</span><span style="color:#d84040;">65.0</span><span style="color:#969696;">,·</span><span style="color:#80a008;font-weight:bold;">&quot;h&quot;</span><span style="color:#969696;">:·</span><span style="color:#d84040;">45.0</span><span style="color:#a868c0;">}</span><span style="color:#969696;">·</span></div>
<div class="t" style="left:2.75px;top:229.20px;font-size:16px;line-height:16px;-webkit-text-stroke:0;font-family:'Liberation Mono',monospace"><span style="color:#5a8cd0;">DIM_MAPA_3</span><span style="color:#969696;">···=·</span><span style="color:#a868c0;">{</span><span style="color:#80a008;font-weight:bold;">&quot;w&quot;</span><span style="color:#969696;">:·</span><span style="color:#d84040;">139.266</span><span style="color:#969696;">,·</span><span style="color:#80a008;font-weight:bold;">&quot;h&quot;</span><span style="color:#969696;">:·</span><span style="color:#d84040;">73.</span></div>
<div class="t" style="left:2.75px;top:264.04px;font-size:16px;line-height:16px;-webkit-text-stroke:0;font-family:'Liberation Mono',monospace"><span style="color:#969696;font-style:italic;">#·---·CONFIGURAÇÃO·DE·ESTILOS·---</span></div>
<div style="left:41.1px;top:36.3px;width:1px;height:17.5px;background:#c8c8c8;position:absolute"></div>
<div style="left:79.5px;top:36.3px;width:1px;height:17.5px;background:#c8c8c8;position:absolute"></div>
<div style="left:117.9px;top:36.3px;width:1px;height:17.5px;background:#c8c8c8;position:absolute"></div>
<div style="left:156.3px;top:36.3px;width:1px;height:17.5px;background:#c8c8c8;position:absolute"></div>
<div style="left:194.8px;top:36.3px;width:1px;height:17.5px;background:#c8c8c8;position:absolute"></div>
<div style="left:41.1px;top:53.7px;width:1px;height:17.5px;background:#c8c8c8;position:absolute"></div>
<div style="left:79.5px;top:53.7px;width:1px;height:17.5px;background:#c8c8c8;position:absolute"></div>
<div style="left:117.9px;top:53.7px;width:1px;height:17.5px;background:#c8c8c8;position:absolute"></div>
<div style="left:156.3px;top:53.7px;width:1px;height:17.5px;background:#c8c8c8;position:absolute"></div>
<div style="left:194.8px;top:53.7px;width:1px;height:17.5px;background:#c8c8c8;position:absolute"></div>
<div style="left:41.1px;top:71.2px;width:1px;height:17.5px;background:#c8c8c8;position:absolute"></div>
<div style="left:79.5px;top:71.2px;width:1px;height:17.5px;background:#c8c8c8;position:absolute"></div>
<div style="left:117.9px;top:71.2px;width:1px;height:17.5px;background:#c8c8c8;position:absolute"></div>
<div style="left:156.3px;top:71.2px;width:1px;height:17.5px;background:#c8c8c8;position:absolute"></div>
<div style="left:194.8px;top:71.2px;width:1px;height:17.5px;background:#c8c8c8;position:absolute"></div>
<div style="left:41.1px;top:123.4px;width:1px;height:17.5px;background:#c8c8c8;position:absolute"></div>
<div style="left:79.5px;top:123.4px;width:1px;height:17.5px;background:#c8c8c8;position:absolute"></div>
<div style="left:117.9px;top:123.4px;width:1px;height:17.5px;background:#c8c8c8;position:absolute"></div>
<div style="left:156.3px;top:123.4px;width:1px;height:17.5px;background:#c8c8c8;position:absolute"></div>
<div style="left:194.8px;top:123.4px;width:1px;height:17.5px;background:#c8c8c8;position:absolute"></div>
<div style="left:233.1px;top:123.4px;width:1px;height:17.5px;background:#c8c8c8;position:absolute"></div>
</div>
<div class="t" style="left:978.9px;top:692.74px;font-size:16px;line-height:16px;color:#77736a;font-weight:normal;font-family:'Liberation Mono',monospace;-webkit-text-stroke:0;">1</div>
<div class="t" style="left:978.9px;top:710.16px;font-size:16px;line-height:16px;color:#77736a;font-weight:normal;font-family:'Liberation Mono',monospace;-webkit-text-stroke:0;">2</div>
<div class="t" style="left:978.9px;top:727.58px;font-size:16px;line-height:16px;color:#77736a;font-weight:normal;font-family:'Liberation Mono',monospace;-webkit-text-stroke:0;">3</div>
<div class="t" style="left:978.9px;top:745.00px;font-size:16px;line-height:16px;color:#77736a;font-weight:normal;font-family:'Liberation Mono',monospace;-webkit-text-stroke:0;">4</div>
<div class="t" style="left:978.9px;top:762.42px;font-size:16px;line-height:16px;color:#77736a;font-weight:normal;font-family:'Liberation Mono',monospace;-webkit-text-stroke:0;">5</div>
<div class="t" style="left:978.9px;top:779.84px;font-size:16px;line-height:16px;color:#77736a;font-weight:normal;font-family:'Liberation Mono',monospace;-webkit-text-stroke:0;">6</div>
<div class="t" style="left:978.9px;top:797.26px;font-size:16px;line-height:16px;color:#77736a;font-weight:normal;font-family:'Liberation Mono',monospace;-webkit-text-stroke:0;">7</div>
<div class="t" style="left:978.9px;top:814.68px;font-size:16px;line-height:16px;color:#77736a;font-weight:normal;font-family:'Liberation Mono',monospace;-webkit-text-stroke:0;">8</div>
<div class="t" style="left:978.9px;top:832.10px;font-size:16px;line-height:16px;color:#77736a;font-weight:normal;font-family:'Liberation Mono',monospace;-webkit-text-stroke:0;">9</div>
<div class="t" style="left:969.3px;top:849.52px;font-size:16px;line-height:16px;color:#77736a;font-weight:normal;font-family:'Liberation Mono',monospace;-webkit-text-stroke:0;">10</div>
<div class="t" style="left:969.3px;top:866.94px;font-size:16px;line-height:16px;color:#77736a;font-weight:normal;font-family:'Liberation Mono',monospace;-webkit-text-stroke:0;">11</div>
<div class="t" style="left:969.3px;top:884.36px;font-size:16px;line-height:16px;color:#77736a;font-weight:normal;font-family:'Liberation Mono',monospace;-webkit-text-stroke:0;">12</div>
<div class="t" style="left:969.3px;top:901.78px;font-size:16px;line-height:16px;color:#77736a;font-weight:normal;font-family:'Liberation Mono',monospace;-webkit-text-stroke:0;">13</div>
<div class="t" style="left:969.3px;top:919.20px;font-size:16px;line-height:16px;color:#77736a;font-weight:normal;font-family:'Liberation Mono',monospace;-webkit-text-stroke:0;">14</div>
<div class="t" style="left:969.3px;top:936.62px;font-size:16px;line-height:16px;color:#77736a;font-weight:normal;font-family:'Liberation Mono',monospace;-webkit-text-stroke:0;">15</div>
<div class="t" style="left:969.3px;top:954.04px;font-size:16px;line-height:16px;color:#77736a;font-weight:normal;font-family:'Liberation Mono',monospace;-webkit-text-stroke:0;">16</div>
<div style="left:997px;top:717.3199999999999px;width:9px;height:5px;border:1.5px solid #000;border-radius:2px;background:#fff"></div>
<div style="left:997px;top:804.42px;width:9px;height:5px;border:1.5px solid #000;border-radius:2px;background:#fff"></div>
<div style="left:1384px;top:690px;width:18px;height:277px;background:#f4f4f4;border-left:1px solid #e2e2e2"></div>
<div style="left:1385px;top:742px;width:17px;height:207px;background:#dadada"></div>
<svg style="position:absolute;left:1384px;top:692px;" width="18" height="18" viewBox="0 0 18 18"><path d="M4 12h10l-5-5z" fill="#555"/></svg>
<svg style="position:absolute;left:1384px;top:949px;" width="18" height="18" viewBox="0 0 18 18"><path d="M4 6h10l-5 5z" fill="#555"/></svg>
<div style="left:944px;top:967px;width:440px;height:17px;background:#f4f4f4;border-top:1px solid #e2e2e2"></div>
<div style="left:1021px;top:968px;width:344px;height:16px;background:#dadada"></div>
<svg style="position:absolute;left:944px;top:967px;" width="17" height="17" viewBox="0 0 17 17"><path d="M11 3.5v10l-5-5z" fill="#555"/></svg>
<svg style="position:absolute;left:1366px;top:967px;" width="18" height="17" viewBox="0 0 18 17"><path d="M6 3.5v10l5-5z" fill="#555"/></svg>
<div style="left:1384px;top:967px;width:18px;height:17px;background:#f0f0f0"></div>
<div style="left:944px;top:689px;width:458px;height:1px;background:#a8a8a8"></div>
<div style="left:983.75px;top:654px;width:101.25px;height:35px;background:#e9e9e9;border:1px solid #c8c8c8;border-bottom:none"></div>
<div style="left:1085px;top:652.5px;width:237.5px;height:37.5px;background:#fff;border:1px solid #c8c8c8;border-bottom:none"></div>
<div class="t" style="left:985.5px;top:666.65px;font-size:12.766px;line-height:12.766px;color:#000;font-weight:normal;font-family:'Liberation Sans',sans-serif;">m título 0</div>
<div class="t" style="left:1123.75px;top:667.26px;font-size:12.046px;line-height:12.046px;color:#000;font-weight:normal;font-family:'Liberation Sans',sans-serif;">Setup_Mapas_Municipais.py</div>
<svg style="position:absolute;left:1100px;top:660px;" width="20" height="20" viewBox="0 0 28 28"><path d="M6 3h12l5 5v18H6z" fill="#fff" stroke="#777" stroke-width="1.2"/><path d="M9 11h11M9 15h11M9 19h11M9 23h8" stroke="#999" stroke-width="1.2"/><path d="M16 3q4-1 6 1v4h-6z" fill="#3a78b8"/><path d="M22 8q1 4-3 5h-3V8z" fill="#f8d030"/></svg>
<svg style="position:absolute;left:1046px;top:666px;" width="18" height="16" viewBox="0 0 18 16"><path d="M3 2Q9 8 15 14M14 1Q8 8 3 14" stroke="#111" stroke-width="2.6" fill="none"/></svg>
<svg style="position:absolute;left:1285px;top:666px;" width="18" height="16" viewBox="0 0 18 16"><path d="M3 2Q9 8 15 14M14 1Q8 8 3 14" stroke="#111" stroke-width="2.6" fill="none"/></svg>
<div style="left:1324px;top:652px;width:19px;height:39px;background:#efefef;border:1px solid #c8c8c8;border-radius:3px"></div>
<div style="left:1343px;top:652px;width:19px;height:39px;background:#efefef;border:1px solid #c8c8c8;border-radius:3px"></div>
<svg style="position:absolute;left:1324px;top:665px;" width="19" height="14" viewBox="0 0 19 14"><path d="M12 3v8l-5-4z" fill="#666"/></svg>
<svg style="position:absolute;left:1343px;top:665px;" width="19" height="14" viewBox="0 0 19 14"><path d="M7 3v8l5-4z" fill="#888"/></svg>
<svg style="position:absolute;left:1368px;top:664px;" width="32" height="28" viewBox="0 0 32 28"><path d="M2 2h24l-12 13z" fill="#333"/><path d="M24 20h6l-3 3z" fill="#333"/></svg>
<div style="left:1402px;top:215px;width:8px;height:770px;background:#f0f0f0"></div>
<div class="t" style="left:1415.3px;top:222.68px;font-size:14.373px;line-height:14.373px;color:#000;font-weight:normal;font-family:'Liberation Sans',sans-serif;">Caixa de Ferramentas de Processamento</div>
<svg style="position:absolute;left:1886px;top:222px;" width="32" height="14" viewBox="0 0 32 14"><rect x="0.5" y="0.5" width="13" height="13" rx="2" fill="#f4f4f4" stroke="#777"/><rect x="17.5" y="0.5" width="13" height="13" rx="2" fill="#f4f4f4" stroke="#777"/><path d="M3 6.5h5v5H3z M5.5 6.5V3.5h5v5h-2.5" fill="none" stroke="#555"/><path d="M20.5 3.5l7 7M27.5 3.5l-7 7" stroke="#444" stroke-width="2"/></svg>
<svg style="position:absolute;left:1420px;top:249px;" width="20" height="20" viewBox="0 0 28 28"><polygon points="17.0,9.0 14.5,10.8 15.5,13.7 12.4,13.7 11.5,16.6 9.0,14.8 6.5,16.6 5.6,13.7 2.5,13.7 3.5,10.8 1.0,9.0 3.5,7.2 2.5,4.3 5.6,4.3 6.5,1.4 9.0,3.2 11.5,1.4 12.4,4.3 15.5,4.3 14.5,7.2" fill="#e01818"/><circle cx="9" cy="9" r="2.4" fill="#f0f0f0"/><polygon points="25.0,15.0 23.0,16.7 23.2,19.2 20.7,19.0 19.0,21.0 17.3,19.0 14.8,19.2 15.0,16.7 13.0,15.0 15.0,13.3 14.8,10.8 17.3,11.0 19.0,9.0 20.7,11.0 23.2,10.8 23.0,13.3" fill="#7a7a7a"/><circle cx="19" cy="15" r="1.8" fill="#f0f0f0"/><polygon points="16.0,22.0 14.3,23.4 14.5,25.5 12.4,25.3 11.0,27.0 9.6,25.3 7.5,25.5 7.7,23.4 6.0,22.0 7.7,20.6 7.5,18.5 9.6,18.7 11.0,17.0 12.4,18.7 14.5,18.5 14.3,20.6" fill="#8ab0f0"/><circle cx="11" cy="22" r="1.5" fill="#f0f0f0"/></svg>
<svg style="position:absolute;left:1452px;top:249px;" width="20" height="20" viewBox="0 0 28 28"><path d="M14 2q-7 0-7 4v3h7v1H5q-4 0-4 6t4 6h2v-4q0-4 4-4h7q3 0 3-3V6q0-4-7-4z" fill="#3a78b8"/><path d="M14 26q7 0 7-4v-3h-7v-1h9q4 0 4-6t-4-6h-2v4q0 4-4 4h-7q-3 0-3 3v5q0 4 7 4z" fill="#f8d030"/><circle cx="10.5" cy="5" r="1.2" fill="#fff"/></svg>
<svg style="position:absolute;left:1483px;top:249px;" width="20" height="20" viewBox="0 0 28 28"><circle cx="14" cy="14" r="12" fill="#fff" stroke="#777" stroke-width="1.6"/><path d="M14 6v8l5 5" fill="none" stroke="#666" stroke-width="1.6"/></svg>
<svg style="position:absolute;left:1514px;top:249px;" width="20" height="20" viewBox="0 0 28 28"><path d="M6 3h12l5 5v18H6z" fill="#fff" stroke="#888" stroke-width="1.2"/><path d="M9 11h11M9 15h11M9 19h11M9 23h8" stroke="#999" stroke-width="1.2"/></svg>
<svg style="position:absolute;left:1553px;top:249px;" width="20" height="20" viewBox="0 0 28 28"><rect x="3" y="3" width="15" height="15" fill="#fde254" stroke="#c8a800"/><path d="M14 26L15 20L24 8L26 10L17 22z" fill="#e8d040" stroke="#888" stroke-width="0.8"/></svg>
<svg style="position:absolute;left:1594px;top:249px;" width="20" height="20" viewBox="0 0 28 28"><path d="M13 13l11 11" stroke="#9a8030" stroke-width="5.5" stroke-linecap="round"/><path d="M13 13l11 11" stroke="#f0d070" stroke-width="3.5" stroke-linecap="round"/><path d="M3 7a7 7 0 0 0 10 8l2-2a7 7 0 0 0-8-10l4 4-1 3-3 1z" fill="#e8e8e8" stroke="#555" stroke-width="1.3" stroke-linejoin="round"/></svg>
<svg style="position:absolute;left:1433px;top:263px;" width="12" height="8" viewBox="0 0 12 8"><path d="M1 1.5h10l-5 5z" fill="#555"/></svg>
<svg style="position:absolute;left:1464px;top:263px;" width="12" height="8" viewBox="0 0 12 8"><path d="M1 1.5h10l-5 5z" fill="#555"/></svg>
<div style="left:1545px;top:250px;width:1px;height:19px;background:#d0d0d0"></div>
<div style="left:1584px;top:250px;width:1px;height:19px;background:#d0d0d0"></div>
<div style="left:1410px;top:279.5px;width:510px;height:26.5px;background:#fff;border:1px solid #a0a0a0;border-radius:3px"></div>
<svg style="position:absolute;left:1421px;top:286px;" width="16" height="16" viewBox="0 0 16 16"><circle cx="6.5" cy="6.5" r="5" fill="none" stroke="#666" stroke-width="1.3"/><path d="M10 10l5 5" stroke="#666" stroke-width="1.5"/></svg>
<div class="t" style="left:1446px;top:286.92px;font-size:12.209px;line-height:12.209px;color:#808080;font-weight:normal;font-family:'Liberation Sans',sans-serif;">Buscar...</div>
<div style="left:1410px;top:306px;width:510px;height:679px;background:#fff;border:1px solid #a8a8a8;border-right:none"></div>
<svg style="position:absolute;left:1420.5px;top:314.1px;" width="6" height="10" viewBox="0 0 6 10"><path d="M0.5 1L5.5 5L0.5 9z" fill="#555"/></svg>
<svg style="position:absolute;left:1441px;top:309.1px;" width="19" height="19" viewBox="0 0 28 28"><circle cx="14" cy="14" r="12" fill="#fff" stroke="#888" stroke-width="1.6"/><path d="M14 6v8l5 5" fill="none" stroke="#666" stroke-width="1.6"/></svg>
<div class="t" style="left:1468px;top:311.61px;font-size:14.7px;line-height:14.7px;color:#000;font-weight:normal;font-family:'Liberation Sans',sans-serif;">Usado recentemente</div>
<svg style="position:absolute;left:1420.5px;top:336.68px;" width="6" height="10" viewBox="0 0 6 10"><path d="M0.5 1L5.5 5L0.5 9z" fill="#555"/></svg>
<svg style="position:absolute;left:1441px;top:331.68px;" width="19" height="19" viewBox="0 0 28 28"><circle cx="13" cy="13" r="9" fill="none" stroke="#6aa430" stroke-width="4.5"/><path d="M15 15l9 10" stroke="#6aa430" stroke-width="4.5"/><path d="M10 11l6 6" stroke="#f0902a" stroke-width="3.5"/><circle cx="10" cy="11" r="2.3" fill="#f06030"/></svg>
<div class="t" style="left:1468px;top:334.19px;font-size:14.7px;line-height:14.7px;color:#000;font-weight:normal;font-family:'Liberation Sans',sans-serif;">Análise de dados Raster</div>
<svg style="position:absolute;left:1420.5px;top:359.26px;" width="6" height="10" viewBox="0 0 6 10"><path d="M0.5 1L5.5 5L0.5 9z" fill="#555"/></svg>
<svg style="position:absolute;left:1441px;top:354.26px;" width="19" height="19" viewBox="0 0 28 28"><circle cx="13" cy="13" r="9" fill="none" stroke="#6aa430" stroke-width="4.5"/><path d="M15 15l9 10" stroke="#6aa430" stroke-width="4.5"/><path d="M10 11l6 6" stroke="#f0902a" stroke-width="3.5"/><circle cx="10" cy="11" r="2.3" fill="#f06030"/></svg>
<div class="t" style="left:1468px;top:356.76px;font-size:14.7px;line-height:14.7px;color:#000;font-weight:normal;font-family:'Liberation Sans',sans-serif;">Análise de rede</div>
<svg style="position:absolute;left:1420.5px;top:381.84000000000003px;" width="6" height="10" viewBox="0 0 6 10"><path d="M0.5 1L5.5 5L0.5 9z" fill="#555"/></svg>
<svg style="position:absolute;left:1441px;top:376.84000000000003px;" width="19" height="19" viewBox="0 0 28 28"><circle cx="13" cy="13" r="9" fill="none" stroke="#6aa430" stroke-width="4.5"/><path d="M15 15l9 10" stroke="#6aa430" stroke-width="4.5"/><path d="M10 11l6 6" stroke="#f0902a" stroke-width="3.5"/><circle cx="10" cy="11" r="2.3" fill="#f06030"/></svg>
<div class="t" style="left:1468px;top:379.35px;font-size:14.7px;line-height:14.7px;color:#000;font-weight:normal;font-family:'Liberation Sans',sans-serif;">Análise vetorial</div>
<svg style="position:absolute;left:1420.5px;top:404.42px;" width="6" height="10" viewBox="0 0 6 10"><path d="M0.5 1L5.5 5L0.5 9z" fill="#555"/></svg>
<svg style="position:absolute;left:1441px;top:399.42px;" width="19" height="19" viewBox="0 0 28 28"><circle cx="13" cy="13" r="9" fill="none" stroke="#6aa430" stroke-width="4.5"/><path d="M15 15l9 10" stroke="#6aa430" stroke-width="4.5"/><path d="M10 11l6 6" stroke="#f0902a" stroke-width="3.5"/><circle cx="10" cy="11" r="2.3" fill="#f06030"/></svg>
<div class="t" style="left:1468px;top:401.93px;font-size:14.7px;line-height:14.7px;color:#000;font-weight:normal;font-family:'Liberation Sans',sans-serif;">Cartografia</div>
<svg style="position:absolute;left:1420.5px;top:427.0px;" width="6" height="10" viewBox="0 0 6 10"><path d="M0.5 1L5.5 5L0.5 9z" fill="#555"/></svg>
<svg style="position:absolute;left:1441px;top:422.0px;" width="19" height="19" viewBox="0 0 28 28"><circle cx="13" cy="13" r="9" fill="none" stroke="#6aa430" stroke-width="4.5"/><path d="M15 15l9 10" stroke="#6aa430" stroke-width="4.5"/><path d="M10 11l6 6" stroke="#f0902a" stroke-width="3.5"/><circle cx="10" cy="11" r="2.3" fill="#f06030"/></svg>
<div class="t" style="left:1468px;top:424.50px;font-size:14.7px;line-height:14.7px;color:#000;font-weight:normal;font-family:'Liberation Sans',sans-serif;">Conversão da nuvem de pontos</div>
<svg style="position:absolute;left:1420.5px;top:449.58000000000004px;" width="6" height="10" viewBox="0 0 6 10"><path d="M0.5 1L5.5 5L0.5 9z" fill="#555"/></svg>
<svg style="position:absolute;left:1441px;top:444.58000000000004px;" width="19" height="19" viewBox="0 0 28 28"><circle cx="13" cy="13" r="9" fill="none" stroke="#6aa430" stroke-width="4.5"/><path d="M15 15l9 10" stroke="#6aa430" stroke-width="4.5"/><path d="M10 11l6 6" stroke="#f0902a" stroke-width="3.5"/><circle cx="10" cy="11" r="2.3" fill="#f06030"/></svg>
<div class="t" style="left:1468px;top:447.09px;font-size:14.7px;line-height:14.7px;color:#000;font-weight:normal;font-family:'Liberation Sans',sans-serif;">Criação de raster</div>
<svg style="position:absolute;left:1420.5px;top:472.16px;" width="6" height="10" viewBox="0 0 6 10"><path d="M0.5 1L5.5 5L0.5 9z" fill="#555"/></svg>
<svg style="position:absolute;left:1441px;top:467.16px;" width="19" height="19" viewBox="0 0 28 28"><circle cx="13" cy="13" r="9" fill="none" stroke="#6aa430" stroke-width="4.5"/><path d="M15 15l9 10" stroke="#6aa430" stroke-width="4.5"/><path d="M10 11l6 6" stroke="#f0902a" stroke-width="3.5"/><circle cx="10" cy="11" r="2.3" fill="#f06030"/></svg>
<div class="t" style="left:1468px;top:469.67px;font-size:14.7px;line-height:14.7px;color:#000;font-weight:normal;font-family:'Liberation Sans',sans-serif;">Criação de vetor</div>
<svg style="position:absolute;left:1420.5px;top:494.74px;" width="6" height="10" viewBox="0 0 6 10"><path d="M0.5 1L5.5 5L0.5 9z" fill="#555"/></svg>
<svg style="position:absolute;left:1441px;top:489.74px;" width="19" height="19" viewBox="0 0 28 28"><circle cx="13" cy="13" r="9" fill="none" stroke="#6aa430" stroke-width="4.5"/><path d="M15 15l9 10" stroke="#6aa430" stroke-width="4.5"/><path d="M10 11l6 6" stroke="#f0902a" stroke-width="3.5"/><circle cx="10" cy="11" r="2.3" fill="#f06030"/></svg>
<div class="t" style="left:1468px;top:492.25px;font-size:14.7px;line-height:14.7px;color:#000;font-weight:normal;font-family:'Liberation Sans',sans-serif;">Database</div>
<svg style="position:absolute;left:1420.5px;top:517.3199999999999px;" width="6" height="10" viewBox="0 0 6 10"><path d="M0.5 1L5.5 5L0.5 9z" fill="#555"/></svg>
<svg style="position:absolute;left:1441px;top:512.3199999999999px;" width="19" height="19" viewBox="0 0 28 28"><circle cx="13" cy="13" r="9" fill="none" stroke="#6aa430" stroke-width="4.5"/><path d="M15 15l9 10" stroke="#6aa430" stroke-width="4.5"/><path d="M10 11l6 6" stroke="#f0902a" stroke-width="3.5"/><circle cx="10" cy="11" r="2.3" fill="#f06030"/></svg>
<div class="t" style="left:1468px;top:514.82px;font-size:14.7px;line-height:14.7px;color:#000;font-weight:normal;font-family:'Liberation Sans',sans-serif;">Extração de Nuvem de Pontos</div>
<svg style="position:absolute;left:1420.5px;top:539.9px;" width="6" height="10" viewBox="0 0 6 10"><path d="M0.5 1L5.5 5L0.5 9z" fill="#555"/></svg>
<svg style="position:absolute;left:1441px;top:534.9px;" width="19" height="19" viewBox="0 0 28 28"><circle cx="13" cy="13" r="9" fill="none" stroke="#6aa430" stroke-width="4.5"/><path d="M15 15l9 10" stroke="#6aa430" stroke-width="4.5"/><path d="M10 11l6 6" stroke="#f0902a" stroke-width="3.5"/><circle cx="10" cy="11" r="2.3" fill="#f06030"/></svg>
<div class="t" style="left:1468px;top:537.40px;font-size:14.7px;line-height:14.7px;color:#000;font-weight:normal;font-family:'Liberation Sans',sans-serif;">Ferramentas de arquivo</div>
<svg style="position:absolute;left:1420.5px;top:562.48px;" width="6" height="10" viewBox="0 0 6 10"><path d="M0.5 1L5.5 5L0.5 9z" fill="#555"/></svg>
<svg style="position:absolute;left:1441px;top:557.48px;" width="19" height="19" viewBox="0 0 28 28"><circle cx="13" cy="13" r="9" fill="none" stroke="#6aa430" stroke-width="4.5"/><path d="M15 15l9 10" stroke="#6aa430" stroke-width="4.5"/><path d="M10 11l6 6" stroke="#f0902a" stroke-width="3.5"/><circle cx="10" cy="11" r="2.3" fill="#f06030"/></svg>
<div class="t" style="left:1468px;top:559.99px;font-size:14.7px;line-height:14.7px;color:#000;font-weight:normal;font-family:'Liberation Sans',sans-serif;">Ferramentas de camada</div>
<svg style="position:absolute;left:1420.5px;top:585.06px;" width="6" height="10" viewBox="0 0 6 10"><path d="M0.5 1L5.5 5L0.5 9z" fill="#555"/></svg>
<svg style="position:absolute;left:1441px;top:580.06px;" width="19" height="19" viewBox="0 0 28 28"><circle cx="13" cy="13" r="9" fill="none" stroke="#6aa430" stroke-width="4.5"/><path d="M15 15l9 10" stroke="#6aa430" stroke-width="4.5"/><path d="M10 11l6 6" stroke="#f0902a" stroke-width="3.5"/><circle cx="10" cy="11" r="2.3" fill="#f06030"/></svg>
<div class="t" style="left:1468px;top:582.56px;font-size:14.7px;line-height:14.7px;color:#000;font-weight:normal;font-family:'Liberation Sans',sans-serif;">Ferramentas raster</div>
<svg style="position:absolute;left:1420.5px;top:607.64px;" width="6" height="10" viewBox="0 0 6 10"><path d="M0.5 1L5.5 5L0.5 9z" fill="#555"/></svg>
<svg style="position:absolute;left:1441px;top:602.64px;" width="19" height="19" viewBox="0 0 28 28"><circle cx="13" cy="13" r="9" fill="none" stroke="#6aa430" stroke-width="4.5"/><path d="M15 15l9 10" stroke="#6aa430" stroke-width="4.5"/><path d="M10 11l6 6" stroke="#f0902a" stroke-width="3.5"/><circle cx="10" cy="11" r="2.3" fill="#f06030"/></svg>
<div class="t" style="left:1468px;top:605.14px;font-size:14.7px;line-height:14.7px;color:#000;font-weight:normal;font-family:'Liberation Sans',sans-serif;">Geometria do vetor</div>
<svg style="position:absolute;left:1420.5px;top:630.22px;" width="6" height="10" viewBox="0 0 6 10"><path d="M0.5 1L5.5 5L0.5 9z" fill="#555"/></svg>
<svg style="position:absolute;left:1441px;top:625.22px;" width="19" height="19" viewBox="0 0 28 28"><circle cx="13" cy="13" r="9" fill="none" stroke="#6aa430" stroke-width="4.5"/><path d="M15 15l9 10" stroke="#6aa430" stroke-width="4.5"/><path d="M10 11l6 6" stroke="#f0902a" stroke-width="3.5"/><circle cx="10" cy="11" r="2.3" fill="#f06030"/></svg>
<div class="t" style="left:1468px;top:627.73px;font-size:14.7px;line-height:14.7px;color:#000;font-weight:normal;font-family:'Liberation Sans',sans-serif;">Gerenciamento de dados da nuvem de pontos</div>
<svg style="position:absolute;left:1420.5px;top:652.8px;" width="6" height="10" viewBox="0 0 6 10"><path d="M0.5 1L5.5 5L0.5 9z" fill="#555"/></svg>
<svg style="position:absolute;left:1441px;top:647.8px;" width="19" height="19" viewBox="0 0 28 28"><circle cx="13" cy="13" r="9" fill="none" stroke="#6aa430" stroke-width="4.5"/><path d="M15 15l9 10" stroke="#6aa430" stroke-width="4.5"/><path d="M10 11l6 6" stroke="#f0902a" stroke-width="3.5"/><circle cx="10" cy="11" r="2.3" fill="#f06030"/></svg>
<div class="t" style="left:1468px;top:650.30px;font-size:14.7px;line-height:14.7px;color:#000;font-weight:normal;font-family:'Liberation Sans',sans-serif;">GPS</div>
<svg style="position:absolute;left:1420.5px;top:675.38px;" width="6" height="10" viewBox="0 0 6 10"><path d="M0.5 1L5.5 5L0.5 9z" fill="#555"/></svg>
<svg style="position:absolute;left:1441px;top:670.38px;" width="19" height="19" viewBox="0 0 28 28"><circle cx="13" cy="13" r="9" fill="none" stroke="#6aa430" stroke-width="4.5"/><path d="M15 15l9 10" stroke="#6aa430" stroke-width="4.5"/><path d="M10 11l6 6" stroke="#f0902a" stroke-width="3.5"/><circle cx="10" cy="11" r="2.3" fill="#f06030"/></svg>
<div class="t" style="left:1468px;top:672.88px;font-size:14.7px;line-height:14.7px;color:#000;font-weight:normal;font-family:'Liberation Sans',sans-serif;">Interpolar</div>
<svg style="position:absolute;left:1420.5px;top:697.96px;" width="6" height="10" viewBox="0 0 6 10"><path d="M0.5 1L5.5 5L0.5 9z" fill="#555"/></svg>
<svg style="position:absolute;left:1441px;top:692.96px;" width="19" height="19" viewBox="0 0 28 28"><circle cx="13" cy="13" r="9" fill="none" stroke="#6aa430" stroke-width="4.5"/><path d="M15 15l9 10" stroke="#6aa430" stroke-width="4.5"/><path d="M10 11l6 6" stroke="#f0902a" stroke-width="3.5"/><circle cx="10" cy="11" r="2.3" fill="#f06030"/></svg>
<div class="t" style="left:1468px;top:695.47px;font-size:14.7px;line-height:14.7px;color:#000;font-weight:normal;font-family:'Liberation Sans',sans-serif;">Malha</div>
<svg style="position:absolute;left:1420.5px;top:720.54px;" width="6" height="10" viewBox="0 0 6 10"><path d="M0.5 1L5.5 5L0.5 9z" fill="#555"/></svg>
<svg style="position:absolute;left:1441px;top:715.54px;" width="19" height="19" viewBox="0 0 28 28"><circle cx="13" cy="13" r="9" fill="none" stroke="#6aa430" stroke-width="4.5"/><path d="M15 15l9 10" stroke="#6aa430" stroke-width="4.5"/><path d="M10 11l6 6" stroke="#f0902a" stroke-width="3.5"/><circle cx="10" cy="11" r="2.3" fill="#f06030"/></svg>
<div class="t" style="left:1468px;top:718.04px;font-size:14.7px;line-height:14.7px;color:#000;font-weight:normal;font-family:'Liberation Sans',sans-serif;">Mosaico vetor</div>
<svg style="position:absolute;left:1420.5px;top:743.12px;" width="6" height="10" viewBox="0 0 6 10"><path d="M0.5 1L5.5 5L0.5 9z" fill="#555"/></svg>
<svg style="position:absolute;left:1441px;top:738.12px;" width="19" height="19" viewBox="0 0 28 28"><circle cx="13" cy="13" r="9" fill="none" stroke="#6aa430" stroke-width="4.5"/><path d="M15 15l9 10" stroke="#6aa430" stroke-width="4.5"/><path d="M10 11l6 6" stroke="#f0902a" stroke-width="3.5"/><circle cx="10" cy="11" r="2.3" fill="#f06030"/></svg>
<div class="t" style="left:1468px;top:740.62px;font-size:14.7px;line-height:14.7px;color:#000;font-weight:normal;font-family:'Liberation Sans',sans-serif;">Mosaicos 3D</div>
<svg style="position:absolute;left:1420.5px;top:765.7px;" width="6" height="10" viewBox="0 0 6 10"><path d="M0.5 1L5.5 5L0.5 9z" fill="#555"/></svg>
<svg style="position:absolute;left:1441px;top:760.7px;" width="19" height="19" viewBox="0 0 28 28"><circle cx="13" cy="13" r="9" fill="none" stroke="#6aa430" stroke-width="4.5"/><path d="M15 15l9 10" stroke="#6aa430" stroke-width="4.5"/><path d="M10 11l6 6" stroke="#f0902a" stroke-width="3.5"/><circle cx="10" cy="11" r="2.3" fill="#f06030"/></svg>
<div class="t" style="left:1468px;top:763.21px;font-size:14.7px;line-height:14.7px;color:#000;font-weight:normal;font-family:'Liberation Sans',sans-serif;">Plotar</div>
<svg style="position:absolute;left:1420.5px;top:788.28px;" width="6" height="10" viewBox="0 0 6 10"><path d="M0.5 1L5.5 5L0.5 9z" fill="#555"/></svg>
<svg style="position:absolute;left:1441px;top:783.28px;" width="19" height="19" viewBox="0 0 28 28"><circle cx="13" cy="13" r="9" fill="none" stroke="#6aa430" stroke-width="4.5"/><path d="M15 15l9 10" stroke="#6aa430" stroke-width="4.5"/><path d="M10 11l6 6" stroke="#f0902a" stroke-width="3.5"/><circle cx="10" cy="11" r="2.3" fill="#f06030"/></svg>
<div class="t" style="left:1468px;top:785.78px;font-size:14.7px;line-height:14.7px;color:#000;font-weight:normal;font-family:'Liberation Sans',sans-serif;">Raster de análise do terreno</div>
<svg style="position:absolute;left:1420.5px;top:810.86px;" width="6" height="10" viewBox="0 0 6 10"><path d="M0.5 1L5.5 5L0.5 9z" fill="#555"/></svg>
<svg style="position:absolute;left:1441px;top:805.86px;" width="19" height="19" viewBox="0 0 28 28"><circle cx="13" cy="13" r="9" fill="none" stroke="#6aa430" stroke-width="4.5"/><path d="M15 15l9 10" stroke="#6aa430" stroke-width="4.5"/><path d="M10 11l6 6" stroke="#f0902a" stroke-width="3.5"/><circle cx="10" cy="11" r="2.3" fill="#f06030"/></svg>
<div class="t" style="left:1468px;top:808.37px;font-size:14.7px;line-height:14.7px;color:#000;font-weight:normal;font-family:'Liberation Sans',sans-serif;">Selecionar vetor</div>
<svg style="position:absolute;left:1420.5px;top:833.4399999999999px;" width="6" height="10" viewBox="0 0 6 10"><path d="M0.5 1L5.5 5L0.5 9z" fill="#555"/></svg>
<svg style="position:absolute;left:1441px;top:828.4399999999999px;" width="19" height="19" viewBox="0 0 28 28"><circle cx="13" cy="13" r="9" fill="none" stroke="#6aa430" stroke-width="4.5"/><path d="M15 15l9 10" stroke="#6aa430" stroke-width="4.5"/><path d="M10 11l6 6" stroke="#f0902a" stroke-width="3.5"/><circle cx="10" cy="11" r="2.3" fill="#f06030"/></svg>
<div class="t" style="left:1468px;top:830.94px;font-size:14.7px;line-height:14.7px;color:#000;font-weight:normal;font-family:'Liberation Sans',sans-serif;">Sobreposição de vetor</div>
<svg style="position:absolute;left:1420.5px;top:856.02px;" width="6" height="10" viewBox="0 0 6 10"><path d="M0.5 1L5.5 5L0.5 9z" fill="#555"/></svg>
<svg style="position:absolute;left:1441px;top:851.02px;" width="19" height="19" viewBox="0 0 28 28"><circle cx="13" cy="13" r="9" fill="none" stroke="#6aa430" stroke-width="4.5"/><path d="M15 15l9 10" stroke="#6aa430" stroke-width="4.5"/><path d="M10 11l6 6" stroke="#f0902a" stroke-width="3.5"/><circle cx="10" cy="11" r="2.3" fill="#f06030"/></svg>
<div class="t" style="left:1468px;top:853.52px;font-size:14.7px;line-height:14.7px;color:#000;font-weight:normal;font-family:'Liberation Sans',sans-serif;">Tabela de vetores</div>
<svg style="position:absolute;left:1420.5px;top:878.6px;" width="6" height="10" viewBox="0 0 6 10"><path d="M0.5 1L5.5 5L0.5 9z" fill="#555"/></svg>
<svg style="position:absolute;left:1441px;top:873.6px;" width="19" height="19" viewBox="0 0 28 28"><circle cx="13" cy="13" r="9" fill="none" stroke="#6aa430" stroke-width="4.5"/><path d="M15 15l9 10" stroke="#6aa430" stroke-width="4.5"/><path d="M10 11l6 6" stroke="#f0902a" stroke-width="3.5"/><circle cx="10" cy="11" r="2.3" fill="#f06030"/></svg>
<div class="t" style="left:1468px;top:876.11px;font-size:14.7px;line-height:14.7px;color:#000;font-weight:normal;font-family:'Liberation Sans',sans-serif;">Vector coverage</div>
<svg style="position:absolute;left:1420.5px;top:901.18px;" width="6" height="10" viewBox="0 0 6 10"><path d="M0.5 1L5.5 5L0.5 9z" fill="#555"/></svg>
<svg style="position:absolute;left:1441px;top:896.18px;" width="19" height="19" viewBox="0 0 28 28"><circle cx="13" cy="13" r="9" fill="none" stroke="#6aa430" stroke-width="4.5"/><path d="M15 15l9 10" stroke="#6aa430" stroke-width="4.5"/><path d="M10 11l6 6" stroke="#f0902a" stroke-width="3.5"/><circle cx="10" cy="11" r="2.3" fill="#f06030"/></svg>
<div class="t" style="left:1468px;top:898.68px;font-size:14.7px;line-height:14.7px;color:#000;font-weight:normal;font-family:'Liberation Sans',sans-serif;">Vetor geral</div>
<svg style="position:absolute;left:1420.5px;top:923.76px;" width="6" height="10" viewBox="0 0 6 10"><path d="M0.5 1L5.5 5L0.5 9z" fill="#555"/></svg>
<svg style="position:absolute;left:1441px;top:918.76px;" width="19" height="19" viewBox="0 0 28 28"><path d="M3 3v23h23" stroke="#666" stroke-width="1.3" fill="none"/><path d="M1 5l2-3 2 3M24 24l3 2-3 2" stroke="#666" fill="none"/><path d="M5 21q6-2 9-9t10-8" stroke="#d040c0" stroke-width="1.6" fill="none"/><path d="M5 23q8 0 10-6t9-5" stroke="#3aa0c8" stroke-width="1.6" fill="none"/></svg>
<div class="t" style="left:1468px;top:921.26px;font-size:14.7px;line-height:14.7px;color:#000;font-weight:normal;font-family:'Liberation Sans',sans-serif;">DataPlotly</div>
<svg style="position:absolute;left:1420.5px;top:946.34px;" width="6" height="10" viewBox="0 0 6 10"><path d="M0.5 1L5.5 5L0.5 9z" fill="#555"/></svg>
<svg style="position:absolute;left:1441px;top:941.34px;" width="19" height="19" viewBox="0 0 28 28"><circle cx="11" cy="11" r="8.5" fill="#1a9a5a" stroke="#111" stroke-width="3"/><path d="M7 15q3-4 4-8t5-2" stroke="#28c8f0" stroke-width="2.5" fill="none"/><path d="M17 17l8 8" stroke="#111" stroke-width="4" stroke-linecap="round"/></svg>
<div class="t" style="left:1468px;top:943.85px;font-size:14.7px;line-height:14.7px;color:#000;font-weight:normal;font-family:'Liberation Sans',sans-serif;">dzetsaka</div>
<svg style="position:absolute;left:1420.5px;top:968.92px;" width="6" height="10" viewBox="0 0 6 10"><path d="M0.5 1L5.5 5L0.5 9z" fill="#555"/></svg>
<svg style="position:absolute;left:1441px;top:963.92px;" width="19" height="19" viewBox="0 0 28 28"><circle cx="15" cy="12" r="8" fill="#4a9ad8"/><path d="M10 10q4-3 8 0t-2 5z" fill="#5aba5a"/><path d="M6 4L14 12" stroke="#222" stroke-width="1.5"/><text x="1" y="26" font-family="Liberation Sans" font-weight="bold" font-size="8" fill="#111">GDAL</text></svg>
<div class="t" style="left:1468px;top:966.42px;font-size:14.7px;line-height:14.7px;color:#000;font-weight:normal;font-family:'Liberation Sans',sans-serif;">GDAL</div>
<div style="left:1900px;top:307px;width:18px;height:677px;background:linear-gradient(90deg,#f4f4f4,#fbfbfb);border-left:1px solid #dcdcdc"></div>
<div style="left:1901px;top:843px;width:17px;height:124px;background:#dfdfdf"></div>
<div style="left:1901px;top:324px;width:17px;height:1px;background:#c8c8c8"></div>
<div style="left:1901px;top:966px;width:17px;height:1px;background:#c8c8c8"></div>
<svg style="position:absolute;left:1900px;top:307px;" width="18" height="17" viewBox="0 0 18 17"><path d="M4.0 11h10l-5-5z" fill="#555"/></svg>
<svg style="position:absolute;left:1900px;top:967px;" width="18" height="17" viewBox="0 0 18 17"><path d="M4.0 6h10l-5 5z" fill="#555"/></svg>
<div style="left:5px;top:990px;width:300px;height:26px;background:#fff;border:1px solid #c4c4c4;border-radius:3px"></div>
<svg style="position:absolute;left:17px;top:995px;" width="16" height="16" viewBox="0 0 16 16"><circle cx="6.5" cy="6.5" r="5" fill="none" stroke="#555" stroke-width="1.3"/><path d="M10 10l5 5" stroke="#555" stroke-width="1.5"/></svg>
<div class="t" style="left:42px;top:998.10px;font-size:12.24px;line-height:12.24px;color:#666;font-weight:normal;font-family:'Liberation Sans',sans-serif;">Escreva para localizar (Ctrl+K)</div>
<div class="t" style="left:954.5px;top:997.67px;font-size:13.036px;line-height:13.036px;color:#000;font-weight:normal;font-family:'Liberation Sans',sans-serif;">Coordenada</div>
<div style="left:1032px;top:989.5px;width:94px;height:26px;background:#fff;border:1px solid #c4c4c4;border-radius:3px"></div>
<div class="t" style="left:1040px;top:996.42px;font-size:14.5px;line-height:14.5px;color:#000;font-weight:normal;font-family:'Liberation Sans',sans-serif;">-1,6°  -45,9°</div>
<svg style="position:absolute;left:1132px;top:992px;" width="20" height="20" viewBox="0 0 28 28"><path d="M6 8Q6 3 11 3T16 8V18Q16 24 11 24T6 18z" fill="#fff" stroke="#111" stroke-width="2.2"/><path d="M11 3V11M6 11H16" stroke="#111" stroke-width="1.5"/><path d="M18 3l5-2M19 7l4 1" stroke="#333" stroke-width="1.2"/></svg>
<div class="t" style="left:1169.5px;top:998.41px;font-size:12.161px;line-height:12.161px;color:#000;font-weight:normal;font-family:'Liberation Sans',sans-serif;">Escala</div>
<div style="left:1211px;top:989.5px;width:95px;height:26px;background:#fff;border:1px solid #c4c4c4;border-radius:3px"></div>
<div style="left:1281px;top:990.5px;width:1px;height:24px;background:#d4d4d4"></div>
<div class="t" style="left:1212px;top:996.42px;font-size:14.5px;line-height:14.5px;color:#000;font-weight:normal;font-family:'Liberation Sans',sans-serif;">1:1984992</div>
<svg style="position:absolute;left:1288px;top:998px;" width="12" height="8" viewBox="0 0 12 8"><path d="M1 1.5h10l-5 5z" fill="#666"/></svg>
<svg style="position:absolute;left:1320px;top:993px;" width="20" height="20" viewBox="0 0 28 28"><path d="M8 12V8a6 6 0 0 1 12 0v4" fill="none" stroke="#666" stroke-width="2.4"/><rect x="5" y="12" width="18" height="14" rx="2" fill="#666"/></svg>
<div class="t" style="left:1349.5px;top:998.05px;font-size:12.588px;line-height:12.588px;color:#000;font-weight:normal;font-family:'Liberation Sans',sans-serif;">Lupa</div>
<div style="left:1383.4px;top:990.7px;width:100.09999999999991px;height:24px;background:#fff;border:1px solid #c4c4c4;border-radius:3px"></div>
<div style="left:1465.8px;top:991.7px;width:1px;height:22px;background:#d4d4d4"></div>
<svg style="position:absolute;left:1466.8px;top:992px;" width="17" height="21" viewBox="0 0 17 21"><path d="M4 8l4.5-5 4.5 5z M4 13l4.5 5 4.5-5z" fill="#666"/></svg>
<div class="t" style="left:1389.4px;top:996.42px;font-size:14.5px;line-height:14.5px;color:#000;font-weight:normal;font-family:'Liberation Sans',sans-serif;">100%</div>
<div style="left:1556.6px;top:990.7px;width:99.80000000000018px;height:24px;background:#fff;border:1px solid #c4c4c4;border-radius:3px"></div>
<div style="left:1638px;top:991.7px;width:1px;height:22px;background:#d4d4d4"></div>
<svg style="position:absolute;left:1639px;top:992px;" width="17" height="21" viewBox="0 0 17 21"><path d="M4 8l4.5-5 4.5 5z M4 13l4.5 5 4.5-5z" fill="#666"/></svg>
<div class="t" style="left:1562.6px;top:996.42px;font-size:14.5px;line-height:14.5px;color:#000;font-weight:normal;font-family:'Liberation Sans',sans-serif;">0,0 °</div>
<div class="t" style="left:1495.3px;top:997.64px;font-size:13.076px;line-height:13.076px;color:#000;font-weight:normal;font-family:'Liberation Sans',sans-serif;">Rotação</div>
<div style="left:1665.4px;top:994px;width:17px;height:17px;background:#fff;border:1px solid #c8c8c8"></div>
<svg style="position:absolute;left:1667px;top:997px;" width="13" height="12" viewBox="0 0 13 12"><path d="M2 6.5L5 10L11 1.5" fill="none" stroke="#000" stroke-width="2"/></svg>
<div class="t" style="left:1688.8px;top:997.66px;font-size:13.045px;line-height:13.045px;color:#000;font-weight:normal;font-family:'Liberation Sans',sans-serif;">Renderizar</div>
<svg style="position:absolute;left:1772px;top:993px;" width="20" height="20" viewBox="0 0 28 28"><circle cx="14" cy="14" r="11" fill="none" stroke="#666" stroke-width="1.5"/><ellipse cx="14" cy="14" rx="5" ry="11" fill="none" stroke="#666" stroke-width="1.3"/><path d="M3 10h22M3 18h22M14 3v22" stroke="#666" stroke-width="1.3"/></svg>
<div class="t" style="left:1794.8px;top:998.03px;font-size:12.611px;line-height:12.611px;color:#000;font-weight:normal;font-family:'Liberation Sans',sans-serif;">EPSG:4674</div>
<svg style="position:absolute;left:1889px;top:992px;" width="22" height="22" viewBox="0 0 28 28"><path d="M14 3C7 3 2 7 2 12q0 4 4 7l-2 5 6-3q2 .6 4 .6c7 0 12-4 12-9.6S21 3 14 3z" fill="#555"/><circle cx="8.5" cy="12" r="1.8" fill="#fff"/><circle cx="14" cy="12" r="1.8" fill="#fff"/><circle cx="19.5" cy="12" r="1.8" fill="#fff"/></svg></body></html>
